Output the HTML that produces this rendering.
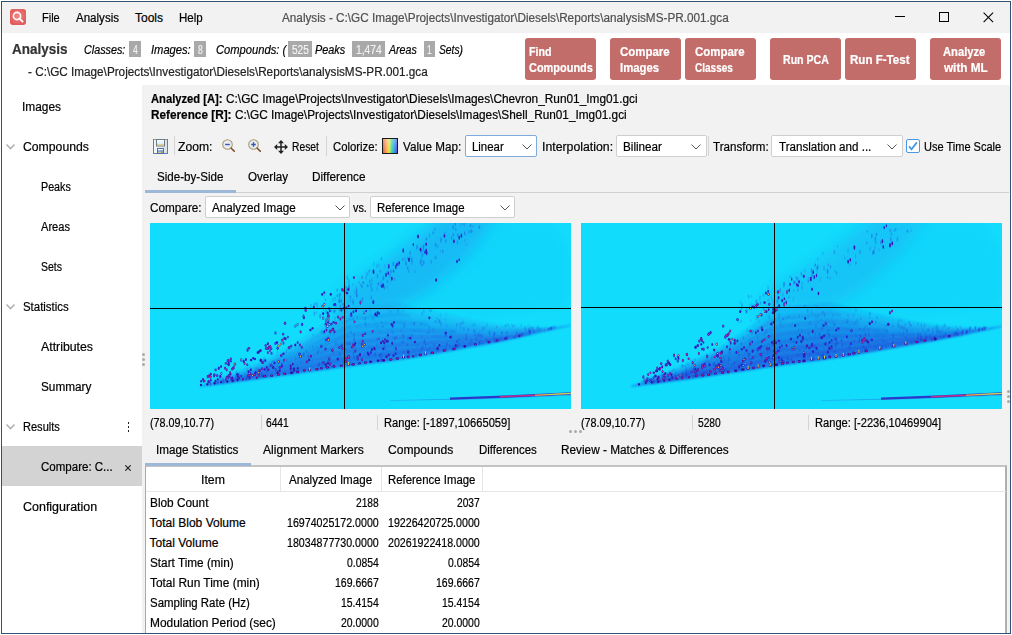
<!DOCTYPE html>
<html><head><meta charset="utf-8">
<style>
html,body{margin:0;padding:0;}
body{width:1012px;height:635px;position:relative;overflow:hidden;background:#fff;font-family:"Liberation Sans",sans-serif;color:#000;}
.a{position:absolute;box-sizing:border-box;}
.t{position:absolute;white-space:pre;transform-origin:0 0;font-family:"Liberation Sans",sans-serif;-webkit-text-stroke:0.2px currentColor;}
.btn{position:absolute;top:38px;width:71px;height:42px;background:#c36d6b;border-radius:3px;}
.badge{position:absolute;top:41px;height:16px;background:#a9a9a9;color:#f4f4f4;font-size:12px;line-height:15px;text-align:center;font-style:normal;}
.sep{position:absolute;width:1px;background:#d4d4d4;}
.dd{position:absolute;box-sizing:border-box;background:#fff;border:1px solid #cfcfcf;border-radius:2px;}
.chev{position:absolute;}
.img{position:absolute;top:223px;width:421px;height:186px;background:#12dcfc;overflow:hidden;}
.vl{position:absolute;top:0;width:1px;height:186px;background:#000;}
.hl{position:absolute;left:0;width:421px;height:1px;background:#000;}
</style></head><body>
<!-- frame -->
<div class="a" style="left:1px;top:1px;width:1010px;height:633px;border:1px solid #2f5275;"></div>
<!-- title bar -->
<div class="a" style="left:2px;top:2px;width:1008px;height:31px;background:#f2f2f2;"></div>
<svg class="a" style="left:10px;top:9px" width="16" height="16" viewBox="0 0 16 16">
  <defs><radialGradient id="ig" cx="0.5" cy="0.45" r="0.6"><stop offset="0" stop-color="#f08a8a"/><stop offset="1" stop-color="#e05656"/></radialGradient></defs>
  <rect x="0" y="0" width="16" height="16" rx="3" fill="url(#ig)"/>
  <circle cx="7" cy="7" r="3.6" fill="none" stroke="#fff" stroke-width="1.6"/>
  <line x1="9.6" y1="9.6" x2="12.6" y2="12.6" stroke="#fff" stroke-width="1.8" stroke-linecap="round"/>
</svg>
<div class="a" style="left:895px;top:16px;width:10px;height:1px;background:#000;"></div>
<div class="a" style="left:939px;top:12px;width:10px;height:10px;border:1px solid #000;"></div>
<svg class="a" style="left:983px;top:12px" width="11" height="11" viewBox="0 0 11 11"><path d="M0.6 0.6L10.1 10.1M10.1 0.6L0.6 10.1" stroke="#000" stroke-width="1.05"/></svg>

<!-- header buttons -->
<div class="btn" style="left:525px"></div>
<div class="btn" style="left:610px"></div>
<div class="btn" style="left:685px"></div>
<div class="btn" style="left:770px"></div>
<div class="btn" style="left:845px"></div>
<div class="btn" style="left:930px"></div>
<!-- badges -->
<div class="badge" style="left:129px;width:12px;"></div>
<div class="badge" style="left:194px;width:12px;"></div>
<div class="badge" style="left:288px;width:24px;"></div>
<div class="badge" style="left:352px;width:33px;"></div>
<div class="badge" style="left:424px;width:11px;"></div>

<!-- main panel -->
<div class="a" style="left:142px;top:85px;width:868px;height:548px;background:#f2f2f2;"></div>

<!-- sidebar -->
<div class="a" style="left:2px;top:446px;width:140px;height:40px;background:#d3d3d3;"></div>
<svg class="a" style="left:5px;top:143px" width="11" height="8" viewBox="0 0 11 8"><path d="M1.5 1.5L5.5 5.5L9.5 1.5" fill="none" stroke="#b2b2b2" stroke-width="1.6"/></svg>
<svg class="a" style="left:5px;top:303px" width="11" height="8" viewBox="0 0 11 8"><path d="M1.5 1.5L5.5 5.5L9.5 1.5" fill="none" stroke="#b2b2b2" stroke-width="1.6"/></svg>
<svg class="a" style="left:5px;top:423px" width="11" height="8" viewBox="0 0 11 8"><path d="M1.5 1.5L5.5 5.5L9.5 1.5" fill="none" stroke="#b2b2b2" stroke-width="1.6"/></svg>
<div class="a" style="left:127.5px;top:422px;width:1.6px;height:1.6px;background:#222;"></div>
<div class="a" style="left:127.5px;top:426px;width:1.6px;height:1.6px;background:#222;"></div>
<div class="a" style="left:127.5px;top:430px;width:1.6px;height:1.6px;background:#222;"></div>
<svg class="a" style="left:124.5px;top:464.5px" width="6" height="6" viewBox="0 0 6 6"><path d="M0.3 0.3L5.7 5.7M5.7 0.3L0.3 5.7" stroke="#222" stroke-width="1.2"/></svg>
<!-- sash dots -->
<div class="a" style="left:142px;top:353px;width:3px;height:3px;border-radius:50%;background:#aaa;"></div>
<div class="a" style="left:142px;top:358px;width:3px;height:3px;border-radius:50%;background:#aaa;"></div>
<div class="a" style="left:142px;top:363px;width:3px;height:3px;border-radius:50%;background:#aaa;"></div>

<!-- toolbar -->
<svg class="a" style="left:153px;top:139px" width="15" height="15" viewBox="0 0 15 15">
  <defs><linearGradient id="sv" x1="0" x2="0" y1="0" y2="1"><stop offset="0" stop-color="#ffffff"/><stop offset="1" stop-color="#cfe0f4"/></linearGradient>
  <linearGradient id="sb" x1="0" x2="1" y1="0" y2="0"><stop offset="0" stop-color="#f4f7fb"/><stop offset="1" stop-color="#d6e0ee"/></linearGradient></defs>
  <rect x="0.5" y="0.5" width="14" height="14" fill="url(#sb)" stroke="#5b7fb5"/>
  <line x1="1" y1="0.5" x2="14" y2="0.5" stroke="#8c9c98"/>
  <rect x="3.5" y="0.5" width="8" height="6.5" fill="url(#sv)" stroke="#6c7c84"/>
  <rect x="4" y="5.2" width="7" height="1.3" fill="#e8c878"/>
  <rect x="4.5" y="9.5" width="6" height="5" fill="#d0def2" stroke="#4f6fb0"/>
  <rect x="5" y="10" width="5" height="1.2" fill="#fff"/>
  <rect x="5" y="11.3" width="3.2" height="1.6" fill="#7ca0e0"/>
  <rect x="5" y="13" width="3.2" height="1" fill="#e0c070"/>
  <rect x="8.3" y="11" width="1.4" height="3" fill="#7a8a7a"/>
</svg>
<div class="sep" style="left:174px;top:136px;height:19px;"></div>
<svg class="a" style="left:221px;top:138px" width="15" height="15" viewBox="0 0 15 15">
  <circle cx="6.5" cy="6.5" r="4.8" fill="#e8ecf2" stroke="#ab9a70" stroke-width="1.1"/>
  <line x1="10.2" y1="10.2" x2="13.3" y2="13.3" stroke="#7a4a28" stroke-width="1.6" stroke-linecap="round"/>
  <line x1="4.2" y1="6.5" x2="8.8" y2="6.5" stroke="#3657b0" stroke-width="1.4"/>
</svg>
<svg class="a" style="left:247px;top:138px" width="15" height="15" viewBox="0 0 15 15">
  <circle cx="6.5" cy="6.5" r="4.8" fill="#e8ecf2" stroke="#ab9a70" stroke-width="1.1"/>
  <line x1="10.2" y1="10.2" x2="13.3" y2="13.3" stroke="#7a4a28" stroke-width="1.6" stroke-linecap="round"/>
  <line x1="4.2" y1="6.5" x2="8.8" y2="6.5" stroke="#3657b0" stroke-width="1.4"/>
  <line x1="6.5" y1="4.2" x2="6.5" y2="8.8" stroke="#3657b0" stroke-width="1.4"/>
</svg>
<svg class="a" style="left:274px;top:140px" width="14" height="14" viewBox="0 0 14 14">
  <path d="M7 0L10 3.2H4Z M7 14L10 10.8H4Z M0 7L3.2 4V10Z M14 7L10.8 4V10Z" fill="#222"/>
  <path d="M7 2V12M2 7H12" stroke="#222" stroke-width="1.5"/>
</svg>
<div class="sep" style="left:326px;top:136px;height:20px;"></div>
<svg class="a" style="left:382px;top:138px" width="16" height="16" viewBox="0 0 16 16">
  <defs><linearGradient id="cg" x1="0" x2="1" y1="0" y2="0">
    <stop offset="0" stop-color="#e84858"/><stop offset="0.25" stop-color="#f0a848"/><stop offset="0.45" stop-color="#e8e048"/>
    <stop offset="0.6" stop-color="#38e090"/><stop offset="0.8" stop-color="#3090f0"/><stop offset="1" stop-color="#5040d0"/></linearGradient>
    <linearGradient id="cv" x1="0" x2="0" y1="0" y2="1"><stop offset="0" stop-color="#fff" stop-opacity="0.35"/><stop offset="1" stop-color="#fff" stop-opacity="0"/></linearGradient></defs>
  <rect x="0.5" y="0.5" width="15" height="15" fill="url(#cg)" stroke="#1a1a1a"/>
  <rect x="1" y="1" width="14" height="14" fill="url(#cv)"/>
</svg>
<div class="dd" style="left:465px;top:135px;width:72px;height:22px;border-color:#7eaadc;"></div>
<svg class="a" style="left:522px;top:144px" width="10" height="6" viewBox="0 0 10 6"><path d="M0.5 0.5L5 5L9.5 0.5" fill="none" stroke="#555" stroke-width="1"/></svg>
<div class="dd" style="left:616px;top:135px;width:91px;height:22px;"></div>
<svg class="a" style="left:691px;top:144px" width="10" height="6" viewBox="0 0 10 6"><path d="M0.5 0.5L5 5L9.5 0.5" fill="none" stroke="#555" stroke-width="1"/></svg>
<div class="sep" style="left:708px;top:136px;height:20px;"></div>
<div class="dd" style="left:771px;top:135px;width:132px;height:22px;"></div>
<svg class="a" style="left:887px;top:144px" width="10" height="6" viewBox="0 0 10 6"><path d="M0.5 0.5L5 5L9.5 0.5" fill="none" stroke="#555" stroke-width="1"/></svg>
<div class="a" style="left:906px;top:139px;width:14px;height:14px;border:1px solid #4898e6;border-radius:2px;background:#fff;"></div>
<svg class="a" style="left:908px;top:141px" width="11" height="11" viewBox="0 0 11 11"><path d="M1 5.2L3.5 8.3L8.9 1.4" fill="none" stroke="#4898e6" stroke-width="1.8"/></svg>

<!-- tabs -->
<div class="a" style="left:145px;top:192px;width:864px;height:1px;background:#d0d0d0;"></div>
<div class="a" style="left:145px;top:190px;width:91px;height:3px;background:#9cb8d6;"></div>
<div class="dd" style="left:205px;top:196px;width:145px;height:22px;"></div>
<svg class="a" style="left:335px;top:205px" width="10" height="6" viewBox="0 0 10 6"><path d="M0.5 0.5L5 5L9.5 0.5" fill="none" stroke="#555" stroke-width="1"/></svg>
<div class="dd" style="left:370px;top:196px;width:145px;height:22px;"></div>
<svg class="a" style="left:500px;top:205px" width="10" height="6" viewBox="0 0 10 6"><path d="M0.5 0.5L5 5L9.5 0.5" fill="none" stroke="#555" stroke-width="1"/></svg>

<!-- images -->
<div class="img" style="left:150px;"><svg width="421" height="186" style="position:absolute;left:0;top:0"><defs><filter id="bl1" x="-30%" y="-30%" width="160%" height="160%"><feGaussianBlur stdDeviation="7"/></filter><filter id="bm1" x="-30%" y="-30%" width="160%" height="160%"><feGaussianBlur stdDeviation="1.0"/></filter><filter id="bs1" x="-50%" y="-50%" width="200%" height="200%"><feGaussianBlur stdDeviation="0.4"/></filter></defs><g filter="url(#bm1)" fill="#2048dc"><polygon points="50.0,163.8 58.0,162.8 66.0,161.7 74.0,160.6 82.0,159.6 90.0,158.5 98.0,157.4 106.0,156.4 114.0,155.3 122.0,154.2 130.0,153.1 138.0,152.0 146.0,150.9 154.0,149.7 162.0,148.6 170.0,147.5 178.0,146.4 186.0,145.3 194.0,144.1 202.0,143.1 210.0,142.0 218.0,141.0 226.0,139.9 234.0,138.9 242.0,137.9 250.0,136.8 258.0,135.8 266.0,134.4 274.0,132.9 282.0,131.5 290.0,130.0 298.0,128.5 306.0,127.1 314.0,125.6 322.0,124.1 330.0,122.7 338.0,121.2 346.0,119.7 354.0,118.1 362.0,116.2 370.0,114.3 378.0,112.5 386.0,110.6 394.0,108.8 402.0,106.9 410.0,105.0 418.0,103.2 421.0,102.5 421.0,102.0 418.0,102.7 410.0,104.4 402.0,106.2 394.0,107.8 386.0,109.3 378.0,110.9 370.0,112.5 362.0,114.0 354.0,115.6 346.0,116.9 338.0,118.0 330.0,119.1 322.0,120.2 314.0,121.3 306.0,122.4 298.0,123.4 290.0,124.5 282.0,125.6 274.0,126.6 266.0,127.7 258.0,128.7 250.0,129.3 242.0,130.3 234.0,131.3 226.0,132.3 218.0,133.3 210.0,134.4 202.0,135.4 194.0,136.5 186.0,138.1 178.0,139.8 170.0,141.5 162.0,143.2 154.0,144.9 146.0,146.6 138.0,148.1 130.0,149.6 122.0,151.1 114.0,152.5 106.0,153.9 98.0,155.3 90.0,156.6 82.0,157.9 74.0,159.3 66.0,160.6 58.0,162.0 50.0,163.3" fill-opacity="0.110"/><polygon points="50.0,163.8 58.0,162.8 66.0,161.7 74.0,160.6 82.0,159.6 90.0,158.5 98.0,157.4 106.0,156.4 114.0,155.3 122.0,154.2 130.0,153.1 138.0,152.0 146.0,150.9 154.0,149.7 162.0,148.6 170.0,147.5 178.0,146.4 186.0,145.3 194.0,144.1 202.0,143.1 210.0,142.0 218.0,141.0 226.0,139.9 234.0,138.9 242.0,137.9 250.0,136.8 258.0,135.8 266.0,134.4 274.0,132.9 282.0,131.5 290.0,130.0 298.0,128.5 306.0,127.1 314.0,125.6 322.0,124.1 330.0,122.7 338.0,121.2 346.0,119.7 354.0,118.1 362.0,116.2 370.0,114.3 378.0,112.5 386.0,110.6 394.0,108.8 402.0,106.9 410.0,105.0 418.0,103.2 421.0,102.5 421.0,102.0 418.0,102.6 410.0,104.3 402.0,106.0 394.0,107.3 386.0,108.6 378.0,109.8 370.0,111.1 362.0,112.4 354.0,113.6 346.0,114.6 338.0,115.4 330.0,116.1 322.0,116.8 314.0,117.5 306.0,118.2 298.0,118.8 290.0,119.5 282.0,120.2 274.0,120.8 266.0,121.5 258.0,122.1 250.0,122.3 242.0,123.3 234.0,124.3 226.0,125.2 218.0,126.2 210.0,127.2 202.0,128.1 194.0,129.3 186.0,131.5 178.0,133.8 170.0,136.0 162.0,138.3 154.0,140.5 146.0,142.8 138.0,144.8 130.0,146.6 122.0,148.4 114.0,150.1 106.0,151.9 98.0,153.6 90.0,155.2 82.0,156.8 74.0,158.5 66.0,160.1 58.0,161.7 50.0,163.3" fill-opacity="0.110"/><polygon points="50.0,163.8 58.0,162.8 66.0,161.7 74.0,160.6 82.0,159.6 90.0,158.5 98.0,157.4 106.0,156.4 114.0,155.3 122.0,154.2 130.0,153.1 138.0,152.0 146.0,150.9 154.0,149.7 162.0,148.6 170.0,147.5 178.0,146.4 186.0,145.3 194.0,144.1 202.0,143.1 210.0,142.0 218.0,141.0 226.0,139.9 234.0,138.9 242.0,137.9 250.0,136.8 258.0,135.8 266.0,134.4 274.0,132.9 282.0,131.5 290.0,130.0 298.0,128.5 306.0,127.1 314.0,125.6 322.0,124.1 330.0,122.7 338.0,121.2 346.0,119.7 354.0,118.1 362.0,116.2 370.0,114.3 378.0,112.5 386.0,110.6 394.0,108.8 402.0,106.9 410.0,105.0 418.0,103.2 421.0,102.5 421.0,102.0 418.0,102.6 410.0,104.2 402.0,105.7 394.0,106.8 386.0,107.8 378.0,108.7 370.0,109.7 362.0,110.7 354.0,111.6 346.0,112.3 338.0,112.7 330.0,113.0 322.0,113.4 314.0,113.7 306.0,114.0 298.0,114.2 290.0,114.5 282.0,114.8 274.0,115.0 266.0,115.3 258.0,115.5 250.0,115.3 242.0,116.2 234.0,117.2 226.0,118.1 218.0,119.1 210.0,120.0 202.0,120.9 194.0,122.1 186.0,124.9 178.0,127.7 170.0,130.6 162.0,133.4 154.0,136.2 146.0,139.0 138.0,141.5 130.0,143.6 122.0,145.7 114.0,147.8 106.0,149.9 98.0,151.9 90.0,153.8 82.0,155.7 74.0,157.6 66.0,159.5 58.0,161.4 50.0,163.3" fill-opacity="0.110"/><polygon points="50.0,163.8 58.0,162.8 66.0,161.7 74.0,160.6 82.0,159.6 90.0,158.5 98.0,157.4 106.0,156.4 114.0,155.3 122.0,154.2 130.0,153.1 138.0,152.0 146.0,150.9 154.0,149.7 162.0,148.6 170.0,147.5 178.0,146.4 186.0,145.3 194.0,144.1 202.0,143.1 210.0,142.0 218.0,141.0 226.0,139.9 234.0,138.9 242.0,137.9 250.0,136.8 258.0,135.8 266.0,134.4 274.0,132.9 282.0,131.5 290.0,130.0 298.0,128.5 306.0,127.1 314.0,125.6 322.0,124.1 330.0,122.7 338.0,121.2 346.0,119.7 354.0,118.1 362.0,116.2 370.0,114.3 378.0,112.5 386.0,110.6 394.0,108.8 402.0,106.9 410.0,105.0 418.0,103.2 421.0,102.5 421.0,102.0 418.0,102.6 410.0,104.0 402.0,105.5 394.0,106.4 386.0,107.0 378.0,107.7 370.0,108.3 362.0,109.0 354.0,109.7 346.0,110.0 338.0,110.0 330.0,110.0 322.0,110.0 314.0,109.9 306.0,109.8 298.0,109.6 290.0,109.5 282.0,109.4 274.0,109.2 266.0,109.1 258.0,108.9 250.0,108.3 242.0,109.2 234.0,110.1 226.0,111.0 218.0,111.9 210.0,112.8 202.0,113.7 194.0,114.9 186.0,118.3 178.0,121.7 170.0,125.1 162.0,128.5 154.0,131.8 146.0,135.2 138.0,138.1 130.0,140.6 122.0,143.1 114.0,145.5 106.0,147.9 98.0,150.2 90.0,152.4 82.0,154.6 74.0,156.8 66.0,159.0 58.0,161.1 50.0,163.3" fill-opacity="0.110"/><polygon points="50.0,163.8 58.0,162.8 66.0,161.7 74.0,160.6 82.0,159.6 90.0,158.5 98.0,157.4 106.0,156.4 114.0,155.3 122.0,154.2 130.0,153.1 138.0,152.0 146.0,150.9 154.0,149.7 162.0,148.6 170.0,147.5 178.0,146.4 186.0,145.3 194.0,144.1 202.0,143.1 210.0,142.0 218.0,141.0 226.0,139.9 234.0,138.9 242.0,137.9 250.0,136.8 258.0,135.8 266.0,134.4 274.0,132.9 282.0,131.5 290.0,130.0 298.0,128.5 306.0,127.1 314.0,125.6 322.0,124.1 330.0,122.7 338.0,121.2 346.0,119.7 354.0,118.1 362.0,116.2 370.0,114.3 378.0,112.5 386.0,110.6 394.0,108.8 402.0,106.9 410.0,105.0 418.0,103.2 421.0,102.5 421.0,102.0 418.0,102.5 410.0,103.9 402.0,105.3 394.0,105.9 386.0,106.2 378.0,106.6 370.0,107.0 362.0,107.3 354.0,107.7 346.0,107.7 338.0,107.3 330.0,107.0 322.0,106.6 314.0,106.1 306.0,105.6 298.0,105.0 290.0,104.5 282.0,104.0 274.0,103.4 266.0,102.9 258.0,102.3 250.0,101.3 242.0,102.2 234.0,103.0 226.0,103.9 218.0,104.8 210.0,105.6 202.0,106.5 194.0,107.7 186.0,111.7 178.0,115.6 170.0,119.6 162.0,123.5 154.0,127.5 146.0,131.4 138.0,134.8 130.0,137.6 122.0,140.4 114.0,143.1 106.0,145.9 98.0,148.5 90.0,151.0 82.0,153.5 74.0,155.9 66.0,158.4 58.0,160.9 50.0,163.3" fill-opacity="0.110"/><polygon points="50.0,163.8 58.0,162.8 66.0,161.7 74.0,160.6 82.0,159.6 90.0,158.5 98.0,157.4 106.0,156.4 114.0,155.3 122.0,154.2 130.0,153.1 138.0,152.0 146.0,150.9 154.0,149.7 162.0,148.6 170.0,147.5 178.0,146.4 186.0,145.3 194.0,144.1 202.0,143.1 210.0,142.0 218.0,141.0 226.0,139.9 234.0,138.9 242.0,137.9 250.0,136.8 258.0,135.8 266.0,134.4 274.0,132.9 282.0,131.5 290.0,130.0 298.0,128.5 306.0,127.1 314.0,125.6 322.0,124.1 330.0,122.7 338.0,121.2 346.0,119.7 354.0,118.1 362.0,116.2 370.0,114.3 378.0,112.5 386.0,110.6 394.0,108.8 402.0,106.9 410.0,105.0 418.0,103.2 421.0,102.5 421.0,102.0 418.0,102.5 410.0,103.8 402.0,105.0 394.0,105.4 386.0,105.5 378.0,105.5 370.0,105.6 362.0,105.7 354.0,105.7 346.0,105.4 338.0,104.7 330.0,103.9 322.0,103.2 314.0,102.3 306.0,101.4 298.0,100.4 290.0,99.5 282.0,98.6 274.0,97.6 266.0,96.7 258.0,95.7 250.0,94.3 242.0,95.1 234.0,96.0 226.0,96.8 218.0,97.6 210.0,98.4 202.0,99.3 194.0,100.6 186.0,105.1 178.0,109.6 170.0,114.1 162.0,118.6 154.0,123.1 146.0,127.7 138.0,131.5 130.0,134.6 122.0,137.7 114.0,140.8 106.0,143.9 98.0,146.9 90.0,149.6 82.0,152.3 74.0,155.1 66.0,157.8 58.0,160.6 50.0,163.3" fill-opacity="0.110"/><polygon points="50.0,163.8 58.0,162.8 66.0,161.7 74.0,160.6 82.0,159.6 90.0,158.5 98.0,157.4 106.0,156.4 114.0,155.3 122.0,154.2 130.0,153.1 138.0,152.0 146.0,150.9 154.0,149.7 162.0,148.6 170.0,147.5 178.0,146.4 186.0,145.3 194.0,144.1 202.0,143.1 210.0,142.0 218.0,141.0 226.0,139.9 234.0,138.9 242.0,137.9 250.0,136.8 258.0,135.8 266.0,134.4 274.0,132.9 282.0,131.5 290.0,130.0 298.0,128.5 306.0,127.1 314.0,125.6 322.0,124.1 330.0,122.7 338.0,121.2 346.0,119.7 354.0,118.1 362.0,116.2 370.0,114.3 378.0,112.5 386.0,110.6 394.0,108.8 402.0,106.9 410.0,105.0 418.0,103.2 421.0,102.5 421.0,102.0 418.0,102.4 410.0,103.6 402.0,104.8 394.0,104.9 386.0,104.7 378.0,104.4 370.0,104.2 362.0,104.0 354.0,103.7 346.0,103.1 338.0,102.0 330.0,100.9 322.0,99.8 314.0,98.5 306.0,97.2 298.0,95.8 290.0,94.5 282.0,93.2 274.0,91.8 266.0,90.5 258.0,89.1 250.0,87.3 242.0,88.1 234.0,88.9 226.0,89.7 218.0,90.5 210.0,91.3 202.0,92.1 194.0,93.4 186.0,98.5 178.0,103.5 170.0,108.6 162.0,113.7 154.0,118.8 146.0,123.9 138.0,128.1 130.0,131.6 122.0,135.1 114.0,138.5 106.0,141.9 98.0,145.2 90.0,148.2 82.0,151.2 74.0,154.3 66.0,157.3 58.0,160.3 50.0,163.3" fill-opacity="0.110"/><polygon points="50.0,163.8 58.0,162.8 66.0,161.7 74.0,160.6 82.0,159.6 90.0,158.5 98.0,157.4 106.0,156.4 114.0,155.3 122.0,154.2 130.0,153.1 138.0,152.0 146.0,150.9 154.0,149.7 162.0,148.6 170.0,147.5 178.0,146.4 186.0,145.3 194.0,144.1 202.0,143.1 210.0,142.0 218.0,141.0 226.0,139.9 234.0,138.9 242.0,137.9 250.0,136.8 258.0,135.8 266.0,134.4 274.0,132.9 282.0,131.5 290.0,130.0 298.0,128.5 306.0,127.1 314.0,125.6 322.0,124.1 330.0,122.7 338.0,121.2 346.0,119.7 354.0,118.1 362.0,116.2 370.0,114.3 378.0,112.5 386.0,110.6 394.0,108.8 402.0,106.9 410.0,105.0 418.0,103.2 421.0,102.5 421.0,102.0 418.0,102.4 410.0,103.5 402.0,104.6 394.0,104.5 386.0,103.9 378.0,103.4 370.0,102.8 362.0,102.3 354.0,101.8 346.0,100.8 338.0,99.3 330.0,97.8 322.0,96.4 314.0,94.7 306.0,93.0 298.0,91.2 290.0,89.5 282.0,87.8 274.0,86.0 266.0,84.3 258.0,82.5 250.0,80.3 242.0,81.1 234.0,81.8 226.0,82.6 218.0,83.3 210.0,84.1 202.0,84.8 194.0,86.2 186.0,91.9 178.0,97.5 170.0,103.2 162.0,108.8 154.0,114.4 146.0,120.1 138.0,124.8 130.0,128.6 122.0,132.4 114.0,136.1 106.0,139.9 98.0,143.5 90.0,146.8 82.0,150.1 74.0,153.4 66.0,156.7 58.0,160.0 50.0,163.3" fill-opacity="0.110"/></g><g filter="url(#bl1)"><polygon points="175.0,90.0 195.0,66.0 240.0,34.0 282.0,2.0 290.0,-10.0 350.0,-10.0 320.0,30.0 280.0,66.0 240.0,90.0" fill="#2058e0" fill-opacity="0.26"/><polygon points="250.0,80.0 310.0,30.0 350.0,-5.0 400.0,-5.0 421.0,30.0 421.0,80.0 330.0,95.0" fill="#18a8f2" fill-opacity="0.12"/></g><g filter="url(#bm1)" fill="none" stroke="#2a28c8"><polyline points="70.0,159.9 80.0,158.2 90.0,156.5 100.0,154.8 110.0,153.0 120.0,151.2 130.0,149.4 140.0,147.6 150.0,145.5 160.0,143.3 170.0,141.2 180.0,139.0 190.0,136.8 200.0,135.1 210.0,133.9 220.0,132.6 230.0,131.4 240.0,130.1 250.0,128.8 260.0,128.1 270.0,126.8 280.0,125.5 290.0,124.2 300.0,122.9 310.0,121.6 320.0,120.3 330.0,118.9 340.0,117.6 350.0,116.2 360.0,114.3 370.0,112.4 380.0,110.4" stroke-width="1.5" stroke-opacity="0.36"/><polyline points="82.0,156.7 92.0,154.6 102.0,152.5 112.0,150.3 122.0,148.0 132.0,145.7 142.0,143.5 152.0,140.5 162.0,137.6 172.0,134.7 182.0,131.8 192.0,128.9 202.0,127.2 212.0,126.0 222.0,124.8 232.0,123.6 242.0,122.3 252.0,121.3 262.0,121.0 272.0,120.2 282.0,119.4 292.0,118.7 302.0,117.9 312.0,117.1 322.0,116.4 332.0,115.5 342.0,114.7 352.0,113.7" stroke-width="1.5" stroke-opacity="0.32"/><polyline points="94.0,152.5 104.0,150.0 114.0,147.3 124.0,144.6 134.0,141.9 144.0,139.0 154.0,135.3 164.0,131.7 174.0,128.0 184.0,124.3 194.0,120.7 204.0,119.3 214.0,118.1 224.0,116.9 234.0,115.8 244.0,114.6 254.0,114.0 264.0,114.1 274.0,113.9 284.0,113.6 294.0,113.4 304.0,113.2 314.0,112.9 324.0,112.7 334.0,112.3" stroke-width="1.5" stroke-opacity="0.28"/><polyline points="106.0,147.3 116.0,144.2 126.0,141.1 136.0,137.9 146.0,134.2 156.0,129.8 166.0,125.4 176.0,121.0 186.0,116.5 196.0,112.5 206.0,111.3 216.0,110.2 226.0,109.1 236.0,108.0 246.0,106.9 256.0,106.9 266.0,107.4 276.0,107.7 286.0,108.0 296.0,108.3 306.0,108.6" stroke-width="1.5" stroke-opacity="0.24"/><polyline points="118.0,140.9 128.0,137.3 138.0,133.7 148.0,129.1 158.0,124.0 168.0,118.8 178.0,113.6 188.0,108.5 198.0,104.5 208.0,103.4 218.0,102.4 228.0,101.3 238.0,100.3 248.0,99.2 258.0,100.1 268.0,101.0 278.0,101.8" stroke-width="1.5" stroke-opacity="0.20"/><polyline points="130.0,133.4 140.0,129.3 150.0,123.8 160.0,117.8 170.0,111.9 180.0,106.0 190.0,100.1 200.0,96.6 210.0,95.6 220.0,94.6 230.0,93.5 240.0,92.5 250.0,91.5 260.0,93.4" stroke-width="1.5" stroke-opacity="0.16"/></g><g filter="url(#bs1)" fill="#2828d0"><ellipse cx="60.1" cy="159.6" rx="0.7" ry="2.1" fill-opacity="0.18"/><ellipse cx="253.2" cy="113.0" rx="0.8" ry="2.2" fill-opacity="0.32"/><ellipse cx="179.2" cy="109.2" rx="1.0" ry="1.7" fill-opacity="0.10"/><ellipse cx="231.6" cy="99.8" rx="0.8" ry="1.4" fill-opacity="0.21"/><ellipse cx="172.0" cy="108.2" rx="0.7" ry="1.9" fill-opacity="0.13"/><ellipse cx="399.8" cy="105.8" rx="1.0" ry="1.7" fill-opacity="0.22"/><ellipse cx="131.8" cy="142.8" rx="1.0" ry="2.4" fill-opacity="0.32"/><ellipse cx="270.9" cy="126.5" rx="0.8" ry="2.0" fill-opacity="0.19"/><ellipse cx="400.5" cy="105.7" rx="0.7" ry="1.4" fill-opacity="0.16"/><ellipse cx="82.0" cy="157.0" rx="0.7" ry="2.3" fill-opacity="0.26"/><ellipse cx="275.6" cy="121.7" rx="0.7" ry="1.9" fill-opacity="0.29"/><ellipse cx="89.4" cy="151.3" rx="0.7" ry="2.0" fill-opacity="0.16"/><ellipse cx="110.9" cy="153.3" rx="0.9" ry="1.8" fill-opacity="0.14"/><ellipse cx="372.4" cy="110.8" rx="0.7" ry="1.2" fill-opacity="0.19"/><ellipse cx="253.1" cy="88.3" rx="0.7" ry="1.8" fill-opacity="0.08"/><ellipse cx="297.0" cy="121.1" rx="0.8" ry="1.5" fill-opacity="0.32"/><ellipse cx="398.2" cy="106.1" rx="0.8" ry="1.3" fill-opacity="0.32"/><ellipse cx="373.0" cy="111.7" rx="0.9" ry="1.6" fill-opacity="0.24"/><ellipse cx="257.4" cy="121.7" rx="0.9" ry="1.6" fill-opacity="0.23"/><ellipse cx="183.1" cy="130.0" rx="0.7" ry="1.6" fill-opacity="0.13"/><ellipse cx="274.3" cy="118.9" rx="0.8" ry="2.3" fill-opacity="0.14"/><ellipse cx="242.6" cy="109.5" rx="0.9" ry="2.1" fill-opacity="0.17"/><ellipse cx="379.2" cy="106.2" rx="0.6" ry="1.9" fill-opacity="0.19"/><ellipse cx="382.7" cy="105.4" rx="0.9" ry="2.0" fill-opacity="0.22"/><ellipse cx="214.2" cy="120.2" rx="0.8" ry="1.2" fill-opacity="0.22"/><ellipse cx="205.9" cy="125.0" rx="0.8" ry="2.0" fill-opacity="0.20"/><ellipse cx="258.2" cy="128.2" rx="1.0" ry="2.0" fill-opacity="0.30"/><ellipse cx="314.7" cy="123.8" rx="0.7" ry="1.7" fill-opacity="0.24"/><ellipse cx="197.2" cy="120.6" rx="0.9" ry="2.1" fill-opacity="0.26"/><ellipse cx="200.2" cy="96.6" rx="0.9" ry="2.4" fill-opacity="0.08"/><ellipse cx="259.3" cy="130.3" rx="0.9" ry="2.3" fill-opacity="0.30"/><ellipse cx="171.3" cy="109.5" rx="0.8" ry="2.0" fill-opacity="0.10"/><ellipse cx="97.0" cy="146.0" rx="0.9" ry="1.7" fill-opacity="0.09"/><ellipse cx="162.7" cy="112.5" rx="0.7" ry="2.1" fill-opacity="0.12"/><ellipse cx="385.6" cy="107.9" rx="1.0" ry="1.8" fill-opacity="0.11"/><ellipse cx="196.1" cy="126.3" rx="0.7" ry="1.3" fill-opacity="0.24"/><ellipse cx="310.6" cy="104.8" rx="0.7" ry="1.4" fill-opacity="0.17"/><ellipse cx="308.4" cy="121.9" rx="1.0" ry="2.4" fill-opacity="0.20"/><ellipse cx="110.3" cy="147.1" rx="0.7" ry="2.3" fill-opacity="0.23"/><ellipse cx="203.0" cy="95.8" rx="0.9" ry="2.1" fill-opacity="0.09"/><ellipse cx="189.5" cy="132.2" rx="0.9" ry="1.5" fill-opacity="0.14"/><ellipse cx="214.3" cy="130.3" rx="0.9" ry="1.6" fill-opacity="0.14"/><ellipse cx="290.5" cy="92.5" rx="0.9" ry="1.9" fill-opacity="0.08"/><ellipse cx="128.9" cy="138.9" rx="1.0" ry="1.8" fill-opacity="0.29"/><ellipse cx="97.3" cy="154.0" rx="0.7" ry="2.0" fill-opacity="0.21"/><ellipse cx="286.0" cy="128.7" rx="0.9" ry="2.1" fill-opacity="0.17"/><ellipse cx="116.7" cy="148.3" rx="0.8" ry="1.8" fill-opacity="0.34"/><ellipse cx="107.1" cy="146.5" rx="0.8" ry="1.9" fill-opacity="0.15"/><ellipse cx="322.2" cy="102.3" rx="0.6" ry="1.6" fill-opacity="0.08"/><ellipse cx="264.3" cy="100.6" rx="0.8" ry="2.4" fill-opacity="0.23"/><ellipse cx="288.5" cy="127.3" rx="0.7" ry="2.2" fill-opacity="0.25"/><ellipse cx="138.7" cy="150.4" rx="0.9" ry="1.5" fill-opacity="0.15"/><ellipse cx="232.6" cy="103.5" rx="0.8" ry="1.2" fill-opacity="0.26"/><ellipse cx="194.8" cy="115.1" rx="0.7" ry="1.6" fill-opacity="0.12"/><ellipse cx="329.3" cy="119.8" rx="0.8" ry="2.1" fill-opacity="0.38"/><ellipse cx="67.6" cy="157.1" rx="0.7" ry="1.2" fill-opacity="0.19"/><ellipse cx="200.7" cy="124.2" rx="0.7" ry="1.4" fill-opacity="0.13"/><ellipse cx="231.2" cy="137.5" rx="1.0" ry="2.0" fill-opacity="0.38"/><ellipse cx="310.5" cy="101.1" rx="0.9" ry="2.1" fill-opacity="0.20"/><ellipse cx="215.1" cy="95.8" rx="0.9" ry="2.0" fill-opacity="0.24"/><ellipse cx="337.6" cy="117.7" rx="1.0" ry="1.5" fill-opacity="0.16"/><ellipse cx="296.4" cy="91.1" rx="0.9" ry="1.4" fill-opacity="0.11"/><ellipse cx="183.8" cy="110.4" rx="0.6" ry="2.1" fill-opacity="0.12"/><ellipse cx="70.0" cy="154.6" rx="0.9" ry="2.1" fill-opacity="0.20"/><ellipse cx="240.4" cy="88.7" rx="0.8" ry="1.8" fill-opacity="0.19"/><ellipse cx="329.8" cy="108.4" rx="0.7" ry="1.8" fill-opacity="0.12"/><ellipse cx="201.1" cy="109.3" rx="0.9" ry="1.8" fill-opacity="0.18"/><ellipse cx="356.7" cy="109.8" rx="0.8" ry="1.4" fill-opacity="0.27"/><ellipse cx="357.5" cy="101.3" rx="0.9" ry="1.3" fill-opacity="0.12"/><ellipse cx="136.7" cy="137.1" rx="0.7" ry="1.9" fill-opacity="0.29"/><ellipse cx="307.2" cy="118.2" rx="0.9" ry="1.7" fill-opacity="0.29"/><ellipse cx="136.1" cy="128.7" rx="0.8" ry="1.3" fill-opacity="0.11"/><ellipse cx="206.4" cy="134.9" rx="0.8" ry="1.5" fill-opacity="0.25"/><ellipse cx="325.3" cy="112.1" rx="0.7" ry="2.0" fill-opacity="0.23"/><ellipse cx="274.5" cy="117.9" rx="0.8" ry="2.2" fill-opacity="0.19"/><ellipse cx="202.6" cy="85.4" rx="0.9" ry="1.4" fill-opacity="0.18"/><ellipse cx="227.5" cy="104.3" rx="0.8" ry="1.6" fill-opacity="0.14"/><ellipse cx="237.9" cy="85.9" rx="0.7" ry="1.4" fill-opacity="0.19"/><ellipse cx="221.7" cy="124.8" rx="0.8" ry="1.7" fill-opacity="0.12"/><ellipse cx="252.0" cy="119.3" rx="0.9" ry="1.5" fill-opacity="0.13"/><ellipse cx="281.3" cy="87.2" rx="0.9" ry="2.0" fill-opacity="0.18"/><ellipse cx="86.1" cy="149.0" rx="1.0" ry="1.5" fill-opacity="0.09"/><ellipse cx="355.6" cy="102.8" rx="0.8" ry="1.6" fill-opacity="0.21"/><ellipse cx="352.6" cy="116.4" rx="0.7" ry="2.1" fill-opacity="0.20"/><ellipse cx="389.4" cy="106.7" rx="0.9" ry="1.4" fill-opacity="0.11"/><ellipse cx="207.2" cy="94.1" rx="0.9" ry="1.3" fill-opacity="0.22"/><ellipse cx="379.6" cy="110.2" rx="0.9" ry="2.4" fill-opacity="0.18"/><ellipse cx="307.1" cy="118.3" rx="0.6" ry="1.4" fill-opacity="0.27"/><ellipse cx="123.9" cy="138.4" rx="0.7" ry="1.3" fill-opacity="0.21"/><ellipse cx="284.4" cy="121.7" rx="1.0" ry="2.0" fill-opacity="0.18"/><ellipse cx="204.2" cy="112.2" rx="0.7" ry="2.4" fill-opacity="0.21"/><ellipse cx="185.0" cy="95.9" rx="0.7" ry="2.1" fill-opacity="0.17"/><ellipse cx="203.5" cy="130.6" rx="0.9" ry="2.1" fill-opacity="0.25"/><ellipse cx="334.1" cy="105.1" rx="0.9" ry="1.5" fill-opacity="0.10"/><ellipse cx="313.6" cy="100.0" rx="0.9" ry="1.6" fill-opacity="0.09"/><ellipse cx="133.1" cy="139.5" rx="0.6" ry="2.3" fill-opacity="0.13"/><ellipse cx="316.4" cy="111.9" rx="0.7" ry="1.3" fill-opacity="0.24"/><ellipse cx="87.9" cy="151.4" rx="0.8" ry="1.7" fill-opacity="0.28"/><ellipse cx="285.5" cy="98.4" rx="1.0" ry="1.6" fill-opacity="0.21"/><ellipse cx="245.0" cy="115.5" rx="0.9" ry="1.9" fill-opacity="0.27"/><ellipse cx="306.5" cy="123.9" rx="1.0" ry="1.8" fill-opacity="0.20"/><ellipse cx="261.9" cy="112.6" rx="0.7" ry="1.6" fill-opacity="0.23"/><ellipse cx="344.1" cy="110.5" rx="0.9" ry="1.6" fill-opacity="0.27"/><ellipse cx="404.9" cy="104.0" rx="0.8" ry="2.0" fill-opacity="0.22"/><ellipse cx="395.4" cy="103.7" rx="0.6" ry="1.4" fill-opacity="0.08"/><ellipse cx="225.8" cy="89.8" rx="0.6" ry="1.8" fill-opacity="0.12"/><ellipse cx="398.8" cy="105.7" rx="0.9" ry="2.2" fill-opacity="0.16"/><ellipse cx="272.1" cy="91.0" rx="0.8" ry="1.9" fill-opacity="0.20"/><ellipse cx="169.1" cy="141.2" rx="1.0" ry="2.1" fill-opacity="0.29"/><ellipse cx="179.3" cy="136.3" rx="0.8" ry="1.6" fill-opacity="0.19"/><ellipse cx="375.7" cy="107.1" rx="1.0" ry="2.1" fill-opacity="0.15"/><ellipse cx="72.6" cy="156.3" rx="0.8" ry="1.8" fill-opacity="0.29"/><ellipse cx="99.4" cy="142.7" rx="0.8" ry="1.6" fill-opacity="0.12"/><ellipse cx="402.7" cy="104.5" rx="0.6" ry="2.0" fill-opacity="0.11"/><ellipse cx="106.0" cy="145.9" rx="0.8" ry="2.2" fill-opacity="0.10"/><ellipse cx="401.2" cy="105.4" rx="1.0" ry="1.8" fill-opacity="0.36"/><ellipse cx="266.0" cy="132.0" rx="0.8" ry="2.4" fill-opacity="0.28"/><ellipse cx="114.4" cy="135.9" rx="0.9" ry="2.2" fill-opacity="0.20"/><ellipse cx="306.9" cy="101.7" rx="0.8" ry="1.8" fill-opacity="0.24"/><ellipse cx="142.0" cy="123.2" rx="0.8" ry="1.3" fill-opacity="0.17"/><ellipse cx="219.1" cy="123.5" rx="0.7" ry="1.2" fill-opacity="0.17"/><ellipse cx="223.2" cy="95.4" rx="0.9" ry="2.4" fill-opacity="0.17"/><ellipse cx="89.1" cy="152.5" rx="0.7" ry="1.3" fill-opacity="0.30"/><ellipse cx="152.9" cy="132.5" rx="0.7" ry="1.3" fill-opacity="0.17"/><ellipse cx="127.1" cy="143.7" rx="0.9" ry="1.3" fill-opacity="0.17"/><ellipse cx="247.8" cy="87.6" rx="0.8" ry="2.3" fill-opacity="0.21"/><ellipse cx="232.1" cy="134.6" rx="0.8" ry="2.3" fill-opacity="0.22"/><ellipse cx="220.7" cy="91.7" rx="1.0" ry="1.5" fill-opacity="0.08"/><ellipse cx="212.4" cy="112.3" rx="0.9" ry="1.9" fill-opacity="0.19"/><ellipse cx="371.4" cy="112.3" rx="0.8" ry="1.4" fill-opacity="0.22"/><ellipse cx="403.1" cy="104.5" rx="0.6" ry="2.0" fill-opacity="0.15"/><ellipse cx="330.6" cy="118.8" rx="0.8" ry="2.1" fill-opacity="0.13"/><ellipse cx="272.5" cy="124.3" rx="0.9" ry="1.9" fill-opacity="0.25"/><ellipse cx="228.7" cy="115.7" rx="1.0" ry="1.4" fill-opacity="0.28"/><ellipse cx="168.3" cy="142.6" rx="0.8" ry="2.0" fill-opacity="0.13"/><ellipse cx="117.7" cy="145.5" rx="0.7" ry="2.1" fill-opacity="0.11"/><ellipse cx="273.8" cy="88.4" rx="0.9" ry="2.2" fill-opacity="0.15"/><ellipse cx="126.5" cy="132.2" rx="0.9" ry="1.2" fill-opacity="0.08"/><ellipse cx="207.7" cy="140.7" rx="0.7" ry="1.5" fill-opacity="0.13"/><ellipse cx="175.7" cy="104.5" rx="0.7" ry="2.3" fill-opacity="0.18"/><ellipse cx="272.1" cy="125.1" rx="0.7" ry="1.8" fill-opacity="0.11"/><ellipse cx="333.1" cy="119.8" rx="0.7" ry="2.0" fill-opacity="0.13"/><ellipse cx="321.0" cy="117.4" rx="0.6" ry="1.3" fill-opacity="0.28"/><ellipse cx="379.2" cy="108.7" rx="0.8" ry="1.3" fill-opacity="0.30"/><ellipse cx="194.5" cy="139.1" rx="0.6" ry="2.1" fill-opacity="0.15"/><ellipse cx="258.0" cy="115.9" rx="1.0" ry="2.3" fill-opacity="0.19"/><ellipse cx="287.1" cy="95.3" rx="0.9" ry="1.5" fill-opacity="0.11"/><ellipse cx="323.5" cy="102.2" rx="0.6" ry="2.0" fill-opacity="0.17"/><ellipse cx="250.6" cy="107.9" rx="0.8" ry="1.3" fill-opacity="0.14"/><ellipse cx="92.7" cy="156.6" rx="0.8" ry="1.6" fill-opacity="0.18"/><ellipse cx="389.0" cy="105.9" rx="0.7" ry="2.0" fill-opacity="0.14"/><ellipse cx="362.9" cy="103.1" rx="0.9" ry="1.5" fill-opacity="0.20"/><ellipse cx="278.5" cy="109.5" rx="1.0" ry="2.3" fill-opacity="0.19"/><ellipse cx="278.3" cy="126.7" rx="0.6" ry="1.6" fill-opacity="0.25"/><ellipse cx="200.5" cy="138.6" rx="0.7" ry="1.8" fill-opacity="0.17"/><ellipse cx="173.5" cy="110.8" rx="0.7" ry="1.3" fill-opacity="0.12"/><ellipse cx="365.9" cy="113.8" rx="1.0" ry="2.1" fill-opacity="0.27"/><ellipse cx="234.9" cy="117.9" rx="0.6" ry="2.2" fill-opacity="0.33"/><ellipse cx="188.4" cy="136.2" rx="1.0" ry="1.2" fill-opacity="0.36"/><ellipse cx="107.4" cy="149.9" rx="0.8" ry="2.1" fill-opacity="0.13"/><ellipse cx="350.9" cy="115.9" rx="1.0" ry="2.0" fill-opacity="0.12"/><ellipse cx="143.8" cy="147.6" rx="0.6" ry="1.3" fill-opacity="0.27"/><ellipse cx="73.4" cy="158.6" rx="0.9" ry="2.1" fill-opacity="0.33"/><ellipse cx="209.0" cy="121.7" rx="0.6" ry="2.4" fill-opacity="0.13"/><ellipse cx="364.0" cy="114.2" rx="0.8" ry="1.2" fill-opacity="0.37"/><ellipse cx="313.9" cy="106.0" rx="1.0" ry="1.9" fill-opacity="0.10"/><ellipse cx="66.7" cy="159.5" rx="1.0" ry="1.9" fill-opacity="0.24"/><ellipse cx="316.4" cy="115.3" rx="0.8" ry="2.3" fill-opacity="0.32"/><ellipse cx="356.7" cy="114.5" rx="0.9" ry="2.3" fill-opacity="0.28"/><ellipse cx="71.2" cy="159.1" rx="0.7" ry="1.9" fill-opacity="0.14"/><ellipse cx="181.3" cy="144.4" rx="0.9" ry="1.4" fill-opacity="0.24"/><ellipse cx="332.8" cy="105.5" rx="0.8" ry="2.3" fill-opacity="0.18"/><ellipse cx="186.0" cy="120.3" rx="0.8" ry="2.2" fill-opacity="0.27"/><ellipse cx="77.1" cy="154.1" rx="0.8" ry="1.8" fill-opacity="0.16"/><ellipse cx="204.2" cy="115.9" rx="0.7" ry="2.2" fill-opacity="0.12"/><ellipse cx="344.7" cy="110.5" rx="1.0" ry="2.3" fill-opacity="0.13"/><ellipse cx="86.6" cy="148.8" rx="0.6" ry="1.2" fill-opacity="0.13"/><ellipse cx="312.3" cy="100.0" rx="0.9" ry="1.5" fill-opacity="0.11"/><ellipse cx="203.8" cy="134.3" rx="0.7" ry="1.4" fill-opacity="0.26"/><ellipse cx="394.5" cy="106.8" rx="0.7" ry="2.3" fill-opacity="0.12"/><ellipse cx="96.2" cy="156.1" rx="0.9" ry="2.2" fill-opacity="0.37"/><ellipse cx="83.7" cy="157.8" rx="0.7" ry="2.3" fill-opacity="0.31"/><ellipse cx="378.6" cy="102.4" rx="1.0" ry="1.9" fill-opacity="0.09"/><ellipse cx="289.7" cy="98.2" rx="0.7" ry="2.3" fill-opacity="0.21"/><ellipse cx="189.9" cy="130.1" rx="0.8" ry="1.7" fill-opacity="0.24"/><ellipse cx="291.1" cy="100.2" rx="0.7" ry="1.7" fill-opacity="0.14"/><ellipse cx="237.9" cy="109.8" rx="0.7" ry="1.4" fill-opacity="0.10"/><ellipse cx="128.3" cy="150.2" rx="0.8" ry="1.4" fill-opacity="0.25"/><ellipse cx="225.1" cy="131.2" rx="0.8" ry="2.2" fill-opacity="0.28"/><ellipse cx="128.5" cy="136.7" rx="1.0" ry="1.7" fill-opacity="0.13"/><ellipse cx="156.4" cy="128.6" rx="0.8" ry="1.4" fill-opacity="0.20"/><ellipse cx="162.7" cy="123.2" rx="0.7" ry="1.8" fill-opacity="0.10"/><ellipse cx="295.5" cy="111.5" rx="0.9" ry="2.1" fill-opacity="0.26"/><ellipse cx="226.9" cy="116.3" rx="0.8" ry="1.4" fill-opacity="0.10"/><ellipse cx="271.3" cy="100.7" rx="0.6" ry="1.5" fill-opacity="0.18"/><ellipse cx="371.4" cy="102.4" rx="0.7" ry="1.8" fill-opacity="0.17"/><ellipse cx="279.5" cy="104.4" rx="0.7" ry="2.3" fill-opacity="0.18"/><ellipse cx="151.3" cy="138.5" rx="0.9" ry="2.2" fill-opacity="0.13"/><ellipse cx="236.1" cy="126.7" rx="0.7" ry="1.6" fill-opacity="0.25"/><ellipse cx="254.3" cy="129.3" rx="0.8" ry="1.4" fill-opacity="0.27"/><ellipse cx="401.5" cy="104.6" rx="0.6" ry="1.7" fill-opacity="0.28"/><ellipse cx="99.0" cy="155.4" rx="0.9" ry="2.2" fill-opacity="0.24"/><ellipse cx="98.2" cy="152.4" rx="0.9" ry="1.6" fill-opacity="0.26"/><ellipse cx="361.5" cy="101.7" rx="0.6" ry="1.4" fill-opacity="0.10"/><ellipse cx="320.3" cy="121.4" rx="0.9" ry="1.8" fill-opacity="0.20"/><ellipse cx="379.0" cy="107.1" rx="0.7" ry="2.3" fill-opacity="0.27"/><ellipse cx="380.8" cy="104.6" rx="1.0" ry="2.2" fill-opacity="0.08"/><ellipse cx="215.5" cy="101.0" rx="0.8" ry="2.1" fill-opacity="0.26"/><ellipse cx="296.7" cy="102.7" rx="0.6" ry="1.6" fill-opacity="0.16"/><ellipse cx="369.6" cy="112.0" rx="0.9" ry="2.0" fill-opacity="0.37"/><ellipse cx="145.9" cy="135.7" rx="0.8" ry="1.4" fill-opacity="0.17"/><ellipse cx="230.8" cy="135.9" rx="0.8" ry="1.8" fill-opacity="0.24"/><ellipse cx="388.2" cy="104.2" rx="0.8" ry="2.2" fill-opacity="0.13"/><ellipse cx="337.3" cy="101.9" rx="0.8" ry="2.4" fill-opacity="0.11"/><ellipse cx="168.9" cy="126.9" rx="0.6" ry="1.4" fill-opacity="0.18"/><ellipse cx="391.4" cy="105.5" rx="1.0" ry="1.3" fill-opacity="0.19"/><ellipse cx="119.9" cy="143.2" rx="1.0" ry="1.8" fill-opacity="0.28"/><ellipse cx="301.4" cy="112.8" rx="0.6" ry="2.3" fill-opacity="0.12"/><ellipse cx="282.8" cy="107.1" rx="1.0" ry="2.1" fill-opacity="0.10"/><ellipse cx="65.8" cy="159.8" rx="0.7" ry="1.5" fill-opacity="0.20"/><ellipse cx="137.4" cy="126.6" rx="0.7" ry="1.4" fill-opacity="0.08"/><ellipse cx="146.3" cy="148.0" rx="0.7" ry="1.6" fill-opacity="0.34"/><ellipse cx="345.4" cy="117.6" rx="0.8" ry="2.3" fill-opacity="0.28"/><ellipse cx="302.1" cy="126.2" rx="1.0" ry="1.8" fill-opacity="0.30"/><ellipse cx="322.5" cy="120.1" rx="0.9" ry="1.3" fill-opacity="0.12"/><ellipse cx="171.6" cy="109.1" rx="0.7" ry="2.0" fill-opacity="0.08"/><ellipse cx="177.7" cy="144.8" rx="0.7" ry="1.9" fill-opacity="0.27"/><ellipse cx="357.1" cy="114.5" rx="0.6" ry="1.7" fill-opacity="0.26"/><ellipse cx="318.2" cy="106.8" rx="0.8" ry="1.2" fill-opacity="0.28"/><ellipse cx="339.6" cy="110.0" rx="0.9" ry="2.4" fill-opacity="0.25"/><ellipse cx="115.3" cy="152.5" rx="0.7" ry="1.5" fill-opacity="0.36"/><ellipse cx="366.8" cy="110.0" rx="0.9" ry="1.7" fill-opacity="0.28"/><ellipse cx="279.2" cy="87.5" rx="0.8" ry="1.4" fill-opacity="0.14"/><ellipse cx="86.6" cy="152.3" rx="0.9" ry="1.9" fill-opacity="0.19"/><ellipse cx="352.0" cy="110.1" rx="0.8" ry="2.0" fill-opacity="0.31"/><ellipse cx="139.3" cy="124.3" rx="0.6" ry="1.5" fill-opacity="0.09"/><ellipse cx="158.6" cy="133.4" rx="0.8" ry="1.9" fill-opacity="0.21"/><ellipse cx="234.5" cy="123.9" rx="0.7" ry="2.4" fill-opacity="0.22"/><ellipse cx="300.0" cy="122.7" rx="0.7" ry="1.2" fill-opacity="0.11"/><ellipse cx="131.7" cy="140.9" rx="0.8" ry="1.7" fill-opacity="0.26"/><ellipse cx="346.5" cy="116.9" rx="1.0" ry="1.3" fill-opacity="0.38"/><ellipse cx="271.6" cy="114.3" rx="0.7" ry="2.1" fill-opacity="0.12"/><ellipse cx="267.4" cy="122.3" rx="0.9" ry="2.2" fill-opacity="0.13"/><ellipse cx="97.4" cy="155.8" rx="1.0" ry="1.3" fill-opacity="0.25"/><ellipse cx="69.0" cy="156.4" rx="0.9" ry="1.5" fill-opacity="0.24"/><ellipse cx="154.1" cy="132.5" rx="1.0" ry="1.5" fill-opacity="0.11"/><ellipse cx="200.8" cy="141.3" rx="0.6" ry="1.4" fill-opacity="0.26"/><ellipse cx="113.2" cy="137.6" rx="0.9" ry="2.2" fill-opacity="0.16"/><ellipse cx="65.1" cy="160.3" rx="0.6" ry="2.3" fill-opacity="0.29"/><ellipse cx="358.2" cy="102.3" rx="0.7" ry="1.3" fill-opacity="0.19"/><ellipse cx="211.6" cy="136.3" rx="0.9" ry="2.3" fill-opacity="0.27"/><ellipse cx="380.5" cy="109.0" rx="0.9" ry="2.2" fill-opacity="0.34"/><ellipse cx="330.8" cy="113.4" rx="1.0" ry="1.9" fill-opacity="0.13"/><ellipse cx="380.1" cy="108.1" rx="0.9" ry="1.4" fill-opacity="0.33"/><ellipse cx="313.0" cy="98.7" rx="0.7" ry="2.4" fill-opacity="0.08"/><ellipse cx="335.5" cy="103.9" rx="0.8" ry="1.3" fill-opacity="0.10"/><ellipse cx="167.6" cy="128.9" rx="0.7" ry="1.5" fill-opacity="0.31"/><ellipse cx="122.8" cy="139.1" rx="1.0" ry="2.3" fill-opacity="0.15"/><ellipse cx="336.2" cy="117.1" rx="0.9" ry="1.4" fill-opacity="0.31"/><ellipse cx="323.9" cy="108.1" rx="0.9" ry="2.1" fill-opacity="0.12"/><ellipse cx="111.8" cy="151.5" rx="0.8" ry="1.7" fill-opacity="0.31"/><ellipse cx="112.1" cy="151.2" rx="0.6" ry="2.3" fill-opacity="0.26"/><ellipse cx="346.6" cy="103.9" rx="0.7" ry="1.4" fill-opacity="0.18"/><ellipse cx="343.7" cy="114.1" rx="0.7" ry="2.4" fill-opacity="0.29"/><ellipse cx="156.8" cy="139.4" rx="0.9" ry="1.8" fill-opacity="0.24"/><ellipse cx="296.1" cy="126.4" rx="0.7" ry="1.7" fill-opacity="0.36"/><ellipse cx="199.9" cy="120.6" rx="1.0" ry="1.8" fill-opacity="0.29"/><ellipse cx="127.6" cy="129.0" rx="0.7" ry="1.5" fill-opacity="0.17"/><ellipse cx="171.7" cy="140.8" rx="0.7" ry="2.1" fill-opacity="0.16"/><ellipse cx="100.8" cy="146.6" rx="1.0" ry="2.3" fill-opacity="0.18"/><ellipse cx="260.9" cy="115.7" rx="0.7" ry="2.2" fill-opacity="0.31"/><ellipse cx="364.3" cy="102.4" rx="0.7" ry="1.2" fill-opacity="0.17"/><ellipse cx="136.4" cy="128.1" rx="0.6" ry="2.2" fill-opacity="0.18"/><ellipse cx="73.5" cy="157.9" rx="0.7" ry="2.1" fill-opacity="0.12"/><ellipse cx="401.5" cy="105.5" rx="0.7" ry="1.4" fill-opacity="0.15"/><ellipse cx="157.7" cy="133.7" rx="0.8" ry="1.6" fill-opacity="0.22"/><ellipse cx="288.8" cy="98.0" rx="0.8" ry="2.0" fill-opacity="0.21"/><ellipse cx="325.1" cy="101.5" rx="0.7" ry="1.3" fill-opacity="0.18"/><ellipse cx="387.3" cy="105.6" rx="1.0" ry="2.3" fill-opacity="0.12"/><ellipse cx="158.4" cy="130.8" rx="0.7" ry="1.3" fill-opacity="0.16"/><ellipse cx="226.9" cy="121.5" rx="0.7" ry="1.6" fill-opacity="0.15"/><ellipse cx="178.3" cy="136.6" rx="0.9" ry="2.0" fill-opacity="0.19"/><ellipse cx="403.9" cy="104.5" rx="0.6" ry="1.2" fill-opacity="0.23"/><ellipse cx="375.1" cy="104.9" rx="0.8" ry="1.5" fill-opacity="0.20"/><ellipse cx="60.4" cy="160.9" rx="0.8" ry="2.4" fill-opacity="0.39"/><ellipse cx="220.0" cy="86.6" rx="0.7" ry="2.3" fill-opacity="0.19"/><ellipse cx="140.8" cy="148.0" rx="0.9" ry="1.3" fill-opacity="0.21"/><ellipse cx="128.5" cy="139.5" rx="0.9" ry="1.6" fill-opacity="0.16"/><ellipse cx="309.2" cy="116.9" rx="0.9" ry="1.3" fill-opacity="0.23"/><ellipse cx="127.8" cy="148.3" rx="0.6" ry="1.8" fill-opacity="0.21"/><ellipse cx="344.4" cy="118.2" rx="0.9" ry="1.5" fill-opacity="0.19"/><ellipse cx="192.4" cy="104.4" rx="0.6" ry="1.2" fill-opacity="0.10"/><ellipse cx="383.8" cy="108.8" rx="1.0" ry="1.7" fill-opacity="0.34"/><ellipse cx="204.0" cy="117.0" rx="0.7" ry="2.0" fill-opacity="0.25"/><ellipse cx="371.5" cy="111.0" rx="0.6" ry="2.2" fill-opacity="0.26"/><ellipse cx="229.9" cy="132.3" rx="1.0" ry="1.9" fill-opacity="0.38"/><ellipse cx="231.6" cy="131.4" rx="0.6" ry="1.4" fill-opacity="0.29"/><ellipse cx="328.5" cy="112.1" rx="0.8" ry="2.2" fill-opacity="0.23"/><ellipse cx="290.7" cy="101.9" rx="0.6" ry="1.6" fill-opacity="0.17"/><ellipse cx="253.5" cy="119.0" rx="0.8" ry="2.2" fill-opacity="0.18"/><ellipse cx="140.9" cy="125.4" rx="0.9" ry="1.4" fill-opacity="0.20"/><ellipse cx="85.9" cy="153.5" rx="0.8" ry="2.3" fill-opacity="0.30"/><ellipse cx="193.2" cy="139.0" rx="0.9" ry="2.1" fill-opacity="0.22"/><ellipse cx="116.5" cy="153.0" rx="1.0" ry="1.4" fill-opacity="0.22"/><ellipse cx="153.7" cy="131.0" rx="0.8" ry="1.9" fill-opacity="0.28"/><ellipse cx="295.7" cy="97.1" rx="0.8" ry="1.3" fill-opacity="0.07"/><ellipse cx="307.3" cy="122.7" rx="0.8" ry="1.6" fill-opacity="0.35"/><ellipse cx="149.1" cy="122.2" rx="1.0" ry="1.3" fill-opacity="0.14"/><ellipse cx="381.6" cy="105.6" rx="0.7" ry="2.0" fill-opacity="0.10"/><ellipse cx="324.8" cy="108.3" rx="0.9" ry="1.9" fill-opacity="0.16"/><ellipse cx="254.3" cy="102.6" rx="0.8" ry="2.4" fill-opacity="0.26"/><ellipse cx="100.4" cy="154.2" rx="0.9" ry="1.2" fill-opacity="0.14"/><ellipse cx="326.2" cy="115.9" rx="0.7" ry="1.5" fill-opacity="0.33"/><ellipse cx="81.8" cy="157.9" rx="0.6" ry="2.2" fill-opacity="0.17"/><ellipse cx="195.2" cy="89.4" rx="0.7" ry="1.8" fill-opacity="0.17"/><ellipse cx="68.0" cy="159.6" rx="1.0" ry="2.2" fill-opacity="0.36"/><ellipse cx="349.6" cy="117.1" rx="0.7" ry="2.2" fill-opacity="0.18"/><ellipse cx="180.7" cy="137.9" rx="0.8" ry="1.7" fill-opacity="0.12"/><ellipse cx="196.6" cy="98.4" rx="0.9" ry="1.4" fill-opacity="0.13"/><ellipse cx="246.6" cy="114.6" rx="0.7" ry="1.4" fill-opacity="0.25"/><ellipse cx="213.2" cy="59.6" rx="1.0" ry="1.7" fill-opacity="0.33"/><ellipse cx="291.0" cy="17.0" rx="0.9" ry="2.5" fill-opacity="0.32"/><ellipse cx="166.8" cy="81.2" rx="0.7" ry="2.5" fill-opacity="0.32"/><ellipse cx="248.1" cy="40.6" rx="0.6" ry="2.3" fill-opacity="0.35"/><ellipse cx="315.1" cy="11.2" rx="0.6" ry="2.0" fill-opacity="0.21"/><ellipse cx="231.1" cy="59.6" rx="0.9" ry="2.5" fill-opacity="0.14"/><ellipse cx="264.8" cy="48.3" rx="0.6" ry="2.1" fill-opacity="0.17"/><ellipse cx="292.7" cy="28.3" rx="0.7" ry="1.9" fill-opacity="0.28"/><ellipse cx="227.5" cy="53.0" rx="0.7" ry="2.3" fill-opacity="0.31"/><ellipse cx="199.0" cy="64.5" rx="0.9" ry="2.1" fill-opacity="0.29"/><ellipse cx="160.9" cy="82.8" rx="0.7" ry="2.1" fill-opacity="0.27"/><ellipse cx="200.6" cy="77.3" rx="1.0" ry="1.5" fill-opacity="0.12"/><ellipse cx="173.8" cy="81.8" rx="1.0" ry="2.4" fill-opacity="0.25"/><ellipse cx="243.5" cy="48.3" rx="0.9" ry="2.0" fill-opacity="0.23"/><ellipse cx="196.9" cy="65.6" rx="1.0" ry="2.2" fill-opacity="0.30"/><ellipse cx="303.2" cy="4.3" rx="1.0" ry="2.1" fill-opacity="0.27"/><ellipse cx="244.6" cy="56.1" rx="1.0" ry="1.8" fill-opacity="0.22"/><ellipse cx="314.4" cy="1.8" rx="0.7" ry="2.1" fill-opacity="0.16"/><ellipse cx="303.4" cy="17.8" rx="0.9" ry="1.4" fill-opacity="0.15"/><ellipse cx="217.6" cy="62.7" rx="0.8" ry="1.6" fill-opacity="0.34"/><ellipse cx="208.9" cy="59.3" rx="0.6" ry="1.9" fill-opacity="0.20"/><ellipse cx="179.0" cy="90.7" rx="0.6" ry="1.8" fill-opacity="0.26"/><ellipse cx="184.0" cy="88.6" rx="1.0" ry="2.1" fill-opacity="0.23"/><ellipse cx="206.2" cy="65.1" rx="0.7" ry="2.5" fill-opacity="0.15"/><ellipse cx="240.0" cy="52.4" rx="0.6" ry="2.4" fill-opacity="0.27"/><ellipse cx="173.7" cy="72.1" rx="0.9" ry="2.1" fill-opacity="0.15"/><ellipse cx="181.6" cy="87.4" rx="0.9" ry="1.8" fill-opacity="0.15"/><ellipse cx="174.1" cy="69.4" rx="0.6" ry="1.7" fill-opacity="0.31"/><ellipse cx="294.7" cy="10.7" rx="0.6" ry="1.9" fill-opacity="0.27"/><ellipse cx="216.9" cy="51.2" rx="0.7" ry="2.3" fill-opacity="0.29"/><ellipse cx="182.9" cy="76.4" rx="0.7" ry="2.4" fill-opacity="0.14"/><ellipse cx="166.3" cy="89.5" rx="0.7" ry="1.8" fill-opacity="0.19"/><ellipse cx="243.4" cy="40.7" rx="0.8" ry="2.5" fill-opacity="0.33"/><ellipse cx="189.2" cy="78.4" rx="0.8" ry="1.6" fill-opacity="0.29"/><ellipse cx="179.1" cy="96.8" rx="0.9" ry="1.8" fill-opacity="0.33"/><ellipse cx="219.0" cy="50.9" rx="0.6" ry="1.6" fill-opacity="0.13"/><ellipse cx="212.7" cy="75.6" rx="0.7" ry="1.6" fill-opacity="0.19"/><ellipse cx="186.0" cy="82.9" rx="0.8" ry="1.7" fill-opacity="0.21"/><ellipse cx="231.5" cy="35.8" rx="0.7" ry="1.9" fill-opacity="0.31"/><ellipse cx="283.2" cy="9.8" rx="1.0" ry="1.7" fill-opacity="0.26"/><ellipse cx="211.0" cy="62.3" rx="1.0" ry="1.8" fill-opacity="0.19"/><ellipse cx="227.2" cy="66.0" rx="0.9" ry="2.2" fill-opacity="0.10"/><ellipse cx="301.6" cy="15.0" rx="0.7" ry="1.6" fill-opacity="0.33"/><ellipse cx="237.7" cy="63.9" rx="0.6" ry="1.6" fill-opacity="0.20"/><ellipse cx="170.2" cy="93.3" rx="1.0" ry="2.2" fill-opacity="0.30"/><ellipse cx="206.8" cy="72.6" rx="1.0" ry="2.1" fill-opacity="0.30"/><ellipse cx="198.8" cy="66.6" rx="0.9" ry="1.4" fill-opacity="0.23"/><ellipse cx="258.8" cy="48.1" rx="0.7" ry="2.0" fill-opacity="0.21"/><ellipse cx="285.7" cy="34.5" rx="0.9" ry="2.1" fill-opacity="0.29"/><ellipse cx="256.0" cy="40.6" rx="0.8" ry="2.3" fill-opacity="0.32"/><ellipse cx="204.9" cy="69.4" rx="0.7" ry="1.5" fill-opacity="0.15"/><ellipse cx="290.6" cy="28.4" rx="0.8" ry="1.7" fill-opacity="0.12"/><ellipse cx="260.3" cy="33.4" rx="0.8" ry="2.4" fill-opacity="0.14"/><ellipse cx="164.6" cy="81.1" rx="1.0" ry="1.6" fill-opacity="0.31"/><ellipse cx="273.4" cy="26.5" rx="0.7" ry="2.4" fill-opacity="0.27"/><ellipse cx="202.7" cy="61.7" rx="0.8" ry="1.6" fill-opacity="0.15"/><ellipse cx="221.7" cy="66.3" rx="0.8" ry="2.5" fill-opacity="0.23"/><ellipse cx="237.5" cy="58.4" rx="0.8" ry="1.8" fill-opacity="0.24"/><ellipse cx="228.9" cy="42.5" rx="0.7" ry="2.2" fill-opacity="0.11"/><ellipse cx="305.7" cy="6.5" rx="0.8" ry="1.6" fill-opacity="0.25"/><ellipse cx="206.6" cy="70.1" rx="0.7" ry="2.2" fill-opacity="0.29"/><ellipse cx="203.2" cy="79.8" rx="0.9" ry="2.1" fill-opacity="0.29"/><ellipse cx="270.4" cy="39.5" rx="0.8" ry="2.5" fill-opacity="0.32"/><ellipse cx="212.0" cy="63.6" rx="0.7" ry="1.8" fill-opacity="0.33"/><ellipse cx="260.2" cy="29.8" rx="0.7" ry="1.6" fill-opacity="0.16"/><ellipse cx="271.4" cy="33.0" rx="0.9" ry="1.9" fill-opacity="0.12"/><ellipse cx="314.8" cy="17.5" rx="0.8" ry="1.9" fill-opacity="0.11"/><ellipse cx="272.6" cy="32.1" rx="0.9" ry="2.0" fill-opacity="0.15"/><ellipse cx="215.7" cy="54.8" rx="1.0" ry="1.7" fill-opacity="0.14"/><ellipse cx="320.6" cy="2.7" rx="0.9" ry="1.6" fill-opacity="0.26"/><ellipse cx="175.5" cy="77.0" rx="0.8" ry="1.7" fill-opacity="0.26"/><ellipse cx="287.7" cy="23.5" rx="0.9" ry="2.2" fill-opacity="0.17"/><ellipse cx="310.8" cy="1.2" rx="0.6" ry="2.1" fill-opacity="0.20"/><ellipse cx="279.4" cy="12.4" rx="0.7" ry="2.1" fill-opacity="0.18"/><ellipse cx="185.3" cy="75.4" rx="0.7" ry="2.0" fill-opacity="0.13"/><ellipse cx="198.9" cy="58.2" rx="0.7" ry="2.2" fill-opacity="0.27"/><ellipse cx="233.4" cy="55.2" rx="0.9" ry="2.5" fill-opacity="0.33"/><ellipse cx="313.5" cy="0.1" rx="1.0" ry="2.3" fill-opacity="0.17"/><ellipse cx="220.8" cy="62.8" rx="1.0" ry="2.1" fill-opacity="0.13"/><ellipse cx="307.9" cy="12.2" rx="0.8" ry="1.9" fill-opacity="0.31"/><ellipse cx="192.4" cy="67.0" rx="0.8" ry="1.7" fill-opacity="0.12"/><ellipse cx="272.9" cy="32.4" rx="0.6" ry="2.1" fill-opacity="0.11"/><ellipse cx="319.0" cy="9.0" rx="0.8" ry="2.0" fill-opacity="0.24"/><ellipse cx="190.0" cy="71.1" rx="1.0" ry="1.4" fill-opacity="0.26"/><ellipse cx="176.6" cy="94.9" rx="1.0" ry="1.6" fill-opacity="0.29"/><ellipse cx="260.2" cy="29.8" rx="0.8" ry="2.2" fill-opacity="0.13"/><ellipse cx="191.1" cy="78.1" rx="1.0" ry="2.4" fill-opacity="0.29"/><ellipse cx="248.7" cy="42.0" rx="0.8" ry="1.8" fill-opacity="0.28"/><ellipse cx="253.0" cy="36.3" rx="0.7" ry="1.5" fill-opacity="0.33"/><ellipse cx="219.5" cy="58.6" rx="0.6" ry="2.1" fill-opacity="0.22"/><ellipse cx="272.4" cy="42.0" rx="0.7" ry="1.8" fill-opacity="0.31"/><ellipse cx="243.6" cy="47.8" rx="0.7" ry="1.5" fill-opacity="0.32"/><ellipse cx="195.9" cy="68.4" rx="0.8" ry="1.9" fill-opacity="0.31"/><ellipse cx="221.1" cy="61.3" rx="1.0" ry="1.7" fill-opacity="0.13"/><ellipse cx="305.2" cy="0.7" rx="0.8" ry="2.2" fill-opacity="0.30"/><ellipse cx="311.3" cy="12.2" rx="1.0" ry="2.5" fill-opacity="0.30"/><ellipse cx="307.4" cy="19.6" rx="0.8" ry="2.1" fill-opacity="0.27"/><ellipse cx="173.4" cy="84.9" rx="0.7" ry="2.5" fill-opacity="0.27"/><ellipse cx="227.1" cy="42.8" rx="0.7" ry="2.6" fill-opacity="0.21"/><ellipse cx="194.5" cy="86.7" rx="0.8" ry="2.4" fill-opacity="0.27"/><ellipse cx="185.0" cy="87.9" rx="1.0" ry="1.5" fill-opacity="0.26"/><ellipse cx="176.2" cy="90.2" rx="0.6" ry="1.7" fill-opacity="0.24"/><ellipse cx="189.2" cy="77.0" rx="0.9" ry="2.4" fill-opacity="0.17"/><ellipse cx="195.3" cy="63.9" rx="0.8" ry="1.5" fill-opacity="0.23"/><ellipse cx="276.4" cy="16.1" rx="1.0" ry="1.7" fill-opacity="0.28"/><ellipse cx="178.1" cy="91.5" rx="0.7" ry="2.4" fill-opacity="0.34"/><ellipse cx="189.2" cy="86.9" rx="0.9" ry="1.7" fill-opacity="0.19"/><ellipse cx="189.8" cy="73.1" rx="0.9" ry="2.1" fill-opacity="0.24"/><ellipse cx="296.1" cy="17.7" rx="0.9" ry="1.8" fill-opacity="0.21"/><ellipse cx="261.6" cy="36.5" rx="0.8" ry="2.6" fill-opacity="0.30"/><ellipse cx="273.8" cy="39.1" rx="0.7" ry="2.4" fill-opacity="0.18"/><ellipse cx="255.2" cy="36.2" rx="0.9" ry="2.3" fill-opacity="0.10"/><ellipse cx="295.5" cy="18.8" rx="0.8" ry="2.1" fill-opacity="0.11"/><ellipse cx="230.4" cy="48.3" rx="0.8" ry="1.5" fill-opacity="0.25"/><ellipse cx="262.0" cy="39.8" rx="0.6" ry="2.1" fill-opacity="0.35"/><ellipse cx="190.5" cy="83.7" rx="0.8" ry="2.2" fill-opacity="0.28"/><ellipse cx="275.5" cy="22.0" rx="0.8" ry="2.2" fill-opacity="0.11"/><ellipse cx="323.2" cy="3.3" rx="0.9" ry="1.6" fill-opacity="0.15"/><ellipse cx="273.5" cy="39.9" rx="1.0" ry="2.1" fill-opacity="0.15"/><ellipse cx="240.5" cy="59.5" rx="0.6" ry="1.7" fill-opacity="0.14"/><ellipse cx="241.0" cy="48.5" rx="0.9" ry="2.0" fill-opacity="0.29"/><ellipse cx="176.0" cy="87.4" rx="0.7" ry="2.5" fill-opacity="0.27"/><ellipse cx="281.2" cy="38.7" rx="0.9" ry="2.0" fill-opacity="0.20"/><ellipse cx="303.2" cy="11.7" rx="1.0" ry="2.0" fill-opacity="0.25"/><ellipse cx="314.5" cy="9.9" rx="0.6" ry="1.8" fill-opacity="0.31"/><ellipse cx="197.3" cy="54.8" rx="0.7" ry="2.3" fill-opacity="0.28"/><ellipse cx="273.4" cy="23.6" rx="0.9" ry="2.0" fill-opacity="0.34"/><ellipse cx="321.4" cy="8.2" rx="1.0" ry="2.0" fill-opacity="0.34"/><ellipse cx="234.5" cy="64.3" rx="0.8" ry="2.2" fill-opacity="0.31"/><ellipse cx="200.4" cy="73.9" rx="0.8" ry="1.6" fill-opacity="0.27"/><ellipse cx="187.5" cy="72.5" rx="0.9" ry="1.6" fill-opacity="0.33"/><ellipse cx="167.9" cy="84.8" rx="0.7" ry="2.2" fill-opacity="0.17"/><ellipse cx="164.4" cy="90.7" rx="0.8" ry="2.4" fill-opacity="0.26"/><ellipse cx="284.8" cy="6.1" rx="1.0" ry="1.9" fill-opacity="0.20"/><ellipse cx="219.3" cy="48.1" rx="1.0" ry="1.6" fill-opacity="0.27"/><ellipse cx="257.8" cy="35.3" rx="0.8" ry="1.6" fill-opacity="0.24"/><ellipse cx="267.0" cy="24.2" rx="0.8" ry="2.6" fill-opacity="0.32"/><ellipse cx="221.3" cy="74.5" rx="0.6" ry="2.5" fill-opacity="0.32"/><ellipse cx="285.6" cy="22.0" rx="0.9" ry="2.3" fill-opacity="0.28"/><ellipse cx="329.3" cy="4.1" rx="0.9" ry="1.9" fill-opacity="0.32"/><ellipse cx="271.5" cy="28.3" rx="0.8" ry="2.6" fill-opacity="0.28"/><ellipse cx="316.9" cy="21.8" rx="0.7" ry="1.4" fill-opacity="0.15"/><ellipse cx="193.2" cy="81.4" rx="1.0" ry="1.7" fill-opacity="0.33"/><ellipse cx="203.1" cy="77.5" rx="0.9" ry="2.1" fill-opacity="0.15"/><ellipse cx="206.5" cy="67.4" rx="0.9" ry="1.8" fill-opacity="0.25"/><ellipse cx="212.2" cy="77.4" rx="0.9" ry="2.3" fill-opacity="0.24"/><ellipse cx="257.7" cy="45.1" rx="0.8" ry="1.9" fill-opacity="0.30"/><ellipse cx="228.5" cy="61.1" rx="0.9" ry="1.8" fill-opacity="0.35"/><ellipse cx="212.1" cy="54.4" rx="1.0" ry="1.4" fill-opacity="0.31"/><ellipse cx="223.7" cy="41.3" rx="0.8" ry="2.5" fill-opacity="0.15"/><ellipse cx="238.4" cy="44.2" rx="0.7" ry="2.2" fill-opacity="0.11"/><ellipse cx="189.5" cy="78.5" rx="0.7" ry="2.1" fill-opacity="0.17"/><ellipse cx="187.1" cy="67.0" rx="0.8" ry="1.6" fill-opacity="0.30"/><ellipse cx="221.7" cy="57.3" rx="0.9" ry="2.1" fill-opacity="0.19"/><ellipse cx="271.4" cy="37.4" rx="0.8" ry="2.4" fill-opacity="0.23"/><ellipse cx="235.1" cy="42.8" rx="0.7" ry="2.3" fill-opacity="0.14"/><ellipse cx="199.0" cy="62.8" rx="0.9" ry="2.3" fill-opacity="0.21"/></g><g filter="url(#bs1)"><polygon points="240,177.2 320,175.2 421,169.8 421,172.6 320,176.6 240,177.8" fill="#2a48d8" fill-opacity="0.35"/><polyline points="300,175.6 360,173.4 421,170.4" fill="none" stroke="#3020c0" stroke-width="2.4" stroke-opacity="0.85"/><polyline points="350,173.8 400,171.6 421,170.4" fill="none" stroke="#d03080" stroke-width="1.4" stroke-opacity="0.9"/><polyline points="385,172.2 421,170.4" fill="none" stroke="#d8c840" stroke-width="1.1"/><polyline points="400,171.4 421,170.4" fill="none" stroke="#80f080" stroke-width="0.5"/></g><g filter="url(#bs1)"><ellipse cx="51.0" cy="162.0" rx="1.0" ry="1.3" fill="#3010a8"/><ellipse cx="57.3" cy="161.3" rx="1.0" ry="1.3" fill="#3010a8"/><ellipse cx="64.5" cy="160.2" rx="1.0" ry="1.3" fill="#3010a8"/><ellipse cx="71.0" cy="159.0" rx="1.0" ry="1.3" fill="#3010a8"/><ellipse cx="77.3" cy="158.6" rx="1.0" ry="1.3" fill="#3010a8"/><ellipse cx="82.6" cy="157.8" rx="1.0" ry="1.3" fill="#3010a8"/><ellipse cx="87.5" cy="156.9" rx="1.0" ry="1.3" fill="#3010a8"/><ellipse cx="93.0" cy="156.2" rx="1.0" ry="1.3" fill="#3010a8"/><ellipse cx="93.0" cy="156.2" rx="0.5" ry="0.7" fill="#c82070"/><ellipse cx="99.7" cy="154.9" rx="1.0" ry="1.3" fill="#3010a8"/><ellipse cx="99.7" cy="154.9" rx="0.5" ry="0.7" fill="#c82070"/><ellipse cx="106.9" cy="154.7" rx="1.0" ry="1.3" fill="#3010a8"/><ellipse cx="106.9" cy="154.7" rx="0.5" ry="0.7" fill="#c82070"/><ellipse cx="114.4" cy="153.2" rx="1.8" ry="1.3" fill="#3010a8"/><ellipse cx="114.4" cy="153.2" rx="0.9" ry="0.7" fill="#c82070"/><ellipse cx="121.6" cy="152.7" rx="1.6" ry="1.3" fill="#3010a8"/><ellipse cx="121.6" cy="152.7" rx="0.8" ry="0.7" fill="#c82070"/><ellipse cx="128.5" cy="151.5" rx="1.6" ry="1.3" fill="#3010a8"/><ellipse cx="128.5" cy="151.5" rx="0.8" ry="0.7" fill="#c82070"/><ellipse cx="134.8" cy="150.8" rx="1.7" ry="1.3" fill="#3010a8"/><ellipse cx="134.8" cy="150.8" rx="0.8" ry="0.7" fill="#c82070"/><ellipse cx="141.7" cy="149.7" rx="1.8" ry="1.3" fill="#3010a8"/><ellipse cx="147.7" cy="148.9" rx="1.6" ry="1.3" fill="#3010a8"/><ellipse cx="147.7" cy="148.9" rx="0.8" ry="0.7" fill="#c82070"/><ellipse cx="154.4" cy="147.4" rx="1.3" ry="1.3" fill="#3010a8"/><ellipse cx="154.4" cy="147.4" rx="0.7" ry="0.7" fill="#c82070"/><ellipse cx="159.7" cy="147.1" rx="1.5" ry="1.3" fill="#3010a8"/><ellipse cx="159.7" cy="147.1" rx="0.7" ry="0.7" fill="#c82070"/><rect x="159.2" y="144.6" width="1" height="3" fill="#d0d040"/><ellipse cx="166.9" cy="146.2" rx="1.7" ry="1.3" fill="#3010a8"/><ellipse cx="166.9" cy="146.2" rx="0.9" ry="0.7" fill="#c82070"/><ellipse cx="171.4" cy="145.2" rx="1.5" ry="1.3" fill="#3010a8"/><ellipse cx="171.4" cy="145.2" rx="0.8" ry="0.7" fill="#c82070"/><ellipse cx="177.3" cy="144.3" rx="1.8" ry="1.3" fill="#3010a8"/><ellipse cx="177.3" cy="144.3" rx="0.9" ry="0.7" fill="#c82070"/><ellipse cx="183.9" cy="143.4" rx="1.5" ry="1.3" fill="#3010a8"/><ellipse cx="183.9" cy="143.4" rx="0.8" ry="0.7" fill="#c82070"/><ellipse cx="191.3" cy="142.7" rx="1.6" ry="1.3" fill="#3010a8"/><ellipse cx="191.3" cy="142.7" rx="0.8" ry="0.7" fill="#c82070"/><ellipse cx="198.6" cy="141.6" rx="1.2" ry="1.3" fill="#3010a8"/><ellipse cx="198.6" cy="141.6" rx="0.6" ry="0.7" fill="#c82070"/><rect x="198.1" y="139.1" width="1" height="3" fill="#d0d040"/><ellipse cx="203.1" cy="141.4" rx="1.7" ry="1.3" fill="#3010a8"/><ellipse cx="203.1" cy="141.4" rx="0.8" ry="0.7" fill="#c82070"/><ellipse cx="209.6" cy="140.3" rx="1.2" ry="1.3" fill="#3010a8"/><ellipse cx="209.6" cy="140.3" rx="0.6" ry="0.7" fill="#c82070"/><ellipse cx="215.6" cy="139.5" rx="1.6" ry="1.3" fill="#3010a8"/><ellipse cx="215.6" cy="139.5" rx="0.8" ry="0.7" fill="#c82070"/><ellipse cx="220.6" cy="138.7" rx="1.5" ry="1.3" fill="#3010a8"/><ellipse cx="228.1" cy="137.7" rx="1.4" ry="1.3" fill="#3010a8"/><ellipse cx="233.6" cy="137.4" rx="1.6" ry="1.3" fill="#3010a8"/><ellipse cx="240.8" cy="136.5" rx="1.7" ry="1.3" fill="#3010a8"/><ellipse cx="240.8" cy="136.5" rx="0.9" ry="0.7" fill="#c82070"/><ellipse cx="247.4" cy="135.6" rx="1.7" ry="1.3" fill="#3010a8"/><ellipse cx="247.4" cy="135.6" rx="0.9" ry="0.7" fill="#c82070"/><ellipse cx="253.5" cy="134.2" rx="1.4" ry="1.3" fill="#3010a8"/><ellipse cx="253.5" cy="134.2" rx="0.7" ry="0.7" fill="#c82070"/><rect x="253.0" y="131.7" width="1" height="3" fill="#d0d040"/><ellipse cx="258.1" cy="133.9" rx="1.5" ry="1.3" fill="#3010a8"/><ellipse cx="258.1" cy="133.9" rx="0.7" ry="0.7" fill="#c82070"/><ellipse cx="263.2" cy="133.3" rx="1.2" ry="1.3" fill="#3010a8"/><ellipse cx="263.2" cy="133.3" rx="0.6" ry="0.7" fill="#c82070"/><ellipse cx="270.3" cy="131.9" rx="1.8" ry="1.3" fill="#3010a8"/><ellipse cx="270.3" cy="131.9" rx="0.9" ry="0.7" fill="#c82070"/><ellipse cx="275.5" cy="130.9" rx="1.2" ry="1.3" fill="#3010a8"/><ellipse cx="275.5" cy="130.9" rx="0.6" ry="0.7" fill="#c82070"/><rect x="275.0" y="128.4" width="1" height="3" fill="#d0d040"/><ellipse cx="282.3" cy="129.8" rx="1.9" ry="1.3" fill="#3010a8"/><ellipse cx="282.3" cy="129.8" rx="0.9" ry="0.7" fill="#c82070"/><ellipse cx="294.2" cy="127.5" rx="1.6" ry="1.3" fill="#3010a8"/><ellipse cx="294.2" cy="127.5" rx="0.8" ry="0.7" fill="#c82070"/><ellipse cx="304.1" cy="125.9" rx="1.7" ry="1.3" fill="#3010a8"/><ellipse cx="304.1" cy="125.9" rx="0.8" ry="0.7" fill="#c82070"/><ellipse cx="314.8" cy="123.3" rx="1.4" ry="1.3" fill="#3010a8"/><ellipse cx="325.4" cy="121.3" rx="1.4" ry="1.3" fill="#3010a8"/><ellipse cx="325.4" cy="121.3" rx="0.7" ry="0.7" fill="#c82070"/><ellipse cx="339.0" cy="119.1" rx="1.5" ry="1.3" fill="#3010a8"/><ellipse cx="339.0" cy="119.1" rx="0.7" ry="0.7" fill="#c82070"/><ellipse cx="347.3" cy="117.5" rx="1.4" ry="1.3" fill="#3010a8"/><ellipse cx="347.3" cy="117.5" rx="0.7" ry="0.7" fill="#c82070"/><ellipse cx="355.5" cy="115.6" rx="1.3" ry="1.3" fill="#3010a8"/><ellipse cx="355.5" cy="115.6" rx="0.6" ry="0.7" fill="#c82070"/><ellipse cx="369.1" cy="113.0" rx="1.4" ry="1.3" fill="#3010a8"/><ellipse cx="369.1" cy="113.0" rx="0.7" ry="0.7" fill="#c82070"/><ellipse cx="173.4" cy="139.4" rx="1.2" ry="1.7" fill="#3320b8"/><ellipse cx="173.4" cy="139.4" rx="0.6" ry="0.8" fill="#d83080"/><ellipse cx="134.1" cy="137.1" rx="0.9" ry="1.6" fill="#3320b8"/><ellipse cx="134.1" cy="137.1" rx="0.5" ry="0.8" fill="#d83080"/><ellipse cx="258.0" cy="129.1" rx="1.0" ry="1.6" fill="#3320b8"/><ellipse cx="83.8" cy="144.3" rx="1.1" ry="1.7" fill="#3320b8"/><ellipse cx="83.8" cy="144.3" rx="0.6" ry="0.9" fill="#e8d040"/><ellipse cx="276.2" cy="27.6" rx="0.8" ry="2.2" fill="#3320b8"/><ellipse cx="123.2" cy="144.5" rx="1.2" ry="1.7" fill="#3320b8"/><ellipse cx="212.1" cy="136.8" rx="0.9" ry="1.5" fill="#3a18c0"/><ellipse cx="212.1" cy="136.8" rx="0.5" ry="0.8" fill="#d83080"/><ellipse cx="201.2" cy="90.7" rx="1.0" ry="1.5" fill="#2a28d0"/><ellipse cx="203.4" cy="88.9" rx="0.9" ry="1.3" fill="#2a28d0"/><ellipse cx="233.3" cy="125.9" rx="1.2" ry="1.4" fill="#2a28d0"/><ellipse cx="175.7" cy="141.8" rx="1.1" ry="1.3" fill="#3320b8"/><ellipse cx="175.7" cy="141.8" rx="0.6" ry="0.7" fill="#d83080"/><ellipse cx="177.9" cy="140.0" rx="1.0" ry="1.2" fill="#3320b8"/><ellipse cx="177.9" cy="140.0" rx="0.5" ry="0.6" fill="#d83080"/><ellipse cx="263.3" cy="21.6" rx="0.7" ry="1.7" fill="#2a28d0"/><ellipse cx="190.4" cy="96.1" rx="1.0" ry="1.5" fill="#3a18c0"/><ellipse cx="190.4" cy="96.1" rx="0.5" ry="0.7" fill="#d83080"/><ellipse cx="192.6" cy="94.3" rx="0.9" ry="1.3" fill="#3a18c0"/><ellipse cx="192.6" cy="94.3" rx="0.5" ry="0.7" fill="#d83080"/><ellipse cx="160.4" cy="107.0" rx="1.2" ry="1.3" fill="#3a18c0"/><ellipse cx="162.6" cy="105.2" rx="1.1" ry="1.2" fill="#3a18c0"/><ellipse cx="231.7" cy="63.3" rx="0.9" ry="1.8" fill="#2a28d0"/><ellipse cx="236.5" cy="133.8" rx="1.2" ry="1.5" fill="#3320b8"/><ellipse cx="238.7" cy="132.0" rx="1.1" ry="1.3" fill="#3320b8"/><ellipse cx="305.6" cy="122.5" rx="1.0" ry="1.5" fill="#3320b8"/><ellipse cx="155.7" cy="87.3" rx="1.2" ry="1.7" fill="#3320b8"/><ellipse cx="155.7" cy="87.3" rx="0.6" ry="0.9" fill="#d83080"/><ellipse cx="287.5" cy="125.5" rx="1.1" ry="1.7" fill="#3a18c0"/><ellipse cx="153.9" cy="94.7" rx="1.1" ry="1.5" fill="#3320b8"/><ellipse cx="57.7" cy="153.8" rx="1.0" ry="1.7" fill="#2a28d0"/><ellipse cx="57.7" cy="153.8" rx="0.5" ry="0.9" fill="#d83080"/><ellipse cx="59.9" cy="152.0" rx="0.9" ry="1.6" fill="#2a28d0"/><ellipse cx="59.9" cy="152.0" rx="0.5" ry="0.8" fill="#d83080"/><ellipse cx="128.5" cy="122.9" rx="0.9" ry="1.7" fill="#3320b8"/><ellipse cx="128.5" cy="122.9" rx="0.5" ry="0.9" fill="#e8d040"/><ellipse cx="130.7" cy="121.1" rx="0.8" ry="1.5" fill="#3320b8"/><ellipse cx="130.7" cy="121.1" rx="0.5" ry="0.8" fill="#e8d040"/><ellipse cx="144.1" cy="147.5" rx="0.9" ry="1.5" fill="#3320b8"/><ellipse cx="89.0" cy="154.9" rx="1.0" ry="1.5" fill="#2a28d0"/><ellipse cx="91.2" cy="153.1" rx="0.9" ry="1.4" fill="#2a28d0"/><ellipse cx="196.4" cy="84.8" rx="1.1" ry="1.4" fill="#3320b8"/><ellipse cx="198.6" cy="83.0" rx="1.0" ry="1.2" fill="#3320b8"/><ellipse cx="175.9" cy="101.2" rx="1.2" ry="1.4" fill="#3a18c0"/><ellipse cx="175.9" cy="101.2" rx="0.6" ry="0.7" fill="#d83080"/><ellipse cx="178.1" cy="99.4" rx="1.1" ry="1.2" fill="#3a18c0"/><ellipse cx="238.0" cy="112.3" rx="0.9" ry="1.4" fill="#2a28d0"/><ellipse cx="58.6" cy="158.4" rx="1.2" ry="1.6" fill="#2a28d0"/><ellipse cx="58.6" cy="158.4" rx="0.6" ry="0.8" fill="#d83080"/><ellipse cx="133.5" cy="120.1" rx="0.9" ry="1.6" fill="#3a18c0"/><ellipse cx="133.5" cy="120.1" rx="0.5" ry="0.8" fill="#d83080"/><ellipse cx="198.4" cy="66.4" rx="1.1" ry="1.5" fill="#3320b8"/><ellipse cx="113.1" cy="139.4" rx="1.1" ry="1.7" fill="#2a28d0"/><ellipse cx="113.1" cy="139.4" rx="0.6" ry="0.9" fill="#d83080"/><ellipse cx="115.3" cy="137.6" rx="1.0" ry="1.6" fill="#2a28d0"/><ellipse cx="175.5" cy="126.1" rx="1.1" ry="1.5" fill="#3a18c0"/><ellipse cx="175.5" cy="126.1" rx="0.6" ry="0.7" fill="#d83080"/><ellipse cx="98.2" cy="152.6" rx="1.1" ry="1.5" fill="#3a18c0"/><ellipse cx="98.2" cy="152.6" rx="0.6" ry="0.7" fill="#d83080"/><ellipse cx="100.4" cy="150.8" rx="1.0" ry="1.3" fill="#3a18c0"/><ellipse cx="100.4" cy="150.8" rx="0.5" ry="0.7" fill="#d83080"/><ellipse cx="112.0" cy="139.3" rx="1.0" ry="1.5" fill="#3a18c0"/><ellipse cx="112.0" cy="139.3" rx="0.5" ry="0.8" fill="#d83080"/><ellipse cx="78.7" cy="140.0" rx="1.0" ry="1.4" fill="#2a28d0"/><ellipse cx="80.9" cy="138.2" rx="0.9" ry="1.3" fill="#2a28d0"/><ellipse cx="203.0" cy="122.0" rx="1.0" ry="1.7" fill="#3a18c0"/><ellipse cx="203.0" cy="122.0" rx="0.5" ry="0.9" fill="#d83080"/><ellipse cx="205.2" cy="120.2" rx="0.9" ry="1.5" fill="#3a18c0"/><ellipse cx="151.8" cy="124.4" rx="1.0" ry="1.4" fill="#3a18c0"/><ellipse cx="151.8" cy="124.4" rx="0.5" ry="0.7" fill="#d83080"/><ellipse cx="234.3" cy="119.9" rx="1.2" ry="1.3" fill="#3320b8"/><ellipse cx="236.5" cy="118.1" rx="1.1" ry="1.2" fill="#3320b8"/><ellipse cx="205.3" cy="128.0" rx="1.0" ry="1.6" fill="#3320b8"/><ellipse cx="205.3" cy="128.0" rx="0.5" ry="0.8" fill="#d83080"/><ellipse cx="100.2" cy="151.2" rx="1.1" ry="1.4" fill="#3320b8"/><ellipse cx="100.2" cy="151.2" rx="0.5" ry="0.7" fill="#d83080"/><ellipse cx="78.8" cy="141.8" rx="1.0" ry="1.7" fill="#2a28d0"/><ellipse cx="78.8" cy="141.8" rx="0.5" ry="0.9" fill="#d83080"/><ellipse cx="173.1" cy="90.6" rx="1.0" ry="1.6" fill="#3320b8"/><ellipse cx="135.0" cy="100.3" rx="1.2" ry="1.7" fill="#2a28d0"/><ellipse cx="135.0" cy="100.3" rx="0.6" ry="0.9" fill="#d83080"/><ellipse cx="149.5" cy="131.0" rx="1.3" ry="1.6" fill="#2a28d0"/><ellipse cx="149.5" cy="131.0" rx="0.6" ry="0.8" fill="#d83080"/><ellipse cx="58.6" cy="159.0" rx="1.0" ry="1.5" fill="#2a28d0"/><ellipse cx="60.8" cy="157.2" rx="0.9" ry="1.4" fill="#2a28d0"/><ellipse cx="150.5" cy="133.5" rx="1.3" ry="1.8" fill="#3a18c0"/><ellipse cx="150.5" cy="133.5" rx="0.6" ry="0.9" fill="#e8d040"/><ellipse cx="196.1" cy="138.5" rx="1.3" ry="1.4" fill="#3320b8"/><ellipse cx="196.1" cy="138.5" rx="0.6" ry="0.7" fill="#d83080"/><ellipse cx="75.1" cy="145.1" rx="1.1" ry="1.7" fill="#2a28d0"/><ellipse cx="75.1" cy="145.1" rx="0.6" ry="0.9" fill="#d83080"/><ellipse cx="70.3" cy="153.4" rx="1.1" ry="1.7" fill="#3a18c0"/><ellipse cx="174.3" cy="108.7" rx="0.9" ry="1.7" fill="#3a18c0"/><ellipse cx="176.5" cy="106.9" rx="0.8" ry="1.5" fill="#3a18c0"/><ellipse cx="128.6" cy="138.6" rx="1.0" ry="1.7" fill="#3a18c0"/><ellipse cx="128.6" cy="138.6" rx="0.5" ry="0.9" fill="#e8d040"/><ellipse cx="121.5" cy="130.4" rx="1.0" ry="1.3" fill="#3a18c0"/><ellipse cx="121.5" cy="130.4" rx="0.5" ry="0.7" fill="#d83080"/><ellipse cx="286.1" cy="57.0" rx="1.1" ry="1.7" fill="#3320b8"/><ellipse cx="121.2" cy="125.8" rx="1.2" ry="1.4" fill="#2a28d0"/><ellipse cx="121.2" cy="125.8" rx="0.6" ry="0.7" fill="#d83080"/><ellipse cx="211.7" cy="121.1" rx="1.1" ry="1.7" fill="#3320b8"/><ellipse cx="211.7" cy="121.1" rx="0.6" ry="0.8" fill="#d83080"/><ellipse cx="54.2" cy="158.0" rx="1.3" ry="1.5" fill="#3320b8"/><ellipse cx="54.2" cy="158.0" rx="0.6" ry="0.7" fill="#d83080"/><ellipse cx="253.2" cy="27.6" rx="0.8" ry="2.3" fill="#2a28d0"/><ellipse cx="191.4" cy="87.0" rx="1.0" ry="1.6" fill="#3a18c0"/><ellipse cx="191.4" cy="87.0" rx="0.5" ry="0.8" fill="#d83080"/><ellipse cx="193.6" cy="85.2" rx="0.9" ry="1.4" fill="#3a18c0"/><ellipse cx="78.3" cy="141.2" rx="1.1" ry="1.4" fill="#3320b8"/><ellipse cx="108.7" cy="149.6" rx="1.2" ry="1.7" fill="#2a28d0"/><ellipse cx="108.7" cy="149.6" rx="0.6" ry="0.9" fill="#e8d040"/><ellipse cx="140.8" cy="145.6" rx="1.0" ry="1.8" fill="#3a18c0"/><ellipse cx="101.1" cy="137.1" rx="1.2" ry="1.4" fill="#3a18c0"/><ellipse cx="103.3" cy="135.3" rx="1.1" ry="1.3" fill="#3a18c0"/><ellipse cx="67.2" cy="152.6" rx="1.2" ry="1.6" fill="#2a28d0"/><ellipse cx="67.2" cy="152.6" rx="0.6" ry="0.8" fill="#d83080"/><ellipse cx="87.5" cy="151.3" rx="1.2" ry="1.6" fill="#2a28d0"/><ellipse cx="247.0" cy="41.6" rx="0.9" ry="1.8" fill="#2a28d0"/><ellipse cx="249.2" cy="39.8" rx="0.9" ry="1.6" fill="#2a28d0"/><ellipse cx="175.8" cy="141.8" rx="1.2" ry="1.6" fill="#3320b8"/><ellipse cx="178.0" cy="140.0" rx="1.1" ry="1.5" fill="#3320b8"/><ellipse cx="242.6" cy="102.9" rx="1.0" ry="1.6" fill="#2a28d0"/><ellipse cx="295.8" cy="110.0" rx="1.1" ry="1.5" fill="#3a18c0"/><ellipse cx="213.9" cy="89.8" rx="0.9" ry="1.4" fill="#2a28d0"/><ellipse cx="213.9" cy="89.8" rx="0.5" ry="0.7" fill="#e8d040"/><ellipse cx="216.1" cy="88.0" rx="0.8" ry="1.2" fill="#2a28d0"/><ellipse cx="184.1" cy="81.8" rx="1.1" ry="1.4" fill="#2a28d0"/><ellipse cx="184.1" cy="81.8" rx="0.6" ry="0.7" fill="#d83080"/><ellipse cx="65.6" cy="146.9" rx="1.1" ry="1.4" fill="#3a18c0"/><ellipse cx="65.6" cy="146.9" rx="0.6" ry="0.7" fill="#d83080"/><ellipse cx="260.2" cy="115.1" rx="1.3" ry="1.3" fill="#2a28d0"/><ellipse cx="233.0" cy="62.6" rx="1.0" ry="2.3" fill="#2a28d0"/><ellipse cx="237.4" cy="118.3" rx="1.2" ry="1.8" fill="#3a18c0"/><ellipse cx="192.4" cy="125.6" rx="1.0" ry="1.3" fill="#3320b8"/><ellipse cx="192.4" cy="125.6" rx="0.5" ry="0.7" fill="#d83080"/><ellipse cx="51.2" cy="158.3" rx="1.0" ry="1.3" fill="#2a28d0"/><ellipse cx="204.5" cy="98.8" rx="1.0" ry="1.4" fill="#2a28d0"/><ellipse cx="204.5" cy="98.8" rx="0.5" ry="0.7" fill="#d83080"/><ellipse cx="99.4" cy="150.2" rx="1.0" ry="1.4" fill="#2a28d0"/><ellipse cx="99.4" cy="150.2" rx="0.5" ry="0.7" fill="#e8d040"/><ellipse cx="125.5" cy="120.4" rx="1.1" ry="1.7" fill="#2a28d0"/><ellipse cx="125.5" cy="120.4" rx="0.5" ry="0.8" fill="#d83080"/><ellipse cx="98.6" cy="148.6" rx="1.1" ry="1.3" fill="#3a18c0"/><ellipse cx="100.8" cy="146.8" rx="1.0" ry="1.2" fill="#3a18c0"/><ellipse cx="131.2" cy="132.6" rx="1.3" ry="1.4" fill="#3a18c0"/><ellipse cx="131.2" cy="132.6" rx="0.6" ry="0.7" fill="#d83080"/><ellipse cx="133.4" cy="130.8" rx="1.2" ry="1.3" fill="#3a18c0"/><ellipse cx="181.4" cy="101.1" rx="1.2" ry="1.3" fill="#3a18c0"/><ellipse cx="181.4" cy="101.1" rx="0.6" ry="0.7" fill="#d83080"/><ellipse cx="183.6" cy="99.3" rx="1.1" ry="1.2" fill="#3a18c0"/><ellipse cx="184.6" cy="108.8" rx="0.9" ry="1.4" fill="#3a18c0"/><ellipse cx="232.8" cy="118.2" rx="1.0" ry="1.3" fill="#3320b8"/><ellipse cx="235.0" cy="116.4" rx="0.9" ry="1.2" fill="#3320b8"/><ellipse cx="183.0" cy="106.3" rx="1.2" ry="1.7" fill="#3320b8"/><ellipse cx="192.3" cy="66.7" rx="1.1" ry="1.8" fill="#3320b8"/><ellipse cx="192.3" cy="66.7" rx="0.6" ry="0.9" fill="#d83080"/><ellipse cx="150.6" cy="108.8" rx="1.0" ry="1.6" fill="#3320b8"/><ellipse cx="150.6" cy="108.8" rx="0.5" ry="0.8" fill="#d83080"/><ellipse cx="206.0" cy="87.8" rx="1.1" ry="1.5" fill="#3a18c0"/><ellipse cx="178.8" cy="93.0" rx="1.3" ry="1.5" fill="#3320b8"/><ellipse cx="178.8" cy="93.0" rx="0.6" ry="0.7" fill="#e8d040"/><ellipse cx="127.0" cy="119.5" rx="1.1" ry="1.6" fill="#3a18c0"/><ellipse cx="309.2" cy="14.7" rx="0.8" ry="2.0" fill="#3320b8"/><ellipse cx="311.4" cy="12.9" rx="0.7" ry="1.8" fill="#3320b8"/><ellipse cx="185.1" cy="81.4" rx="1.1" ry="1.4" fill="#2a28d0"/><ellipse cx="175.9" cy="98.0" rx="1.0" ry="1.7" fill="#2a28d0"/><ellipse cx="175.9" cy="98.0" rx="0.5" ry="0.8" fill="#e8d040"/><ellipse cx="178.1" cy="96.2" rx="0.9" ry="1.5" fill="#2a28d0"/><ellipse cx="178.1" cy="96.2" rx="0.5" ry="0.8" fill="#e8d040"/><ellipse cx="64.4" cy="151.8" rx="1.2" ry="1.5" fill="#3a18c0"/><ellipse cx="64.4" cy="151.8" rx="0.6" ry="0.7" fill="#e8d040"/><ellipse cx="307.0" cy="38.5" rx="0.9" ry="1.7" fill="#2a28d0"/><ellipse cx="309.2" cy="36.7" rx="0.8" ry="1.5" fill="#2a28d0"/><ellipse cx="156.9" cy="138.8" rx="1.2" ry="1.3" fill="#3a18c0"/><ellipse cx="156.9" cy="138.8" rx="0.6" ry="0.7" fill="#d83080"/><ellipse cx="159.1" cy="137.0" rx="1.1" ry="1.2" fill="#3a18c0"/><ellipse cx="196.3" cy="135.4" rx="1.0" ry="1.4" fill="#3320b8"/><ellipse cx="196.3" cy="135.4" rx="0.5" ry="0.7" fill="#d83080"/><ellipse cx="198.5" cy="133.6" rx="0.9" ry="1.2" fill="#3320b8"/><ellipse cx="198.5" cy="133.6" rx="0.5" ry="0.6" fill="#d83080"/><ellipse cx="276.2" cy="21.1" rx="0.9" ry="1.7" fill="#3a18c0"/><ellipse cx="60.5" cy="153.9" rx="1.2" ry="1.7" fill="#2a28d0"/><ellipse cx="60.5" cy="153.9" rx="0.6" ry="0.9" fill="#d83080"/><ellipse cx="179.2" cy="85.6" rx="1.0" ry="1.3" fill="#3320b8"/><ellipse cx="179.2" cy="85.6" rx="0.5" ry="0.7" fill="#e8d040"/><ellipse cx="83.1" cy="145.2" rx="1.2" ry="1.5" fill="#2a28d0"/><ellipse cx="83.1" cy="145.2" rx="0.6" ry="0.8" fill="#d83080"/><ellipse cx="203.9" cy="54.4" rx="1.0" ry="1.5" fill="#3a18c0"/><ellipse cx="203.9" cy="54.4" rx="0.5" ry="0.7" fill="#d83080"/><ellipse cx="118.4" cy="146.8" rx="1.1" ry="1.4" fill="#3a18c0"/><ellipse cx="225.4" cy="91.4" rx="1.1" ry="1.8" fill="#3a18c0"/><ellipse cx="227.6" cy="89.6" rx="1.0" ry="1.6" fill="#3a18c0"/><ellipse cx="259.0" cy="36.8" rx="0.9" ry="2.2" fill="#3320b8"/><ellipse cx="245.9" cy="125.6" rx="1.0" ry="1.6" fill="#2a28d0"/><ellipse cx="245.9" cy="125.6" rx="0.5" ry="0.8" fill="#d83080"/><ellipse cx="93.7" cy="138.2" rx="1.1" ry="1.8" fill="#2a28d0"/><ellipse cx="95.9" cy="136.4" rx="1.0" ry="1.6" fill="#2a28d0"/><ellipse cx="182.4" cy="127.2" rx="1.2" ry="1.7" fill="#3320b8"/><ellipse cx="182.4" cy="127.2" rx="0.6" ry="0.8" fill="#d83080"/><ellipse cx="173.2" cy="95.1" rx="1.1" ry="1.7" fill="#3a18c0"/><ellipse cx="173.2" cy="95.1" rx="0.6" ry="0.8" fill="#e8d040"/><ellipse cx="210.4" cy="79.6" rx="0.9" ry="2.2" fill="#2a28d0"/><ellipse cx="210.4" cy="79.6" rx="0.5" ry="1.1" fill="#d83080"/><ellipse cx="98.9" cy="125.2" rx="1.3" ry="1.3" fill="#3320b8"/><ellipse cx="98.9" cy="125.2" rx="0.6" ry="0.7" fill="#d83080"/><ellipse cx="221.9" cy="126.7" rx="1.0" ry="1.6" fill="#3320b8"/><ellipse cx="224.1" cy="124.9" rx="0.9" ry="1.5" fill="#3320b8"/><ellipse cx="117.8" cy="129.6" rx="0.9" ry="1.7" fill="#2a28d0"/><ellipse cx="117.8" cy="129.6" rx="0.5" ry="0.9" fill="#d83080"/><ellipse cx="120.0" cy="127.8" rx="0.8" ry="1.5" fill="#2a28d0"/><ellipse cx="120.0" cy="127.8" rx="0.5" ry="0.8" fill="#d83080"/><ellipse cx="223.6" cy="49.5" rx="0.7" ry="1.6" fill="#3320b8"/><ellipse cx="58.7" cy="152.9" rx="1.1" ry="1.5" fill="#3a18c0"/><ellipse cx="58.7" cy="152.9" rx="0.5" ry="0.7" fill="#d83080"/><ellipse cx="60.9" cy="151.1" rx="1.0" ry="1.3" fill="#3a18c0"/><ellipse cx="60.9" cy="151.1" rx="0.5" ry="0.7" fill="#d83080"/><ellipse cx="198.7" cy="133.6" rx="1.2" ry="1.4" fill="#3a18c0"/><ellipse cx="198.7" cy="133.6" rx="0.6" ry="0.7" fill="#e8d040"/><ellipse cx="91.2" cy="136.9" rx="1.1" ry="1.6" fill="#3320b8"/><ellipse cx="91.2" cy="136.9" rx="0.5" ry="0.8" fill="#e8d040"/><ellipse cx="97.2" cy="141.7" rx="1.0" ry="1.3" fill="#3320b8"/><ellipse cx="97.2" cy="141.7" rx="0.5" ry="0.7" fill="#d83080"/><ellipse cx="172.3" cy="83.2" rx="0.9" ry="1.4" fill="#2a28d0"/><ellipse cx="172.3" cy="83.2" rx="0.5" ry="0.7" fill="#e8d040"/><ellipse cx="174.5" cy="81.4" rx="0.8" ry="1.3" fill="#2a28d0"/><ellipse cx="174.5" cy="81.4" rx="0.5" ry="0.6" fill="#e8d040"/><ellipse cx="76.0" cy="156.6" rx="0.9" ry="1.3" fill="#3a18c0"/><ellipse cx="76.0" cy="156.6" rx="0.5" ry="0.7" fill="#d83080"/><ellipse cx="78.2" cy="154.8" rx="0.8" ry="1.2" fill="#3a18c0"/><ellipse cx="218.6" cy="131.3" rx="1.0" ry="1.7" fill="#2a28d0"/><ellipse cx="220.8" cy="129.5" rx="0.9" ry="1.6" fill="#2a28d0"/><ellipse cx="155.4" cy="85.1" rx="1.2" ry="1.4" fill="#2a28d0"/><ellipse cx="155.4" cy="85.1" rx="0.6" ry="0.7" fill="#d83080"/><ellipse cx="245.8" cy="43.9" rx="0.7" ry="2.1" fill="#3a18c0"/><ellipse cx="104.9" cy="136.0" rx="1.2" ry="1.3" fill="#2a28d0"/><ellipse cx="64.1" cy="152.8" rx="1.1" ry="1.8" fill="#2a28d0"/><ellipse cx="140.6" cy="142.8" rx="1.0" ry="1.4" fill="#3a18c0"/><ellipse cx="142.8" cy="141.0" rx="0.9" ry="1.2" fill="#3a18c0"/><ellipse cx="242.2" cy="120.3" rx="0.9" ry="1.8" fill="#2a28d0"/><ellipse cx="270.5" cy="26.5" rx="0.9" ry="2.0" fill="#3a18c0"/><ellipse cx="160.9" cy="133.2" rx="1.0" ry="1.6" fill="#3a18c0"/><ellipse cx="160.9" cy="133.2" rx="0.5" ry="0.8" fill="#d83080"/><ellipse cx="127.6" cy="125.3" rx="1.1" ry="1.6" fill="#3a18c0"/><ellipse cx="127.6" cy="125.3" rx="0.6" ry="0.8" fill="#d83080"/><ellipse cx="114.6" cy="146.3" rx="1.1" ry="1.6" fill="#2a28d0"/><ellipse cx="116.8" cy="144.5" rx="1.0" ry="1.4" fill="#2a28d0"/><ellipse cx="212.9" cy="112.5" rx="1.1" ry="1.4" fill="#3a18c0"/><ellipse cx="212.9" cy="112.5" rx="0.6" ry="0.7" fill="#d83080"/><ellipse cx="215.1" cy="110.7" rx="1.0" ry="1.2" fill="#3a18c0"/><ellipse cx="215.1" cy="110.7" rx="0.5" ry="0.6" fill="#d83080"/><ellipse cx="177.7" cy="89.8" rx="0.9" ry="1.5" fill="#2a28d0"/><ellipse cx="179.9" cy="88.0" rx="0.9" ry="1.3" fill="#2a28d0"/><ellipse cx="201.3" cy="92.3" rx="1.0" ry="1.6" fill="#3a18c0"/><ellipse cx="201.3" cy="92.3" rx="0.5" ry="0.8" fill="#d83080"/><ellipse cx="118.1" cy="125.4" rx="1.2" ry="1.7" fill="#3320b8"/><ellipse cx="118.1" cy="125.4" rx="0.6" ry="0.9" fill="#d83080"/><ellipse cx="120.3" cy="123.6" rx="1.1" ry="1.5" fill="#3320b8"/><ellipse cx="120.3" cy="123.6" rx="0.5" ry="0.8" fill="#d83080"/><ellipse cx="198.6" cy="134.8" rx="1.3" ry="1.3" fill="#3a18c0"/><ellipse cx="198.6" cy="134.8" rx="0.6" ry="0.7" fill="#d83080"/><ellipse cx="84.9" cy="141.1" rx="1.3" ry="1.6" fill="#3320b8"/><ellipse cx="84.9" cy="141.1" rx="0.6" ry="0.8" fill="#e8d040"/><ellipse cx="179.3" cy="135.9" rx="1.1" ry="1.7" fill="#3320b8"/><ellipse cx="179.3" cy="135.9" rx="0.5" ry="0.8" fill="#d83080"/><ellipse cx="188.2" cy="93.9" rx="1.1" ry="1.5" fill="#3a18c0"/><ellipse cx="188.2" cy="93.9" rx="0.6" ry="0.8" fill="#d83080"/><ellipse cx="212.4" cy="123.4" rx="1.1" ry="1.7" fill="#3320b8"/><ellipse cx="212.4" cy="123.4" rx="0.6" ry="0.8" fill="#e8d040"/><ellipse cx="214.6" cy="121.6" rx="1.0" ry="1.5" fill="#3320b8"/><ellipse cx="214.6" cy="121.6" rx="0.5" ry="0.8" fill="#e8d040"/><ellipse cx="223.3" cy="79.1" rx="1.0" ry="2.2" fill="#2a28d0"/><ellipse cx="180.8" cy="71.3" rx="1.1" ry="1.5" fill="#3320b8"/><ellipse cx="145.3" cy="122.0" rx="1.1" ry="1.6" fill="#3a18c0"/><ellipse cx="125.6" cy="146.4" rx="0.9" ry="1.3" fill="#3320b8"/><ellipse cx="125.6" cy="146.4" rx="0.5" ry="0.7" fill="#d83080"/><ellipse cx="177.4" cy="103.2" rx="1.1" ry="1.8" fill="#3320b8"/><ellipse cx="177.4" cy="103.2" rx="0.6" ry="0.9" fill="#e8d040"/><ellipse cx="179.6" cy="101.4" rx="1.0" ry="1.6" fill="#3320b8"/><ellipse cx="179.6" cy="101.4" rx="0.5" ry="0.8" fill="#e8d040"/><ellipse cx="275.2" cy="29.3" rx="0.9" ry="1.8" fill="#2a28d0"/><ellipse cx="65.5" cy="158.1" rx="1.0" ry="1.4" fill="#3a18c0"/><ellipse cx="67.7" cy="156.3" rx="0.9" ry="1.2" fill="#3a18c0"/><ellipse cx="217.6" cy="130.0" rx="1.0" ry="1.4" fill="#2a28d0"/><ellipse cx="238.8" cy="43.4" rx="0.8" ry="2.3" fill="#2a28d0"/><ellipse cx="241.8" cy="55.7" rx="0.9" ry="2.1" fill="#3320b8"/><ellipse cx="147.6" cy="119.5" rx="0.9" ry="1.6" fill="#3a18c0"/><ellipse cx="147.6" cy="119.5" rx="0.5" ry="0.8" fill="#d83080"/><ellipse cx="139.0" cy="124.8" rx="1.3" ry="1.7" fill="#2a28d0"/><ellipse cx="139.0" cy="124.8" rx="0.6" ry="0.9" fill="#d83080"/><ellipse cx="141.2" cy="123.0" rx="1.1" ry="1.6" fill="#2a28d0"/><ellipse cx="141.2" cy="123.0" rx="0.6" ry="0.8" fill="#d83080"/><ellipse cx="268.0" cy="13.5" rx="1.0" ry="2.0" fill="#3320b8"/><ellipse cx="193.6" cy="67.4" rx="0.9" ry="1.4" fill="#2a28d0"/><ellipse cx="193.6" cy="67.4" rx="0.5" ry="0.7" fill="#d83080"/><ellipse cx="105.5" cy="149.9" rx="1.1" ry="1.8" fill="#3a18c0"/><ellipse cx="227.0" cy="92.3" rx="0.9" ry="1.5" fill="#2a28d0"/><ellipse cx="229.2" cy="90.5" rx="0.8" ry="1.4" fill="#2a28d0"/><ellipse cx="116.0" cy="125.6" rx="1.2" ry="1.4" fill="#2a28d0"/><ellipse cx="116.0" cy="125.6" rx="0.6" ry="0.7" fill="#d83080"/><ellipse cx="289.4" cy="122.3" rx="0.9" ry="1.3" fill="#3320b8"/><ellipse cx="180.1" cy="141.1" rx="1.2" ry="1.6" fill="#3a18c0"/><ellipse cx="180.1" cy="141.1" rx="0.6" ry="0.8" fill="#d83080"/><ellipse cx="81.6" cy="155.3" rx="1.2" ry="1.3" fill="#2a28d0"/><ellipse cx="133.2" cy="111.2" rx="1.1" ry="1.4" fill="#2a28d0"/><ellipse cx="133.2" cy="111.2" rx="0.6" ry="0.7" fill="#d83080"/><ellipse cx="202.3" cy="123.9" rx="1.2" ry="1.5" fill="#3320b8"/><ellipse cx="202.3" cy="123.9" rx="0.6" ry="0.8" fill="#d83080"/><ellipse cx="204.5" cy="122.1" rx="1.1" ry="1.4" fill="#3320b8"/><ellipse cx="176.0" cy="117.0" rx="1.2" ry="1.4" fill="#2a28d0"/><ellipse cx="176.0" cy="117.0" rx="0.6" ry="0.7" fill="#d83080"/><ellipse cx="178.2" cy="115.2" rx="1.1" ry="1.3" fill="#2a28d0"/><ellipse cx="178.2" cy="115.2" rx="0.6" ry="0.6" fill="#d83080"/><ellipse cx="150.0" cy="121.9" rx="1.0" ry="1.4" fill="#3320b8"/><ellipse cx="150.0" cy="121.9" rx="0.5" ry="0.7" fill="#d83080"/><ellipse cx="102.5" cy="152.4" rx="1.1" ry="1.3" fill="#2a28d0"/><ellipse cx="102.5" cy="152.4" rx="0.5" ry="0.7" fill="#e8d040"/><ellipse cx="68.8" cy="145.3" rx="1.1" ry="1.8" fill="#2a28d0"/><ellipse cx="71.0" cy="143.5" rx="1.0" ry="1.6" fill="#2a28d0"/><ellipse cx="118.8" cy="124.2" rx="1.0" ry="1.6" fill="#3a18c0"/><ellipse cx="118.8" cy="124.2" rx="0.5" ry="0.8" fill="#d83080"/><ellipse cx="124.6" cy="140.1" rx="1.2" ry="1.4" fill="#2a28d0"/><ellipse cx="94.6" cy="140.5" rx="0.9" ry="1.4" fill="#3320b8"/><ellipse cx="94.6" cy="140.5" rx="0.5" ry="0.7" fill="#d83080"/><ellipse cx="300.6" cy="114.2" rx="1.3" ry="1.4" fill="#3a18c0"/><ellipse cx="71.3" cy="150.6" rx="1.0" ry="1.4" fill="#3a18c0"/><ellipse cx="71.3" cy="150.6" rx="0.5" ry="0.7" fill="#e8d040"/><ellipse cx="79.5" cy="152.8" rx="1.1" ry="1.7" fill="#3a18c0"/><ellipse cx="79.5" cy="152.8" rx="0.6" ry="0.8" fill="#d83080"/><ellipse cx="207.8" cy="133.2" rx="1.0" ry="1.5" fill="#2a28d0"/><ellipse cx="207.8" cy="133.2" rx="0.5" ry="0.8" fill="#d83080"/><ellipse cx="210.0" cy="131.4" rx="0.9" ry="1.4" fill="#2a28d0"/><ellipse cx="78.5" cy="152.7" rx="0.9" ry="1.3" fill="#2a28d0"/><ellipse cx="78.5" cy="152.7" rx="0.5" ry="0.7" fill="#d83080"/><ellipse cx="80.7" cy="150.9" rx="0.8" ry="1.2" fill="#2a28d0"/><ellipse cx="80.7" cy="150.9" rx="0.5" ry="0.6" fill="#d83080"/><ellipse cx="294.4" cy="13.0" rx="0.9" ry="1.8" fill="#3a18c0"/><ellipse cx="135.7" cy="115.8" rx="1.0" ry="1.5" fill="#2a28d0"/><ellipse cx="137.9" cy="114.0" rx="0.9" ry="1.3" fill="#2a28d0"/><ellipse cx="88.0" cy="153.7" rx="1.1" ry="1.4" fill="#3320b8"/><ellipse cx="76.7" cy="146.8" rx="1.0" ry="1.5" fill="#2a28d0"/><ellipse cx="76.7" cy="146.8" rx="0.5" ry="0.8" fill="#d83080"/><ellipse cx="264.9" cy="119.1" rx="1.1" ry="1.4" fill="#3320b8"/><ellipse cx="185.9" cy="100.2" rx="1.2" ry="1.4" fill="#3a18c0"/><ellipse cx="185.9" cy="100.2" rx="0.6" ry="0.7" fill="#d83080"/><ellipse cx="152.1" cy="101.4" rx="1.1" ry="1.6" fill="#2a28d0"/><ellipse cx="276.7" cy="29.9" rx="0.8" ry="2.4" fill="#2a28d0"/><ellipse cx="75.8" cy="140.4" rx="1.1" ry="1.4" fill="#2a28d0"/><ellipse cx="75.8" cy="140.4" rx="0.6" ry="0.7" fill="#d83080"/><ellipse cx="109.1" cy="147.3" rx="1.0" ry="1.4" fill="#3a18c0"/><ellipse cx="109.1" cy="147.3" rx="0.5" ry="0.7" fill="#e8d040"/><ellipse cx="109.9" cy="147.6" rx="1.0" ry="1.6" fill="#3a18c0"/><ellipse cx="109.9" cy="147.6" rx="0.5" ry="0.8" fill="#d83080"/><ellipse cx="112.1" cy="145.8" rx="0.9" ry="1.5" fill="#3a18c0"/><ellipse cx="112.1" cy="145.8" rx="0.5" ry="0.7" fill="#d83080"/><ellipse cx="223.4" cy="48.5" rx="0.9" ry="2.3" fill="#2a28d0"/><ellipse cx="109.0" cy="152.2" rx="1.0" ry="1.6" fill="#3320b8"/><ellipse cx="109.0" cy="152.2" rx="0.5" ry="0.8" fill="#d83080"/><ellipse cx="241.7" cy="101.3" rx="1.1" ry="1.5" fill="#3320b8"/><ellipse cx="243.9" cy="99.5" rx="1.0" ry="1.4" fill="#3320b8"/><ellipse cx="207.8" cy="136.0" rx="1.1" ry="1.6" fill="#3320b8"/><ellipse cx="207.8" cy="136.0" rx="0.6" ry="0.8" fill="#d83080"/><ellipse cx="187.7" cy="135.9" rx="1.1" ry="1.5" fill="#3320b8"/><ellipse cx="180.3" cy="108.5" rx="1.3" ry="1.7" fill="#3320b8"/><ellipse cx="180.3" cy="108.5" rx="0.6" ry="0.8" fill="#d83080"/><ellipse cx="182.5" cy="106.7" rx="1.2" ry="1.5" fill="#3320b8"/><ellipse cx="182.5" cy="106.7" rx="0.6" ry="0.8" fill="#d83080"/><ellipse cx="115.7" cy="122.5" rx="1.1" ry="1.8" fill="#3320b8"/><ellipse cx="115.7" cy="122.5" rx="0.6" ry="0.9" fill="#d83080"/><ellipse cx="117.9" cy="120.7" rx="1.0" ry="1.6" fill="#3320b8"/><ellipse cx="81.3" cy="155.4" rx="1.2" ry="1.5" fill="#2a28d0"/><ellipse cx="81.3" cy="155.4" rx="0.6" ry="0.7" fill="#d83080"/><ellipse cx="53.0" cy="156.4" rx="0.9" ry="1.4" fill="#3a18c0"/><ellipse cx="172.1" cy="71.4" rx="1.0" ry="1.4" fill="#3a18c0"/><ellipse cx="174.3" cy="69.6" rx="0.9" ry="1.2" fill="#3a18c0"/><ellipse cx="212.8" cy="118.2" rx="1.0" ry="1.4" fill="#2a28d0"/><ellipse cx="212.8" cy="118.2" rx="0.5" ry="0.7" fill="#d83080"/><ellipse cx="224.7" cy="126.1" rx="1.0" ry="1.4" fill="#3a18c0"/><ellipse cx="130.0" cy="144.5" rx="1.2" ry="1.4" fill="#3a18c0"/><ellipse cx="130.0" cy="144.5" rx="0.6" ry="0.7" fill="#d83080"/><ellipse cx="197.0" cy="70.1" rx="1.3" ry="1.4" fill="#2a28d0"/><ellipse cx="279.4" cy="94.9" rx="1.0" ry="1.4" fill="#3a18c0"/><ellipse cx="110.8" cy="137.2" rx="1.3" ry="1.8" fill="#3a18c0"/><ellipse cx="222.7" cy="108.3" rx="0.9" ry="1.4" fill="#2a28d0"/><ellipse cx="222.7" cy="108.3" rx="0.5" ry="0.7" fill="#d83080"/><ellipse cx="80.1" cy="149.7" rx="1.0" ry="1.6" fill="#3320b8"/><ellipse cx="80.1" cy="149.7" rx="0.5" ry="0.8" fill="#d83080"/><ellipse cx="243.5" cy="132.6" rx="1.0" ry="1.4" fill="#3a18c0"/><ellipse cx="245.7" cy="130.8" rx="0.9" ry="1.3" fill="#3a18c0"/><ellipse cx="127.5" cy="149.5" rx="1.2" ry="1.6" fill="#3a18c0"/><ellipse cx="129.7" cy="147.7" rx="1.1" ry="1.4" fill="#3a18c0"/><ellipse cx="78.7" cy="137.5" rx="1.1" ry="1.7" fill="#2a28d0"/><ellipse cx="78.7" cy="137.5" rx="0.5" ry="0.9" fill="#d83080"/><ellipse cx="80.9" cy="135.7" rx="1.0" ry="1.5" fill="#2a28d0"/><ellipse cx="80.9" cy="135.7" rx="0.5" ry="0.8" fill="#d83080"/><ellipse cx="121.3" cy="142.2" rx="1.2" ry="1.7" fill="#2a28d0"/><ellipse cx="121.3" cy="142.2" rx="0.6" ry="0.8" fill="#d83080"/><ellipse cx="145.4" cy="103.0" rx="1.0" ry="1.6" fill="#3320b8"/><ellipse cx="145.4" cy="103.0" rx="0.5" ry="0.8" fill="#e8d040"/><ellipse cx="147.6" cy="101.2" rx="0.9" ry="1.5" fill="#3320b8"/><ellipse cx="147.6" cy="101.2" rx="0.5" ry="0.7" fill="#e8d040"/><ellipse cx="178.5" cy="116.8" rx="1.2" ry="1.8" fill="#3a18c0"/><ellipse cx="178.5" cy="116.8" rx="0.6" ry="0.9" fill="#e8d040"/><ellipse cx="163.8" cy="84.4" rx="1.0" ry="1.8" fill="#3320b8"/><ellipse cx="171.3" cy="123.4" rx="1.1" ry="1.6" fill="#3320b8"/><ellipse cx="171.3" cy="123.4" rx="0.5" ry="0.8" fill="#d83080"/><ellipse cx="210.1" cy="131.8" rx="1.0" ry="1.6" fill="#3a18c0"/><ellipse cx="236.0" cy="51.9" rx="0.9" ry="2.1" fill="#2a28d0"/><ellipse cx="238.2" cy="50.1" rx="0.8" ry="1.9" fill="#2a28d0"/><ellipse cx="144.0" cy="145.8" rx="1.3" ry="1.6" fill="#3320b8"/><ellipse cx="107.7" cy="129.8" rx="1.1" ry="1.3" fill="#3a18c0"/><ellipse cx="109.9" cy="128.0" rx="1.0" ry="1.2" fill="#3a18c0"/><ellipse cx="108.4" cy="129.2" rx="1.3" ry="1.6" fill="#3320b8"/><ellipse cx="110.6" cy="127.4" rx="1.1" ry="1.5" fill="#3320b8"/><ellipse cx="178.0" cy="92.7" rx="0.9" ry="1.7" fill="#3320b8"/><ellipse cx="178.0" cy="92.7" rx="0.5" ry="0.8" fill="#d83080"/><ellipse cx="104.8" cy="151.7" rx="1.0" ry="1.4" fill="#3a18c0"/><ellipse cx="104.8" cy="151.7" rx="0.5" ry="0.7" fill="#d83080"/><ellipse cx="77.1" cy="154.2" rx="1.2" ry="1.4" fill="#3320b8"/><ellipse cx="77.1" cy="154.2" rx="0.6" ry="0.7" fill="#d83080"/><ellipse cx="79.3" cy="152.4" rx="1.1" ry="1.3" fill="#3320b8"/><ellipse cx="79.3" cy="152.4" rx="0.5" ry="0.6" fill="#d83080"/><ellipse cx="231.0" cy="119.9" rx="1.1" ry="1.3" fill="#3a18c0"/><ellipse cx="132.3" cy="117.1" rx="1.2" ry="1.7" fill="#3320b8"/><ellipse cx="132.3" cy="117.1" rx="0.6" ry="0.8" fill="#d83080"/><ellipse cx="134.5" cy="115.3" rx="1.1" ry="1.5" fill="#3320b8"/><ellipse cx="132.0" cy="142.9" rx="1.1" ry="1.7" fill="#2a28d0"/><ellipse cx="303.9" cy="18.3" rx="0.9" ry="2.0" fill="#3a18c0"/><ellipse cx="82.3" cy="155.0" rx="1.0" ry="1.4" fill="#3a18c0"/><ellipse cx="77.6" cy="137.7" rx="1.0" ry="1.5" fill="#3a18c0"/><ellipse cx="77.6" cy="137.7" rx="0.5" ry="0.8" fill="#d83080"/><ellipse cx="97.5" cy="127.3" rx="1.0" ry="1.8" fill="#3320b8"/><ellipse cx="97.5" cy="127.3" rx="0.5" ry="0.9" fill="#d83080"/><ellipse cx="125.5" cy="109.9" rx="1.0" ry="1.7" fill="#2a28d0"/><ellipse cx="125.5" cy="109.9" rx="0.5" ry="0.9" fill="#d83080"/><ellipse cx="153.5" cy="93.2" rx="0.9" ry="1.7" fill="#3a18c0"/><ellipse cx="153.5" cy="93.2" rx="0.5" ry="0.9" fill="#d83080"/><ellipse cx="147.7" cy="145.2" rx="0.9" ry="1.5" fill="#3320b8"/><ellipse cx="82.2" cy="146.0" rx="1.1" ry="1.6" fill="#3320b8"/><ellipse cx="82.2" cy="146.0" rx="0.5" ry="0.8" fill="#d83080"/><ellipse cx="189.4" cy="124.6" rx="1.1" ry="1.5" fill="#3a18c0"/><ellipse cx="189.4" cy="124.6" rx="0.6" ry="0.8" fill="#d83080"/><ellipse cx="191.6" cy="122.8" rx="1.0" ry="1.4" fill="#3a18c0"/><ellipse cx="191.6" cy="122.8" rx="0.5" ry="0.7" fill="#d83080"/></g></svg><div class="vl" style="left:194px"></div><div class="hl" style="top:85px"></div></div>
<div class="img" style="left:581px;"><svg width="421" height="186" style="position:absolute;left:0;top:0"><defs><filter id="bl2" x="-30%" y="-30%" width="160%" height="160%"><feGaussianBlur stdDeviation="7"/></filter><filter id="bm2" x="-30%" y="-30%" width="160%" height="160%"><feGaussianBlur stdDeviation="1.0"/></filter><filter id="bs2" x="-50%" y="-50%" width="200%" height="200%"><feGaussianBlur stdDeviation="0.4"/></filter></defs><g filter="url(#bm2)" fill="#2048dc"><polygon points="50.0,163.5 58.0,162.7 66.0,161.6 74.0,160.6 82.0,159.5 90.0,158.5 98.0,157.4 106.0,156.4 114.0,155.3 122.0,154.2 130.0,153.0 138.0,151.8 146.0,150.6 154.0,149.4 162.0,148.2 170.0,147.0 178.0,145.8 186.0,144.6 194.0,143.4 202.0,142.3 210.0,141.2 218.0,140.1 226.0,139.1 234.0,138.0 242.0,136.9 250.0,135.8 258.0,134.8 266.0,133.4 274.0,132.0 282.0,130.6 290.0,129.2 298.0,127.7 306.0,126.3 314.0,124.9 322.0,123.5 330.0,122.1 338.0,120.6 346.0,119.2 354.0,117.7 362.0,116.1 370.0,114.5 378.0,112.9 386.0,111.2 394.0,109.4 402.0,107.7 410.0,105.9 418.0,104.2 421.0,103.5 421.0,103.0 418.0,103.6 410.0,105.3 402.0,106.9 394.0,108.5 386.0,109.9 378.0,111.3 370.0,112.6 362.0,113.9 354.0,115.2 346.0,116.4 338.0,117.5 330.0,118.5 322.0,119.6 314.0,120.6 306.0,121.6 298.0,122.6 290.0,123.7 282.0,124.7 274.0,125.7 266.0,126.7 258.0,127.7 250.0,128.3 242.0,129.4 234.0,130.4 226.0,131.5 218.0,132.5 210.0,133.5 202.0,134.6 194.0,135.6 186.0,137.3 178.0,139.1 170.0,140.9 162.0,142.7 154.0,144.5 146.0,146.3 138.0,148.0 130.0,149.5 122.0,151.0 114.0,152.5 106.0,153.9 98.0,155.2 90.0,156.6 82.0,157.9 74.0,159.2 66.0,160.6 58.0,161.9 50.0,163.0" fill-opacity="0.138"/><polygon points="50.0,163.5 58.0,162.7 66.0,161.6 74.0,160.6 82.0,159.5 90.0,158.5 98.0,157.4 106.0,156.4 114.0,155.3 122.0,154.2 130.0,153.0 138.0,151.8 146.0,150.6 154.0,149.4 162.0,148.2 170.0,147.0 178.0,145.8 186.0,144.6 194.0,143.4 202.0,142.3 210.0,141.2 218.0,140.1 226.0,139.1 234.0,138.0 242.0,136.9 250.0,135.8 258.0,134.8 266.0,133.4 274.0,132.0 282.0,130.6 290.0,129.2 298.0,127.7 306.0,126.3 314.0,124.9 322.0,123.5 330.0,122.1 338.0,120.6 346.0,119.2 354.0,117.7 362.0,116.1 370.0,114.5 378.0,112.9 386.0,111.2 394.0,109.4 402.0,107.7 410.0,105.9 418.0,104.2 421.0,103.5 421.0,103.0 418.0,103.6 410.0,105.2 402.0,106.7 394.0,108.0 386.0,109.1 378.0,110.2 370.0,111.2 362.0,112.2 354.0,113.2 346.0,114.1 338.0,114.8 330.0,115.5 322.0,116.2 314.0,116.8 306.0,117.4 298.0,118.0 290.0,118.7 282.0,119.3 274.0,119.9 266.0,120.5 258.0,121.1 250.0,121.3 242.0,122.3 234.0,123.4 226.0,124.4 218.0,125.4 210.0,126.4 202.0,127.4 194.0,128.4 186.0,130.6 178.0,133.0 170.0,135.3 162.0,137.7 154.0,140.1 146.0,142.5 138.0,144.6 130.0,146.5 122.0,148.4 114.0,150.1 106.0,151.9 98.0,153.6 90.0,155.2 82.0,156.8 74.0,158.4 66.0,160.0 58.0,161.6 50.0,163.0" fill-opacity="0.138"/><polygon points="50.0,163.5 58.0,162.7 66.0,161.6 74.0,160.6 82.0,159.5 90.0,158.5 98.0,157.4 106.0,156.4 114.0,155.3 122.0,154.2 130.0,153.0 138.0,151.8 146.0,150.6 154.0,149.4 162.0,148.2 170.0,147.0 178.0,145.8 186.0,144.6 194.0,143.4 202.0,142.3 210.0,141.2 218.0,140.1 226.0,139.1 234.0,138.0 242.0,136.9 250.0,135.8 258.0,134.8 266.0,133.4 274.0,132.0 282.0,130.6 290.0,129.2 298.0,127.7 306.0,126.3 314.0,124.9 322.0,123.5 330.0,122.1 338.0,120.6 346.0,119.2 354.0,117.7 362.0,116.1 370.0,114.5 378.0,112.9 386.0,111.2 394.0,109.4 402.0,107.7 410.0,105.9 418.0,104.2 421.0,103.5 421.0,103.0 418.0,103.6 410.0,105.0 402.0,106.5 394.0,107.5 386.0,108.4 378.0,109.2 370.0,109.9 362.0,110.6 354.0,111.3 346.0,111.8 338.0,112.1 330.0,112.4 322.0,112.8 314.0,113.0 306.0,113.2 298.0,113.4 290.0,113.7 282.0,113.9 274.0,114.1 266.0,114.3 258.0,114.5 250.0,114.3 242.0,115.3 234.0,116.3 226.0,117.3 218.0,118.2 210.0,119.2 202.0,120.2 194.0,121.1 186.0,123.8 178.0,126.8 170.0,129.8 162.0,132.8 154.0,135.7 146.0,138.7 138.0,141.3 130.0,143.5 122.0,145.7 114.0,147.8 106.0,149.9 98.0,151.9 90.0,153.8 82.0,155.7 74.0,157.6 66.0,159.5 58.0,161.4 50.0,163.0" fill-opacity="0.138"/><polygon points="50.0,163.5 58.0,162.7 66.0,161.6 74.0,160.6 82.0,159.5 90.0,158.5 98.0,157.4 106.0,156.4 114.0,155.3 122.0,154.2 130.0,153.0 138.0,151.8 146.0,150.6 154.0,149.4 162.0,148.2 170.0,147.0 178.0,145.8 186.0,144.6 194.0,143.4 202.0,142.3 210.0,141.2 218.0,140.1 226.0,139.1 234.0,138.0 242.0,136.9 250.0,135.8 258.0,134.8 266.0,133.4 274.0,132.0 282.0,130.6 290.0,129.2 298.0,127.7 306.0,126.3 314.0,124.9 322.0,123.5 330.0,122.1 338.0,120.6 346.0,119.2 354.0,117.7 362.0,116.1 370.0,114.5 378.0,112.9 386.0,111.2 394.0,109.4 402.0,107.7 410.0,105.9 418.0,104.2 421.0,103.5 421.0,103.0 418.0,103.5 410.0,104.9 402.0,106.3 394.0,107.0 386.0,107.6 378.0,108.1 370.0,108.5 362.0,108.9 354.0,109.3 346.0,109.5 338.0,109.4 330.0,109.4 322.0,109.3 314.0,109.2 306.0,109.0 298.0,108.8 290.0,108.7 282.0,108.5 274.0,108.3 266.0,108.1 258.0,107.9 250.0,107.3 242.0,108.3 234.0,109.2 226.0,110.1 218.0,111.1 210.0,112.0 202.0,112.9 194.0,113.9 186.0,117.1 178.0,120.7 170.0,124.2 162.0,127.8 154.0,131.3 146.0,134.9 138.0,138.0 130.0,140.5 122.0,143.0 114.0,145.5 106.0,147.9 98.0,150.2 90.0,152.4 82.0,154.5 74.0,156.7 66.0,158.9 58.0,161.1 50.0,163.0" fill-opacity="0.138"/><polygon points="50.0,163.5 58.0,162.7 66.0,161.6 74.0,160.6 82.0,159.5 90.0,158.5 98.0,157.4 106.0,156.4 114.0,155.3 122.0,154.2 130.0,153.0 138.0,151.8 146.0,150.6 154.0,149.4 162.0,148.2 170.0,147.0 178.0,145.8 186.0,144.6 194.0,143.4 202.0,142.3 210.0,141.2 218.0,140.1 226.0,139.1 234.0,138.0 242.0,136.9 250.0,135.8 258.0,134.8 266.0,133.4 274.0,132.0 282.0,130.6 290.0,129.2 298.0,127.7 306.0,126.3 314.0,124.9 322.0,123.5 330.0,122.1 338.0,120.6 346.0,119.2 354.0,117.7 362.0,116.1 370.0,114.5 378.0,112.9 386.0,111.2 394.0,109.4 402.0,107.7 410.0,105.9 418.0,104.2 421.0,103.5 421.0,103.0 418.0,103.5 410.0,104.8 402.0,106.0 394.0,106.6 386.0,106.8 378.0,107.0 370.0,107.1 362.0,107.2 354.0,107.3 346.0,107.2 338.0,106.8 330.0,106.3 322.0,105.9 314.0,105.4 306.0,104.8 298.0,104.2 290.0,103.7 282.0,103.1 274.0,102.5 266.0,101.9 258.0,101.3 250.0,100.3 242.0,101.2 234.0,102.1 226.0,103.0 218.0,103.9 210.0,104.8 202.0,105.7 194.0,106.6 186.0,110.4 178.0,114.5 170.0,118.7 162.0,122.8 154.0,127.0 146.0,131.1 138.0,134.6 130.0,137.5 122.0,140.4 114.0,143.1 106.0,145.9 98.0,148.5 90.0,151.0 82.0,153.4 74.0,155.9 66.0,158.3 58.0,160.8 50.0,163.0" fill-opacity="0.138"/><polygon points="50.0,163.5 58.0,162.7 66.0,161.6 74.0,160.6 82.0,159.5 90.0,158.5 98.0,157.4 106.0,156.4 114.0,155.3 122.0,154.2 130.0,153.0 138.0,151.8 146.0,150.6 154.0,149.4 162.0,148.2 170.0,147.0 178.0,145.8 186.0,144.6 194.0,143.4 202.0,142.3 210.0,141.2 218.0,140.1 226.0,139.1 234.0,138.0 242.0,136.9 250.0,135.8 258.0,134.8 266.0,133.4 274.0,132.0 282.0,130.6 290.0,129.2 298.0,127.7 306.0,126.3 314.0,124.9 322.0,123.5 330.0,122.1 338.0,120.6 346.0,119.2 354.0,117.7 362.0,116.1 370.0,114.5 378.0,112.9 386.0,111.2 394.0,109.4 402.0,107.7 410.0,105.9 418.0,104.2 421.0,103.5 421.0,103.0 418.0,103.4 410.0,104.6 402.0,105.8 394.0,106.1 386.0,106.0 378.0,106.0 370.0,105.8 362.0,105.5 354.0,105.3 346.0,104.9 338.0,104.1 330.0,103.3 322.0,102.5 314.0,101.6 306.0,100.6 298.0,99.6 290.0,98.7 282.0,97.7 274.0,96.7 266.0,95.7 258.0,94.7 250.0,93.3 242.0,94.2 234.0,95.1 226.0,95.9 218.0,96.8 210.0,97.7 202.0,98.5 194.0,99.4 186.0,103.6 178.0,108.4 170.0,113.1 162.0,117.8 154.0,122.6 146.0,127.3 138.0,131.3 130.0,134.5 122.0,137.7 114.0,140.8 106.0,143.9 98.0,146.8 90.0,149.6 82.0,152.3 74.0,155.0 66.0,157.8 58.0,160.5 50.0,163.0" fill-opacity="0.138"/><polygon points="50.0,163.5 58.0,162.7 66.0,161.6 74.0,160.6 82.0,159.5 90.0,158.5 98.0,157.4 106.0,156.4 114.0,155.3 122.0,154.2 130.0,153.0 138.0,151.8 146.0,150.6 154.0,149.4 162.0,148.2 170.0,147.0 178.0,145.8 186.0,144.6 194.0,143.4 202.0,142.3 210.0,141.2 218.0,140.1 226.0,139.1 234.0,138.0 242.0,136.9 250.0,135.8 258.0,134.8 266.0,133.4 274.0,132.0 282.0,130.6 290.0,129.2 298.0,127.7 306.0,126.3 314.0,124.9 322.0,123.5 330.0,122.1 338.0,120.6 346.0,119.2 354.0,117.7 362.0,116.1 370.0,114.5 378.0,112.9 386.0,111.2 394.0,109.4 402.0,107.7 410.0,105.9 418.0,104.2 421.0,103.5 421.0,103.0 418.0,103.4 410.0,104.5 402.0,105.6 394.0,105.6 386.0,105.3 378.0,104.9 370.0,104.4 362.0,103.9 354.0,103.4 346.0,102.6 338.0,101.4 330.0,100.3 322.0,99.1 314.0,97.8 306.0,96.4 298.0,95.0 290.0,93.7 282.0,92.3 274.0,90.9 266.0,89.5 258.0,88.1 250.0,86.3 242.0,87.2 234.0,88.0 226.0,88.8 218.0,89.7 210.0,90.5 202.0,91.3 194.0,92.1 186.0,96.9 178.0,102.2 170.0,107.6 162.0,112.9 154.0,118.2 146.0,123.5 138.0,128.0 130.0,131.5 122.0,135.0 114.0,138.5 106.0,141.9 98.0,145.2 90.0,148.2 82.0,151.2 74.0,154.2 66.0,157.2 58.0,160.2 50.0,163.0" fill-opacity="0.138"/><polygon points="50.0,163.5 58.0,162.7 66.0,161.6 74.0,160.6 82.0,159.5 90.0,158.5 98.0,157.4 106.0,156.4 114.0,155.3 122.0,154.2 130.0,153.0 138.0,151.8 146.0,150.6 154.0,149.4 162.0,148.2 170.0,147.0 178.0,145.8 186.0,144.6 194.0,143.4 202.0,142.3 210.0,141.2 218.0,140.1 226.0,139.1 234.0,138.0 242.0,136.9 250.0,135.8 258.0,134.8 266.0,133.4 274.0,132.0 282.0,130.6 290.0,129.2 298.0,127.7 306.0,126.3 314.0,124.9 322.0,123.5 330.0,122.1 338.0,120.6 346.0,119.2 354.0,117.7 362.0,116.1 370.0,114.5 378.0,112.9 386.0,111.2 394.0,109.4 402.0,107.7 410.0,105.9 418.0,104.2 421.0,103.5 421.0,103.0 418.0,103.4 410.0,104.4 402.0,105.4 394.0,105.1 386.0,104.5 378.0,103.8 370.0,103.0 362.0,102.2 354.0,101.4 346.0,100.2 338.0,98.7 330.0,97.2 322.0,95.7 314.0,94.0 306.0,92.2 298.0,90.4 290.0,88.7 282.0,86.9 274.0,85.1 266.0,83.3 258.0,81.5 250.0,79.3 242.0,80.1 234.0,80.9 226.0,81.7 218.0,82.5 210.0,83.3 202.0,84.1 194.0,84.9 186.0,90.2 178.0,96.1 170.0,102.0 162.0,107.9 154.0,113.8 146.0,119.7 138.0,124.6 130.0,128.5 122.0,132.4 114.0,136.1 106.0,139.9 98.0,143.5 90.0,146.8 82.0,150.1 74.0,153.4 66.0,156.7 58.0,160.0 50.0,163.0" fill-opacity="0.138"/></g><g filter="url(#bl2)"><polygon points="173.0,90.0 193.0,66.0 240.0,34.0 282.0,2.0 290.0,-10.0 350.0,-10.0 320.0,30.0 280.0,66.0 240.0,90.0" fill="#2058e0" fill-opacity="0.18"/><polygon points="250.0,80.0 310.0,30.0 350.0,-5.0 400.0,-5.0 421.0,30.0 421.0,80.0 330.0,95.0" fill="#18a8f2" fill-opacity="0.12"/></g><g filter="url(#bm2)" fill="none" stroke="#2a28c8"><polyline points="70.0,159.9 80.0,158.2 90.0,156.5 100.0,154.8 110.0,153.0 120.0,151.2 130.0,149.3 140.0,147.3 150.0,145.1 160.0,142.8 170.0,140.5 180.0,138.2 190.0,136.0 200.0,134.4 210.0,133.1 220.0,131.8 230.0,130.5 240.0,129.2 250.0,127.9 260.0,127.1 270.0,125.8 280.0,124.6 290.0,123.3 300.0,122.1 310.0,120.8 320.0,119.6 330.0,118.3 340.0,117.0 350.0,115.7 360.0,114.1 370.0,112.5 380.0,110.9" stroke-width="1.5" stroke-opacity="0.45"/><polyline points="82.0,156.6 92.0,154.6 102.0,152.5 112.0,150.3 122.0,148.0 132.0,145.6 142.0,143.2 152.0,140.1 162.0,137.1 172.0,134.0 182.0,130.9 192.0,127.8 202.0,126.4 212.0,125.2 222.0,123.9 232.0,122.7 242.0,121.4 252.0,120.4 262.0,120.0 272.0,119.3 282.0,118.6 292.0,117.9 302.0,117.1 312.0,116.4 322.0,115.7 332.0,114.9 342.0,114.1 352.0,113.2" stroke-width="1.5" stroke-opacity="0.40"/><polyline points="94.0,152.5 104.0,150.0 114.0,147.3 124.0,144.6 134.0,141.8 144.0,138.7 154.0,134.9 164.0,131.0 174.0,127.1 184.0,123.3 194.0,119.7 204.0,118.5 214.0,117.3 224.0,116.1 234.0,114.9 244.0,113.7 254.0,113.0 264.0,113.1 274.0,113.0 284.0,112.8 294.0,112.6 304.0,112.4 314.0,112.2 324.0,112.0 334.0,111.7" stroke-width="1.5" stroke-opacity="0.35"/><polyline points="106.0,147.3 116.0,144.2 126.0,141.0 136.0,137.7 146.0,133.9 156.0,129.2 166.0,124.6 176.0,120.0 186.0,115.3 196.0,111.7 206.0,110.6 216.0,109.4 226.0,108.3 236.0,107.1 246.0,105.9 256.0,106.0 266.0,106.5 276.0,106.8 286.0,107.2 296.0,107.5 306.0,107.9" stroke-width="1.5" stroke-opacity="0.30"/><polyline points="118.0,140.9 128.0,137.2 138.0,133.5 148.0,128.8 158.0,123.3 168.0,117.9 178.0,112.5 188.0,107.0 198.0,103.8 208.0,102.7 218.0,101.6 228.0,100.5 238.0,99.3 248.0,98.2 258.0,99.1 268.0,100.0 278.0,100.9" stroke-width="1.5" stroke-opacity="0.25"/><polyline points="130.0,133.3 140.0,129.1 150.0,123.3 160.0,117.1 170.0,110.9 180.0,104.7 190.0,98.5 200.0,95.9 210.0,94.8 220.0,93.7 230.0,92.7 240.0,91.6 250.0,90.5 260.0,92.4" stroke-width="1.5" stroke-opacity="0.20"/></g><g filter="url(#bs2)" fill="#2828d0"><ellipse cx="274.5" cy="89.7" rx="0.7" ry="1.2" fill-opacity="0.09"/><ellipse cx="72.1" cy="157.5" rx="0.6" ry="1.3" fill-opacity="0.18"/><ellipse cx="198.2" cy="93.4" rx="0.6" ry="2.0" fill-opacity="0.22"/><ellipse cx="313.1" cy="121.6" rx="0.7" ry="1.6" fill-opacity="0.12"/><ellipse cx="394.3" cy="105.4" rx="0.9" ry="2.0" fill-opacity="0.26"/><ellipse cx="194.2" cy="141.4" rx="0.7" ry="1.7" fill-opacity="0.34"/><ellipse cx="61.0" cy="158.4" rx="0.7" ry="1.2" fill-opacity="0.17"/><ellipse cx="361.0" cy="108.3" rx="0.9" ry="1.7" fill-opacity="0.18"/><ellipse cx="68.5" cy="155.6" rx="0.8" ry="1.4" fill-opacity="0.10"/><ellipse cx="245.6" cy="102.6" rx="1.0" ry="1.7" fill-opacity="0.19"/><ellipse cx="300.9" cy="125.2" rx="1.0" ry="1.7" fill-opacity="0.39"/><ellipse cx="361.9" cy="104.3" rx="0.7" ry="1.7" fill-opacity="0.16"/><ellipse cx="168.4" cy="131.2" rx="0.7" ry="1.9" fill-opacity="0.27"/><ellipse cx="294.7" cy="99.2" rx="0.9" ry="1.6" fill-opacity="0.19"/><ellipse cx="326.1" cy="120.7" rx="0.9" ry="1.8" fill-opacity="0.16"/><ellipse cx="160.4" cy="120.7" rx="0.9" ry="1.8" fill-opacity="0.25"/><ellipse cx="267.0" cy="131.6" rx="0.9" ry="1.8" fill-opacity="0.34"/><ellipse cx="274.8" cy="99.8" rx="0.6" ry="2.0" fill-opacity="0.12"/><ellipse cx="112.3" cy="142.1" rx="0.9" ry="2.3" fill-opacity="0.15"/><ellipse cx="388.6" cy="106.2" rx="0.9" ry="2.2" fill-opacity="0.26"/><ellipse cx="81.9" cy="153.7" rx="0.8" ry="2.0" fill-opacity="0.17"/><ellipse cx="391.4" cy="108.1" rx="0.9" ry="1.4" fill-opacity="0.14"/><ellipse cx="92.8" cy="146.4" rx="0.6" ry="1.5" fill-opacity="0.19"/><ellipse cx="166.4" cy="107.6" rx="0.9" ry="1.7" fill-opacity="0.17"/><ellipse cx="347.1" cy="107.3" rx="1.0" ry="1.6" fill-opacity="0.20"/><ellipse cx="142.0" cy="149.6" rx="0.9" ry="1.6" fill-opacity="0.12"/><ellipse cx="253.1" cy="100.8" rx="0.6" ry="1.6" fill-opacity="0.26"/><ellipse cx="261.6" cy="131.8" rx="0.9" ry="1.5" fill-opacity="0.23"/><ellipse cx="397.3" cy="104.5" rx="0.6" ry="1.3" fill-opacity="0.16"/><ellipse cx="200.9" cy="135.7" rx="0.7" ry="2.3" fill-opacity="0.17"/><ellipse cx="274.9" cy="112.9" rx="0.7" ry="1.7" fill-opacity="0.24"/><ellipse cx="94.7" cy="150.2" rx="0.6" ry="1.2" fill-opacity="0.12"/><ellipse cx="178.5" cy="131.3" rx="0.8" ry="1.4" fill-opacity="0.30"/><ellipse cx="241.8" cy="89.0" rx="0.8" ry="1.5" fill-opacity="0.23"/><ellipse cx="261.1" cy="122.2" rx="0.8" ry="1.8" fill-opacity="0.29"/><ellipse cx="111.7" cy="138.6" rx="0.8" ry="1.8" fill-opacity="0.08"/><ellipse cx="130.6" cy="135.0" rx="0.8" ry="1.9" fill-opacity="0.19"/><ellipse cx="190.7" cy="142.3" rx="0.6" ry="2.2" fill-opacity="0.28"/><ellipse cx="351.9" cy="106.2" rx="0.9" ry="1.6" fill-opacity="0.22"/><ellipse cx="244.3" cy="112.1" rx="0.8" ry="2.0" fill-opacity="0.29"/><ellipse cx="375.4" cy="103.5" rx="0.6" ry="1.9" fill-opacity="0.12"/><ellipse cx="132.9" cy="140.7" rx="0.6" ry="1.3" fill-opacity="0.25"/><ellipse cx="344.4" cy="109.9" rx="0.9" ry="2.3" fill-opacity="0.13"/><ellipse cx="148.1" cy="136.9" rx="0.7" ry="2.1" fill-opacity="0.21"/><ellipse cx="153.9" cy="116.2" rx="0.7" ry="1.9" fill-opacity="0.18"/><ellipse cx="354.1" cy="115.5" rx="0.7" ry="2.4" fill-opacity="0.26"/><ellipse cx="166.7" cy="130.9" rx="0.8" ry="1.9" fill-opacity="0.15"/><ellipse cx="231.8" cy="136.1" rx="0.9" ry="2.1" fill-opacity="0.16"/><ellipse cx="135.8" cy="132.8" rx="0.9" ry="1.4" fill-opacity="0.20"/><ellipse cx="196.4" cy="141.1" rx="0.9" ry="1.4" fill-opacity="0.24"/><ellipse cx="127.3" cy="138.4" rx="0.8" ry="2.3" fill-opacity="0.09"/><ellipse cx="217.7" cy="107.0" rx="0.6" ry="2.0" fill-opacity="0.09"/><ellipse cx="263.7" cy="131.2" rx="0.6" ry="2.0" fill-opacity="0.37"/><ellipse cx="272.0" cy="129.0" rx="0.9" ry="1.3" fill-opacity="0.35"/><ellipse cx="156.7" cy="128.7" rx="0.6" ry="1.4" fill-opacity="0.20"/><ellipse cx="252.7" cy="113.5" rx="0.7" ry="1.6" fill-opacity="0.18"/><ellipse cx="208.0" cy="136.7" rx="1.0" ry="1.5" fill-opacity="0.14"/><ellipse cx="122.6" cy="149.4" rx="0.7" ry="1.7" fill-opacity="0.33"/><ellipse cx="160.7" cy="140.8" rx="0.9" ry="2.2" fill-opacity="0.23"/><ellipse cx="325.9" cy="117.4" rx="0.9" ry="2.0" fill-opacity="0.12"/><ellipse cx="278.2" cy="117.7" rx="0.9" ry="2.3" fill-opacity="0.25"/><ellipse cx="206.8" cy="94.1" rx="0.7" ry="1.3" fill-opacity="0.17"/><ellipse cx="376.7" cy="107.0" rx="0.9" ry="2.0" fill-opacity="0.24"/><ellipse cx="363.5" cy="102.0" rx="0.8" ry="2.2" fill-opacity="0.15"/><ellipse cx="195.3" cy="131.6" rx="0.7" ry="1.5" fill-opacity="0.15"/><ellipse cx="326.2" cy="107.4" rx="0.9" ry="1.4" fill-opacity="0.21"/><ellipse cx="106.5" cy="151.6" rx="0.7" ry="2.2" fill-opacity="0.34"/><ellipse cx="142.8" cy="148.4" rx="0.8" ry="2.3" fill-opacity="0.18"/><ellipse cx="347.5" cy="107.0" rx="0.6" ry="2.3" fill-opacity="0.09"/><ellipse cx="104.8" cy="152.1" rx="0.7" ry="1.8" fill-opacity="0.25"/><ellipse cx="223.7" cy="83.3" rx="1.0" ry="1.6" fill-opacity="0.18"/><ellipse cx="339.6" cy="112.0" rx="1.0" ry="2.2" fill-opacity="0.21"/><ellipse cx="283.7" cy="124.9" rx="0.7" ry="1.8" fill-opacity="0.28"/><ellipse cx="65.6" cy="156.2" rx="0.8" ry="1.3" fill-opacity="0.22"/><ellipse cx="242.8" cy="125.4" rx="0.8" ry="1.2" fill-opacity="0.14"/><ellipse cx="403.8" cy="105.5" rx="0.8" ry="1.9" fill-opacity="0.20"/><ellipse cx="115.3" cy="151.5" rx="0.6" ry="2.3" fill-opacity="0.35"/><ellipse cx="173.1" cy="144.3" rx="1.0" ry="1.7" fill-opacity="0.32"/><ellipse cx="153.8" cy="147.3" rx="0.7" ry="1.2" fill-opacity="0.35"/><ellipse cx="78.9" cy="158.2" rx="0.6" ry="1.6" fill-opacity="0.23"/><ellipse cx="142.8" cy="122.9" rx="0.8" ry="1.6" fill-opacity="0.11"/><ellipse cx="147.5" cy="134.2" rx="0.7" ry="2.2" fill-opacity="0.17"/><ellipse cx="142.7" cy="134.1" rx="0.8" ry="1.8" fill-opacity="0.25"/><ellipse cx="256.2" cy="120.2" rx="1.0" ry="1.5" fill-opacity="0.30"/><ellipse cx="341.9" cy="106.7" rx="0.8" ry="1.7" fill-opacity="0.12"/><ellipse cx="367.3" cy="113.5" rx="0.7" ry="1.4" fill-opacity="0.21"/><ellipse cx="265.7" cy="98.5" rx="0.6" ry="2.4" fill-opacity="0.18"/><ellipse cx="279.6" cy="112.9" rx="1.0" ry="2.0" fill-opacity="0.28"/><ellipse cx="279.9" cy="95.8" rx="0.7" ry="1.5" fill-opacity="0.23"/><ellipse cx="80.4" cy="152.9" rx="0.7" ry="2.1" fill-opacity="0.15"/><ellipse cx="283.2" cy="117.8" rx="0.6" ry="2.0" fill-opacity="0.18"/><ellipse cx="177.7" cy="98.0" rx="0.9" ry="1.9" fill-opacity="0.10"/><ellipse cx="398.4" cy="106.4" rx="0.6" ry="1.4" fill-opacity="0.33"/><ellipse cx="105.0" cy="151.8" rx="0.9" ry="2.0" fill-opacity="0.36"/><ellipse cx="254.8" cy="116.3" rx="0.8" ry="2.3" fill-opacity="0.22"/><ellipse cx="101.6" cy="143.2" rx="0.9" ry="1.9" fill-opacity="0.07"/><ellipse cx="317.0" cy="101.9" rx="0.8" ry="2.1" fill-opacity="0.20"/><ellipse cx="132.7" cy="126.4" rx="1.0" ry="1.6" fill-opacity="0.18"/><ellipse cx="397.5" cy="107.1" rx="0.7" ry="2.2" fill-opacity="0.34"/><ellipse cx="76.5" cy="158.7" rx="0.9" ry="1.8" fill-opacity="0.37"/><ellipse cx="202.0" cy="95.7" rx="0.7" ry="1.7" fill-opacity="0.16"/><ellipse cx="210.4" cy="136.5" rx="0.9" ry="1.4" fill-opacity="0.38"/><ellipse cx="356.3" cy="108.3" rx="0.9" ry="1.5" fill-opacity="0.13"/><ellipse cx="80.3" cy="152.4" rx="0.8" ry="2.3" fill-opacity="0.12"/><ellipse cx="94.7" cy="154.6" rx="1.0" ry="2.4" fill-opacity="0.33"/><ellipse cx="93.3" cy="152.5" rx="0.8" ry="1.6" fill-opacity="0.10"/><ellipse cx="312.1" cy="120.0" rx="0.8" ry="2.1" fill-opacity="0.21"/><ellipse cx="318.5" cy="107.9" rx="0.8" ry="2.3" fill-opacity="0.09"/><ellipse cx="107.7" cy="150.5" rx="0.8" ry="2.0" fill-opacity="0.11"/><ellipse cx="93.2" cy="153.8" rx="0.9" ry="1.9" fill-opacity="0.11"/><ellipse cx="188.4" cy="121.2" rx="0.6" ry="1.3" fill-opacity="0.10"/><ellipse cx="385.8" cy="109.1" rx="1.0" ry="1.9" fill-opacity="0.32"/><ellipse cx="102.2" cy="151.2" rx="0.9" ry="2.2" fill-opacity="0.29"/><ellipse cx="141.6" cy="143.5" rx="0.6" ry="1.8" fill-opacity="0.33"/><ellipse cx="329.7" cy="102.4" rx="1.0" ry="1.8" fill-opacity="0.23"/><ellipse cx="73.7" cy="152.6" rx="0.9" ry="1.3" fill-opacity="0.19"/><ellipse cx="246.8" cy="107.3" rx="0.8" ry="1.2" fill-opacity="0.12"/><ellipse cx="122.0" cy="152.7" rx="0.8" ry="2.4" fill-opacity="0.20"/><ellipse cx="403.5" cy="105.8" rx="0.7" ry="2.0" fill-opacity="0.24"/><ellipse cx="140.6" cy="146.4" rx="0.9" ry="1.7" fill-opacity="0.26"/><ellipse cx="336.9" cy="115.0" rx="1.0" ry="1.6" fill-opacity="0.29"/><ellipse cx="132.1" cy="141.3" rx="0.7" ry="1.8" fill-opacity="0.31"/><ellipse cx="360.2" cy="113.1" rx="0.7" ry="2.3" fill-opacity="0.19"/><ellipse cx="177.7" cy="142.5" rx="0.8" ry="1.5" fill-opacity="0.38"/><ellipse cx="101.2" cy="150.3" rx="0.9" ry="1.9" fill-opacity="0.18"/><ellipse cx="337.0" cy="100.9" rx="0.9" ry="2.4" fill-opacity="0.10"/><ellipse cx="78.4" cy="152.6" rx="0.9" ry="1.4" fill-opacity="0.19"/><ellipse cx="179.7" cy="127.2" rx="0.8" ry="1.4" fill-opacity="0.19"/><ellipse cx="213.3" cy="126.2" rx="0.9" ry="2.1" fill-opacity="0.32"/><ellipse cx="213.0" cy="123.9" rx="0.8" ry="2.0" fill-opacity="0.24"/><ellipse cx="329.0" cy="118.1" rx="0.8" ry="1.5" fill-opacity="0.23"/><ellipse cx="258.5" cy="107.7" rx="0.6" ry="2.1" fill-opacity="0.09"/><ellipse cx="355.9" cy="108.2" rx="0.8" ry="2.4" fill-opacity="0.17"/><ellipse cx="145.0" cy="147.6" rx="1.0" ry="2.0" fill-opacity="0.22"/><ellipse cx="170.6" cy="136.0" rx="0.6" ry="1.2" fill-opacity="0.34"/><ellipse cx="119.5" cy="147.3" rx="0.8" ry="1.9" fill-opacity="0.18"/><ellipse cx="233.8" cy="122.6" rx="0.6" ry="1.7" fill-opacity="0.24"/><ellipse cx="305.2" cy="102.5" rx="0.8" ry="1.4" fill-opacity="0.18"/><ellipse cx="175.2" cy="144.4" rx="0.7" ry="1.8" fill-opacity="0.14"/><ellipse cx="337.6" cy="111.0" rx="0.6" ry="1.7" fill-opacity="0.16"/><ellipse cx="154.7" cy="146.4" rx="0.9" ry="2.2" fill-opacity="0.12"/><ellipse cx="367.6" cy="105.3" rx="1.0" ry="1.6" fill-opacity="0.16"/><ellipse cx="321.5" cy="104.6" rx="1.0" ry="2.0" fill-opacity="0.19"/><ellipse cx="224.3" cy="132.4" rx="0.7" ry="1.7" fill-opacity="0.25"/><ellipse cx="272.4" cy="92.3" rx="1.0" ry="2.4" fill-opacity="0.12"/><ellipse cx="385.6" cy="106.5" rx="0.9" ry="1.7" fill-opacity="0.10"/><ellipse cx="138.8" cy="143.7" rx="0.8" ry="2.1" fill-opacity="0.23"/><ellipse cx="394.7" cy="104.2" rx="0.8" ry="2.1" fill-opacity="0.17"/><ellipse cx="233.6" cy="123.7" rx="0.9" ry="2.2" fill-opacity="0.25"/><ellipse cx="266.7" cy="98.3" rx="1.0" ry="2.3" fill-opacity="0.15"/><ellipse cx="164.9" cy="142.3" rx="0.9" ry="2.4" fill-opacity="0.20"/><ellipse cx="362.8" cy="113.5" rx="0.8" ry="1.8" fill-opacity="0.22"/><ellipse cx="306.3" cy="108.3" rx="0.6" ry="1.7" fill-opacity="0.25"/><ellipse cx="248.7" cy="133.1" rx="0.8" ry="1.7" fill-opacity="0.14"/><ellipse cx="83.1" cy="150.0" rx="0.8" ry="1.6" fill-opacity="0.10"/><ellipse cx="380.1" cy="109.4" rx="0.6" ry="1.4" fill-opacity="0.11"/><ellipse cx="403.3" cy="105.6" rx="0.8" ry="1.2" fill-opacity="0.11"/><ellipse cx="385.6" cy="109.0" rx="1.0" ry="2.4" fill-opacity="0.26"/><ellipse cx="142.4" cy="140.1" rx="0.7" ry="1.4" fill-opacity="0.27"/><ellipse cx="349.2" cy="113.2" rx="0.6" ry="2.3" fill-opacity="0.22"/><ellipse cx="285.1" cy="125.9" rx="0.9" ry="1.5" fill-opacity="0.27"/><ellipse cx="182.4" cy="106.1" rx="0.8" ry="1.8" fill-opacity="0.11"/><ellipse cx="268.7" cy="124.2" rx="1.0" ry="2.2" fill-opacity="0.25"/><ellipse cx="389.5" cy="104.6" rx="0.9" ry="1.8" fill-opacity="0.14"/><ellipse cx="328.2" cy="99.8" rx="0.9" ry="1.7" fill-opacity="0.22"/><ellipse cx="130.1" cy="150.5" rx="1.0" ry="1.8" fill-opacity="0.31"/><ellipse cx="100.7" cy="142.7" rx="0.7" ry="1.7" fill-opacity="0.11"/><ellipse cx="260.6" cy="117.4" rx="0.9" ry="1.9" fill-opacity="0.32"/><ellipse cx="212.6" cy="119.1" rx="0.7" ry="1.2" fill-opacity="0.32"/><ellipse cx="385.9" cy="108.6" rx="0.9" ry="1.6" fill-opacity="0.22"/><ellipse cx="163.3" cy="124.6" rx="0.9" ry="1.4" fill-opacity="0.28"/><ellipse cx="69.2" cy="157.3" rx="0.6" ry="1.7" fill-opacity="0.24"/><ellipse cx="198.6" cy="119.4" rx="0.8" ry="2.0" fill-opacity="0.29"/><ellipse cx="254.1" cy="101.8" rx="0.7" ry="1.5" fill-opacity="0.23"/><ellipse cx="106.8" cy="140.9" rx="0.9" ry="2.1" fill-opacity="0.14"/><ellipse cx="275.0" cy="86.5" rx="0.9" ry="1.7" fill-opacity="0.16"/><ellipse cx="288.4" cy="122.7" rx="0.8" ry="2.0" fill-opacity="0.15"/><ellipse cx="231.1" cy="89.2" rx="0.8" ry="2.3" fill-opacity="0.11"/><ellipse cx="169.1" cy="118.0" rx="0.8" ry="1.7" fill-opacity="0.19"/><ellipse cx="162.1" cy="114.9" rx="1.0" ry="2.0" fill-opacity="0.12"/><ellipse cx="64.5" cy="157.4" rx="0.8" ry="1.7" fill-opacity="0.25"/><ellipse cx="113.9" cy="136.9" rx="0.9" ry="1.4" fill-opacity="0.21"/><ellipse cx="105.3" cy="146.0" rx="0.7" ry="2.3" fill-opacity="0.12"/><ellipse cx="105.1" cy="149.1" rx="0.9" ry="2.1" fill-opacity="0.25"/><ellipse cx="379.4" cy="103.9" rx="0.7" ry="1.8" fill-opacity="0.15"/><ellipse cx="323.3" cy="105.1" rx="1.0" ry="1.6" fill-opacity="0.23"/><ellipse cx="220.9" cy="107.7" rx="0.8" ry="2.1" fill-opacity="0.17"/><ellipse cx="351.7" cy="109.7" rx="0.7" ry="1.6" fill-opacity="0.15"/><ellipse cx="254.8" cy="122.3" rx="0.9" ry="2.2" fill-opacity="0.34"/><ellipse cx="394.1" cy="104.6" rx="0.7" ry="1.5" fill-opacity="0.10"/><ellipse cx="199.7" cy="99.9" rx="0.6" ry="2.3" fill-opacity="0.16"/><ellipse cx="296.2" cy="94.6" rx="0.8" ry="1.6" fill-opacity="0.20"/><ellipse cx="135.5" cy="149.9" rx="0.9" ry="1.6" fill-opacity="0.15"/><ellipse cx="272.4" cy="130.8" rx="0.7" ry="2.4" fill-opacity="0.37"/><ellipse cx="325.6" cy="107.8" rx="0.9" ry="2.2" fill-opacity="0.14"/><ellipse cx="245.0" cy="134.6" rx="0.9" ry="1.3" fill-opacity="0.27"/><ellipse cx="400.0" cy="105.3" rx="1.0" ry="1.9" fill-opacity="0.19"/><ellipse cx="243.6" cy="92.0" rx="0.7" ry="2.3" fill-opacity="0.22"/><ellipse cx="146.5" cy="138.9" rx="0.8" ry="2.2" fill-opacity="0.17"/><ellipse cx="168.0" cy="137.0" rx="1.0" ry="1.8" fill-opacity="0.19"/><ellipse cx="353.7" cy="113.9" rx="1.0" ry="2.0" fill-opacity="0.23"/><ellipse cx="238.5" cy="110.9" rx="0.9" ry="1.4" fill-opacity="0.28"/><ellipse cx="225.4" cy="125.2" rx="0.9" ry="1.8" fill-opacity="0.17"/><ellipse cx="362.9" cy="112.6" rx="0.7" ry="1.6" fill-opacity="0.26"/><ellipse cx="172.3" cy="108.0" rx="0.9" ry="1.4" fill-opacity="0.10"/><ellipse cx="284.4" cy="111.5" rx="1.0" ry="1.7" fill-opacity="0.30"/><ellipse cx="64.0" cy="157.9" rx="1.0" ry="2.0" fill-opacity="0.17"/><ellipse cx="404.2" cy="104.8" rx="0.6" ry="1.6" fill-opacity="0.23"/><ellipse cx="343.5" cy="102.2" rx="0.7" ry="2.3" fill-opacity="0.19"/><ellipse cx="191.3" cy="123.0" rx="0.8" ry="1.6" fill-opacity="0.18"/><ellipse cx="256.2" cy="118.1" rx="0.8" ry="2.2" fill-opacity="0.15"/><ellipse cx="121.2" cy="142.6" rx="0.9" ry="1.5" fill-opacity="0.17"/><ellipse cx="312.0" cy="112.5" rx="0.7" ry="1.2" fill-opacity="0.24"/><ellipse cx="158.2" cy="146.0" rx="0.9" ry="2.1" fill-opacity="0.26"/><ellipse cx="228.0" cy="132.8" rx="0.8" ry="1.5" fill-opacity="0.19"/><ellipse cx="91.4" cy="147.8" rx="0.9" ry="1.2" fill-opacity="0.20"/><ellipse cx="101.5" cy="142.9" rx="0.7" ry="1.9" fill-opacity="0.21"/><ellipse cx="247.3" cy="123.5" rx="0.9" ry="1.6" fill-opacity="0.16"/><ellipse cx="356.0" cy="112.1" rx="0.8" ry="1.8" fill-opacity="0.13"/><ellipse cx="324.5" cy="114.4" rx="0.8" ry="1.6" fill-opacity="0.19"/><ellipse cx="102.6" cy="143.0" rx="0.7" ry="1.5" fill-opacity="0.10"/><ellipse cx="398.2" cy="106.7" rx="0.8" ry="1.3" fill-opacity="0.21"/><ellipse cx="168.6" cy="131.2" rx="0.9" ry="1.3" fill-opacity="0.15"/><ellipse cx="283.2" cy="106.6" rx="0.7" ry="2.0" fill-opacity="0.15"/><ellipse cx="183.5" cy="110.7" rx="1.0" ry="2.0" fill-opacity="0.11"/><ellipse cx="340.4" cy="102.1" rx="0.8" ry="2.3" fill-opacity="0.15"/><ellipse cx="123.8" cy="149.8" rx="0.8" ry="1.7" fill-opacity="0.34"/><ellipse cx="248.2" cy="111.7" rx="0.8" ry="1.9" fill-opacity="0.31"/><ellipse cx="83.8" cy="157.6" rx="0.8" ry="1.9" fill-opacity="0.39"/><ellipse cx="88.2" cy="150.9" rx="0.8" ry="1.9" fill-opacity="0.11"/><ellipse cx="404.7" cy="104.3" rx="1.0" ry="1.3" fill-opacity="0.17"/><ellipse cx="149.4" cy="123.0" rx="1.0" ry="1.2" fill-opacity="0.14"/><ellipse cx="310.9" cy="123.7" rx="0.7" ry="1.6" fill-opacity="0.13"/><ellipse cx="251.8" cy="92.6" rx="0.7" ry="1.5" fill-opacity="0.11"/><ellipse cx="148.3" cy="136.4" rx="0.7" ry="1.3" fill-opacity="0.14"/><ellipse cx="345.3" cy="113.9" rx="0.9" ry="2.0" fill-opacity="0.34"/><ellipse cx="240.4" cy="132.5" rx="0.9" ry="1.7" fill-opacity="0.35"/><ellipse cx="276.4" cy="97.2" rx="0.9" ry="2.0" fill-opacity="0.15"/><ellipse cx="75.9" cy="156.9" rx="0.6" ry="2.3" fill-opacity="0.12"/><ellipse cx="168.9" cy="122.5" rx="0.7" ry="1.9" fill-opacity="0.19"/><ellipse cx="311.4" cy="120.7" rx="0.9" ry="1.5" fill-opacity="0.36"/><ellipse cx="227.3" cy="93.5" rx="0.9" ry="2.0" fill-opacity="0.11"/><ellipse cx="284.6" cy="103.6" rx="1.0" ry="1.4" fill-opacity="0.10"/><ellipse cx="150.3" cy="142.7" rx="0.7" ry="1.3" fill-opacity="0.20"/><ellipse cx="125.0" cy="141.7" rx="0.7" ry="1.8" fill-opacity="0.24"/><ellipse cx="318.3" cy="103.1" rx="0.6" ry="2.1" fill-opacity="0.22"/><ellipse cx="381.9" cy="108.4" rx="1.0" ry="2.3" fill-opacity="0.33"/><ellipse cx="374.6" cy="109.6" rx="0.9" ry="1.5" fill-opacity="0.34"/><ellipse cx="188.2" cy="94.3" rx="0.7" ry="2.1" fill-opacity="0.19"/><ellipse cx="218.1" cy="138.5" rx="1.0" ry="1.6" fill-opacity="0.38"/><ellipse cx="283.6" cy="115.5" rx="0.8" ry="1.2" fill-opacity="0.11"/><ellipse cx="246.9" cy="109.8" rx="0.9" ry="1.8" fill-opacity="0.21"/><ellipse cx="317.9" cy="97.9" rx="0.9" ry="1.8" fill-opacity="0.19"/><ellipse cx="81.9" cy="151.2" rx="0.9" ry="1.3" fill-opacity="0.09"/><ellipse cx="155.1" cy="139.1" rx="0.7" ry="1.5" fill-opacity="0.18"/><ellipse cx="376.4" cy="111.2" rx="1.0" ry="1.5" fill-opacity="0.35"/><ellipse cx="302.2" cy="118.3" rx="0.9" ry="1.7" fill-opacity="0.20"/><ellipse cx="116.6" cy="148.2" rx="0.8" ry="1.3" fill-opacity="0.14"/><ellipse cx="377.2" cy="111.0" rx="1.0" ry="1.4" fill-opacity="0.13"/><ellipse cx="320.7" cy="97.3" rx="0.6" ry="1.3" fill-opacity="0.21"/><ellipse cx="349.8" cy="116.5" rx="0.7" ry="1.4" fill-opacity="0.18"/><ellipse cx="287.5" cy="106.6" rx="0.9" ry="1.9" fill-opacity="0.13"/><ellipse cx="340.3" cy="116.7" rx="0.9" ry="1.9" fill-opacity="0.35"/><ellipse cx="182.3" cy="128.7" rx="0.6" ry="1.3" fill-opacity="0.19"/><ellipse cx="232.5" cy="136.7" rx="0.8" ry="2.1" fill-opacity="0.18"/><ellipse cx="112.2" cy="147.1" rx="0.9" ry="2.3" fill-opacity="0.26"/><ellipse cx="128.1" cy="138.3" rx="0.6" ry="1.4" fill-opacity="0.14"/><ellipse cx="280.8" cy="128.0" rx="0.8" ry="1.6" fill-opacity="0.26"/><ellipse cx="125.3" cy="143.5" rx="0.8" ry="1.2" fill-opacity="0.18"/><ellipse cx="357.0" cy="104.7" rx="0.8" ry="1.2" fill-opacity="0.20"/><ellipse cx="356.3" cy="102.5" rx="0.8" ry="2.2" fill-opacity="0.16"/><ellipse cx="339.6" cy="115.2" rx="0.9" ry="2.2" fill-opacity="0.32"/><ellipse cx="288.5" cy="93.9" rx="0.8" ry="2.2" fill-opacity="0.11"/><ellipse cx="163.7" cy="134.9" rx="1.0" ry="1.7" fill-opacity="0.28"/><ellipse cx="125.7" cy="131.5" rx="0.6" ry="1.8" fill-opacity="0.12"/><ellipse cx="88.6" cy="148.9" rx="0.7" ry="1.7" fill-opacity="0.08"/><ellipse cx="226.7" cy="87.9" rx="0.7" ry="2.0" fill-opacity="0.22"/><ellipse cx="143.0" cy="148.9" rx="1.0" ry="2.3" fill-opacity="0.24"/><ellipse cx="112.5" cy="153.8" rx="0.8" ry="2.0" fill-opacity="0.29"/><ellipse cx="235.7" cy="83.6" rx="0.9" ry="2.1" fill-opacity="0.09"/><ellipse cx="352.9" cy="115.7" rx="0.7" ry="2.3" fill-opacity="0.15"/><ellipse cx="122.6" cy="143.1" rx="0.7" ry="1.5" fill-opacity="0.12"/><ellipse cx="272.8" cy="118.2" rx="1.0" ry="1.4" fill-opacity="0.18"/><ellipse cx="121.5" cy="150.4" rx="0.9" ry="1.8" fill-opacity="0.32"/><ellipse cx="402.5" cy="104.6" rx="0.9" ry="2.2" fill-opacity="0.20"/><ellipse cx="312.6" cy="113.9" rx="0.7" ry="1.4" fill-opacity="0.21"/><ellipse cx="336.9" cy="111.6" rx="0.8" ry="1.9" fill-opacity="0.24"/><ellipse cx="184.4" cy="137.7" rx="0.9" ry="1.9" fill-opacity="0.36"/><ellipse cx="401.3" cy="106.2" rx="0.8" ry="1.7" fill-opacity="0.37"/><ellipse cx="147.9" cy="129.3" rx="0.8" ry="1.7" fill-opacity="0.18"/><ellipse cx="123.2" cy="143.6" rx="0.9" ry="2.4" fill-opacity="0.12"/><ellipse cx="229.3" cy="99.8" rx="0.7" ry="1.9" fill-opacity="0.16"/><ellipse cx="241.8" cy="132.6" rx="0.8" ry="1.7" fill-opacity="0.33"/><ellipse cx="104.5" cy="143.4" rx="0.7" ry="1.3" fill-opacity="0.23"/><ellipse cx="176.6" cy="128.4" rx="0.6" ry="1.4" fill-opacity="0.32"/><ellipse cx="105.9" cy="154.7" rx="0.7" ry="1.2" fill-opacity="0.29"/><ellipse cx="100.8" cy="153.1" rx="0.8" ry="1.4" fill-opacity="0.13"/><ellipse cx="287.9" cy="111.6" rx="0.6" ry="1.8" fill-opacity="0.21"/><ellipse cx="242.2" cy="131.7" rx="0.9" ry="2.3" fill-opacity="0.29"/><ellipse cx="241.3" cy="101.9" rx="0.7" ry="1.4" fill-opacity="0.25"/><ellipse cx="170.3" cy="136.2" rx="0.6" ry="1.8" fill-opacity="0.22"/><ellipse cx="358.5" cy="109.6" rx="1.0" ry="2.1" fill-opacity="0.20"/><ellipse cx="300.7" cy="123.8" rx="0.6" ry="1.5" fill-opacity="0.13"/><ellipse cx="118.5" cy="151.3" rx="0.7" ry="2.0" fill-opacity="0.23"/><ellipse cx="217.0" cy="132.4" rx="0.7" ry="1.7" fill-opacity="0.30"/><ellipse cx="171.2" cy="109.1" rx="0.8" ry="2.3" fill-opacity="0.22"/><ellipse cx="72.5" cy="159.2" rx="0.6" ry="2.3" fill-opacity="0.32"/><ellipse cx="92.0" cy="154.2" rx="0.8" ry="1.3" fill-opacity="0.26"/><ellipse cx="200.6" cy="139.8" rx="0.7" ry="2.1" fill-opacity="0.34"/><ellipse cx="206.8" cy="138.9" rx="0.7" ry="1.6" fill-opacity="0.35"/><ellipse cx="282.3" cy="123.8" rx="0.6" ry="2.0" fill-opacity="0.33"/><ellipse cx="319.9" cy="104.4" rx="0.7" ry="1.3" fill-opacity="0.24"/><ellipse cx="389.1" cy="105.4" rx="0.6" ry="2.3" fill-opacity="0.25"/><ellipse cx="254.2" cy="128.6" rx="0.8" ry="1.3" fill-opacity="0.37"/><ellipse cx="143.7" cy="137.2" rx="0.8" ry="1.3" fill-opacity="0.27"/><ellipse cx="267.2" cy="92.4" rx="0.9" ry="2.0" fill-opacity="0.15"/><ellipse cx="194.3" cy="124.7" rx="0.7" ry="1.7" fill-opacity="0.19"/><ellipse cx="217.2" cy="83.5" rx="0.7" ry="2.1" fill-opacity="0.08"/><ellipse cx="344.6" cy="116.9" rx="0.7" ry="1.6" fill-opacity="0.14"/><ellipse cx="243.7" cy="100.3" rx="0.6" ry="2.3" fill-opacity="0.16"/><ellipse cx="236.3" cy="126.6" rx="0.8" ry="1.3" fill-opacity="0.36"/><ellipse cx="324.3" cy="101.6" rx="0.8" ry="1.4" fill-opacity="0.18"/><ellipse cx="311.9" cy="103.5" rx="0.9" ry="1.5" fill-opacity="0.19"/><ellipse cx="65.8" cy="156.0" rx="1.0" ry="2.3" fill-opacity="0.14"/><ellipse cx="104.3" cy="147.3" rx="0.6" ry="1.7" fill-opacity="0.19"/><ellipse cx="113.0" cy="147.6" rx="0.7" ry="2.3" fill-opacity="0.12"/><ellipse cx="242.1" cy="134.3" rx="0.7" ry="1.4" fill-opacity="0.15"/><ellipse cx="135.6" cy="143.9" rx="0.7" ry="1.5" fill-opacity="0.21"/><ellipse cx="241.1" cy="104.8" rx="0.9" ry="1.5" fill-opacity="0.27"/><ellipse cx="114.0" cy="141.8" rx="0.8" ry="1.8" fill-opacity="0.23"/><ellipse cx="206.6" cy="135.4" rx="0.8" ry="1.7" fill-opacity="0.32"/><ellipse cx="322.5" cy="110.1" rx="0.7" ry="1.9" fill-opacity="0.16"/><ellipse cx="381.3" cy="110.4" rx="0.9" ry="2.3" fill-opacity="0.33"/><ellipse cx="351.3" cy="116.7" rx="0.8" ry="2.4" fill-opacity="0.27"/><ellipse cx="121.2" cy="143.5" rx="0.8" ry="1.6" fill-opacity="0.26"/><ellipse cx="304.9" cy="124.4" rx="0.6" ry="2.0" fill-opacity="0.18"/><ellipse cx="357.8" cy="107.2" rx="0.9" ry="2.3" fill-opacity="0.09"/><ellipse cx="235.0" cy="94.0" rx="0.8" ry="1.9" fill-opacity="0.15"/><ellipse cx="398.4" cy="106.1" rx="0.8" ry="2.4" fill-opacity="0.25"/><ellipse cx="294.6" cy="125.3" rx="1.0" ry="2.4" fill-opacity="0.14"/><ellipse cx="180.7" cy="134.2" rx="0.8" ry="1.4" fill-opacity="0.36"/><ellipse cx="404.7" cy="104.8" rx="0.7" ry="1.8" fill-opacity="0.15"/><ellipse cx="153.4" cy="118.4" rx="0.7" ry="2.3" fill-opacity="0.09"/><ellipse cx="374.2" cy="111.2" rx="1.0" ry="1.9" fill-opacity="0.22"/><ellipse cx="133.6" cy="140.5" rx="0.9" ry="2.0" fill-opacity="0.24"/><ellipse cx="339.4" cy="118.3" rx="1.0" ry="2.2" fill-opacity="0.13"/><ellipse cx="372.8" cy="110.8" rx="0.6" ry="1.5" fill-opacity="0.12"/><ellipse cx="94.1" cy="149.0" rx="0.8" ry="1.9" fill-opacity="0.08"/><ellipse cx="137.8" cy="144.0" rx="0.7" ry="1.6" fill-opacity="0.20"/><ellipse cx="89.4" cy="153.5" rx="0.6" ry="1.5" fill-opacity="0.25"/><ellipse cx="72.6" cy="157.4" rx="1.0" ry="2.2" fill-opacity="0.16"/><ellipse cx="68.3" cy="155.4" rx="1.0" ry="1.4" fill-opacity="0.12"/><ellipse cx="193.4" cy="134.1" rx="0.9" ry="1.7" fill-opacity="0.29"/><ellipse cx="125.1" cy="137.9" rx="0.6" ry="1.3" fill-opacity="0.22"/><ellipse cx="402.3" cy="105.7" rx="1.0" ry="1.9" fill-opacity="0.23"/><ellipse cx="186.1" cy="127.5" rx="0.9" ry="1.3" fill-opacity="0.28"/><ellipse cx="234.2" cy="110.8" rx="0.7" ry="1.4" fill-opacity="0.30"/><ellipse cx="106.7" cy="148.0" rx="0.7" ry="1.3" fill-opacity="0.14"/><ellipse cx="234.9" cy="103.4" rx="0.7" ry="1.6" fill-opacity="0.18"/><ellipse cx="185.4" cy="108.3" rx="0.8" ry="2.2" fill-opacity="0.19"/><ellipse cx="198.3" cy="91.0" rx="0.6" ry="1.3" fill-opacity="0.18"/><ellipse cx="364.7" cy="111.1" rx="0.7" ry="2.1" fill-opacity="0.29"/><ellipse cx="87.0" cy="156.4" rx="0.7" ry="1.8" fill-opacity="0.31"/><ellipse cx="364.2" cy="103.1" rx="0.8" ry="1.9" fill-opacity="0.13"/><ellipse cx="259.1" cy="132.6" rx="0.9" ry="2.3" fill-opacity="0.23"/><ellipse cx="72.7" cy="158.4" rx="1.0" ry="1.5" fill-opacity="0.12"/><ellipse cx="237.2" cy="93.6" rx="0.8" ry="2.2" fill-opacity="0.15"/><ellipse cx="227.5" cy="110.5" rx="1.0" ry="2.0" fill-opacity="0.16"/><ellipse cx="137.6" cy="148.1" rx="0.9" ry="1.3" fill-opacity="0.14"/><ellipse cx="272.2" cy="129.9" rx="0.9" ry="1.3" fill-opacity="0.17"/><ellipse cx="208.2" cy="93.2" rx="0.9" ry="1.5" fill-opacity="0.15"/><ellipse cx="153.1" cy="140.5" rx="0.9" ry="2.0" fill-opacity="0.29"/><ellipse cx="79.1" cy="157.9" rx="0.9" ry="1.5" fill-opacity="0.32"/><ellipse cx="218.6" cy="127.2" rx="0.9" ry="1.5" fill-opacity="0.18"/><ellipse cx="279.1" cy="106.1" rx="0.7" ry="1.2" fill-opacity="0.28"/><ellipse cx="237.3" cy="130.7" rx="0.7" ry="1.3" fill-opacity="0.38"/><ellipse cx="176.5" cy="115.0" rx="0.6" ry="1.9" fill-opacity="0.11"/><ellipse cx="288.9" cy="90.4" rx="1.0" ry="1.5" fill-opacity="0.20"/><ellipse cx="125.8" cy="148.9" rx="0.9" ry="1.9" fill-opacity="0.28"/><ellipse cx="375.4" cy="110.0" rx="0.8" ry="1.9" fill-opacity="0.15"/><ellipse cx="158.2" cy="141.6" rx="0.9" ry="1.6" fill-opacity="0.24"/><ellipse cx="355.1" cy="105.0" rx="0.9" ry="1.9" fill-opacity="0.23"/><ellipse cx="136.5" cy="133.5" rx="0.8" ry="1.3" fill-opacity="0.19"/><ellipse cx="333.2" cy="117.8" rx="0.7" ry="1.3" fill-opacity="0.29"/><ellipse cx="144.1" cy="147.1" rx="0.7" ry="1.4" fill-opacity="0.23"/><ellipse cx="218.2" cy="93.3" rx="0.7" ry="2.0" fill-opacity="0.13"/><ellipse cx="200.6" cy="140.7" rx="0.6" ry="2.1" fill-opacity="0.21"/><ellipse cx="278.3" cy="116.1" rx="0.9" ry="1.6" fill-opacity="0.13"/><ellipse cx="70.8" cy="153.9" rx="0.7" ry="2.2" fill-opacity="0.08"/><ellipse cx="233.4" cy="136.5" rx="0.8" ry="1.7" fill-opacity="0.36"/><ellipse cx="149.1" cy="129.9" rx="1.0" ry="2.2" fill-opacity="0.13"/><ellipse cx="353.6" cy="115.0" rx="0.7" ry="2.1" fill-opacity="0.37"/><ellipse cx="110.3" cy="137.1" rx="1.0" ry="1.5" fill-opacity="0.10"/><ellipse cx="161.9" cy="140.4" rx="0.8" ry="1.6" fill-opacity="0.13"/><ellipse cx="331.0" cy="120.1" rx="1.0" ry="1.7" fill-opacity="0.34"/><ellipse cx="94.6" cy="152.8" rx="0.7" ry="1.5" fill-opacity="0.16"/><ellipse cx="167.7" cy="132.7" rx="0.9" ry="1.6" fill-opacity="0.29"/><ellipse cx="74.1" cy="158.0" rx="1.0" ry="2.2" fill-opacity="0.18"/><ellipse cx="401.3" cy="106.1" rx="0.9" ry="1.9" fill-opacity="0.19"/><ellipse cx="240.2" cy="96.8" rx="0.7" ry="1.5" fill-opacity="0.16"/><ellipse cx="187.1" cy="65.3" rx="0.9" ry="2.5" fill-opacity="0.19"/><ellipse cx="198.1" cy="83.1" rx="0.8" ry="1.6" fill-opacity="0.34"/><ellipse cx="182.7" cy="85.4" rx="1.0" ry="1.5" fill-opacity="0.33"/><ellipse cx="175.9" cy="80.3" rx="0.6" ry="2.0" fill-opacity="0.19"/><ellipse cx="246.5" cy="54.6" rx="0.7" ry="1.7" fill-opacity="0.28"/><ellipse cx="167.7" cy="73.4" rx="0.9" ry="2.0" fill-opacity="0.24"/><ellipse cx="169.7" cy="97.6" rx="0.7" ry="1.7" fill-opacity="0.15"/><ellipse cx="246.7" cy="49.2" rx="0.9" ry="2.4" fill-opacity="0.27"/><ellipse cx="192.0" cy="78.6" rx="0.8" ry="2.4" fill-opacity="0.20"/><ellipse cx="301.2" cy="23.0" rx="0.7" ry="1.7" fill-opacity="0.19"/><ellipse cx="204.3" cy="78.4" rx="0.8" ry="2.1" fill-opacity="0.10"/><ellipse cx="202.9" cy="62.1" rx="0.8" ry="2.4" fill-opacity="0.33"/><ellipse cx="173.0" cy="82.5" rx="0.7" ry="2.0" fill-opacity="0.21"/><ellipse cx="216.3" cy="56.3" rx="0.9" ry="1.7" fill-opacity="0.18"/><ellipse cx="316.4" cy="16.4" rx="0.8" ry="2.6" fill-opacity="0.24"/><ellipse cx="234.4" cy="42.2" rx="0.8" ry="1.4" fill-opacity="0.22"/><ellipse cx="182.4" cy="72.2" rx="1.0" ry="1.7" fill-opacity="0.19"/><ellipse cx="263.7" cy="34.8" rx="0.7" ry="2.3" fill-opacity="0.12"/><ellipse cx="175.5" cy="78.6" rx="0.9" ry="2.5" fill-opacity="0.28"/><ellipse cx="246.5" cy="47.5" rx="0.7" ry="2.2" fill-opacity="0.27"/><ellipse cx="169.0" cy="82.3" rx="0.6" ry="2.0" fill-opacity="0.13"/><ellipse cx="221.1" cy="59.9" rx="0.8" ry="2.0" fill-opacity="0.18"/><ellipse cx="292.0" cy="29.8" rx="1.0" ry="2.4" fill-opacity="0.31"/><ellipse cx="314.7" cy="6.6" rx="0.7" ry="1.9" fill-opacity="0.26"/><ellipse cx="165.6" cy="89.4" rx="0.7" ry="2.1" fill-opacity="0.20"/><ellipse cx="231.0" cy="52.6" rx="1.0" ry="2.1" fill-opacity="0.28"/><ellipse cx="207.8" cy="74.1" rx="0.9" ry="1.7" fill-opacity="0.16"/><ellipse cx="212.4" cy="76.0" rx="0.8" ry="2.5" fill-opacity="0.13"/><ellipse cx="309.8" cy="16.3" rx="0.8" ry="2.2" fill-opacity="0.34"/><ellipse cx="247.2" cy="42.0" rx="0.6" ry="1.7" fill-opacity="0.31"/><ellipse cx="253.3" cy="28.9" rx="0.9" ry="2.5" fill-opacity="0.24"/><ellipse cx="220.3" cy="51.0" rx="0.8" ry="2.4" fill-opacity="0.17"/><ellipse cx="199.2" cy="67.3" rx="1.0" ry="2.2" fill-opacity="0.27"/><ellipse cx="285.7" cy="20.1" rx="0.6" ry="1.5" fill-opacity="0.30"/><ellipse cx="239.4" cy="56.1" rx="0.8" ry="2.3" fill-opacity="0.12"/><ellipse cx="309.4" cy="7.5" rx="0.9" ry="1.8" fill-opacity="0.25"/><ellipse cx="201.8" cy="71.6" rx="0.9" ry="2.6" fill-opacity="0.13"/><ellipse cx="249.5" cy="43.9" rx="0.7" ry="2.2" fill-opacity="0.28"/><ellipse cx="227.4" cy="58.3" rx="1.0" ry="1.6" fill-opacity="0.23"/><ellipse cx="178.8" cy="74.6" rx="1.0" ry="2.4" fill-opacity="0.18"/><ellipse cx="215.3" cy="54.6" rx="0.9" ry="1.8" fill-opacity="0.22"/><ellipse cx="187.5" cy="77.4" rx="0.9" ry="1.9" fill-opacity="0.16"/><ellipse cx="286.4" cy="8.5" rx="0.7" ry="1.5" fill-opacity="0.23"/><ellipse cx="165.9" cy="87.6" rx="1.0" ry="2.5" fill-opacity="0.21"/><ellipse cx="274.9" cy="39.9" rx="1.0" ry="1.5" fill-opacity="0.28"/><ellipse cx="192.6" cy="82.1" rx="0.8" ry="1.7" fill-opacity="0.32"/><ellipse cx="216.9" cy="67.1" rx="0.9" ry="1.6" fill-opacity="0.26"/><ellipse cx="214.1" cy="59.2" rx="0.7" ry="1.5" fill-opacity="0.26"/><ellipse cx="295.4" cy="11.4" rx="0.9" ry="1.8" fill-opacity="0.31"/><ellipse cx="293.9" cy="24.4" rx="0.8" ry="1.7" fill-opacity="0.21"/><ellipse cx="159.4" cy="79.2" rx="0.8" ry="1.5" fill-opacity="0.16"/><ellipse cx="161.1" cy="81.7" rx="0.8" ry="1.5" fill-opacity="0.32"/><ellipse cx="230.5" cy="47.9" rx="0.9" ry="2.1" fill-opacity="0.20"/><ellipse cx="214.1" cy="59.7" rx="0.6" ry="1.5" fill-opacity="0.16"/><ellipse cx="227.3" cy="55.9" rx="0.9" ry="2.5" fill-opacity="0.13"/><ellipse cx="310.4" cy="11.1" rx="0.8" ry="2.1" fill-opacity="0.22"/><ellipse cx="256.5" cy="23.2" rx="0.6" ry="1.4" fill-opacity="0.20"/><ellipse cx="236.5" cy="44.8" rx="0.6" ry="2.0" fill-opacity="0.30"/><ellipse cx="157.3" cy="98.5" rx="0.8" ry="1.9" fill-opacity="0.13"/><ellipse cx="220.4" cy="50.6" rx="0.9" ry="1.7" fill-opacity="0.14"/><ellipse cx="255.7" cy="50.0" rx="0.6" ry="1.7" fill-opacity="0.30"/><ellipse cx="268.8" cy="41.8" rx="0.8" ry="1.8" fill-opacity="0.11"/><ellipse cx="221.0" cy="64.8" rx="0.6" ry="2.0" fill-opacity="0.28"/><ellipse cx="175.6" cy="83.7" rx="0.8" ry="1.7" fill-opacity="0.10"/><ellipse cx="313.2" cy="7.4" rx="0.9" ry="1.7" fill-opacity="0.15"/><ellipse cx="294.4" cy="15.8" rx="0.9" ry="2.2" fill-opacity="0.28"/><ellipse cx="196.4" cy="84.1" rx="0.7" ry="1.7" fill-opacity="0.30"/><ellipse cx="243.4" cy="45.7" rx="0.7" ry="2.0" fill-opacity="0.10"/><ellipse cx="326.5" cy="8.2" rx="1.0" ry="1.8" fill-opacity="0.28"/><ellipse cx="274.5" cy="33.6" rx="0.6" ry="2.6" fill-opacity="0.18"/><ellipse cx="236.3" cy="47.4" rx="0.9" ry="2.3" fill-opacity="0.15"/><ellipse cx="302.1" cy="24.3" rx="0.9" ry="1.6" fill-opacity="0.29"/><ellipse cx="217.2" cy="55.5" rx="1.0" ry="1.5" fill-opacity="0.13"/><ellipse cx="299.7" cy="19.5" rx="0.7" ry="2.1" fill-opacity="0.33"/><ellipse cx="242.9" cy="44.9" rx="0.7" ry="2.5" fill-opacity="0.20"/><ellipse cx="294.6" cy="19.7" rx="0.9" ry="2.4" fill-opacity="0.20"/><ellipse cx="170.5" cy="73.3" rx="0.7" ry="1.8" fill-opacity="0.16"/><ellipse cx="293.0" cy="28.5" rx="0.8" ry="2.4" fill-opacity="0.31"/><ellipse cx="297.9" cy="26.6" rx="0.7" ry="1.6" fill-opacity="0.12"/><ellipse cx="196.3" cy="86.8" rx="0.7" ry="2.1" fill-opacity="0.19"/><ellipse cx="175.4" cy="94.7" rx="1.0" ry="2.6" fill-opacity="0.19"/><ellipse cx="203.2" cy="60.5" rx="0.6" ry="1.9" fill-opacity="0.34"/><ellipse cx="212.6" cy="67.6" rx="0.9" ry="1.8" fill-opacity="0.13"/><ellipse cx="254.3" cy="48.2" rx="0.8" ry="1.6" fill-opacity="0.14"/><ellipse cx="209.4" cy="53.7" rx="0.9" ry="1.4" fill-opacity="0.20"/><ellipse cx="222.1" cy="53.2" rx="0.9" ry="1.5" fill-opacity="0.27"/><ellipse cx="170.5" cy="82.4" rx="0.9" ry="2.1" fill-opacity="0.14"/><ellipse cx="330.1" cy="7.5" rx="0.7" ry="1.5" fill-opacity="0.14"/><ellipse cx="231.9" cy="48.5" rx="0.7" ry="2.6" fill-opacity="0.12"/><ellipse cx="223.9" cy="47.9" rx="1.0" ry="2.4" fill-opacity="0.11"/><ellipse cx="237.2" cy="43.2" rx="1.0" ry="2.6" fill-opacity="0.15"/><ellipse cx="160.0" cy="98.2" rx="0.7" ry="1.8" fill-opacity="0.27"/><ellipse cx="236.8" cy="36.3" rx="0.9" ry="2.1" fill-opacity="0.13"/><ellipse cx="289.2" cy="25.4" rx="1.0" ry="2.5" fill-opacity="0.13"/><ellipse cx="290.8" cy="13.0" rx="0.9" ry="2.5" fill-opacity="0.32"/><ellipse cx="278.9" cy="29.0" rx="0.7" ry="2.2" fill-opacity="0.34"/><ellipse cx="196.5" cy="78.4" rx="0.9" ry="2.3" fill-opacity="0.29"/><ellipse cx="249.3" cy="55.0" rx="0.8" ry="2.0" fill-opacity="0.15"/><ellipse cx="241.8" cy="30.3" rx="0.6" ry="1.8" fill-opacity="0.18"/><ellipse cx="234.2" cy="42.1" rx="0.8" ry="1.8" fill-opacity="0.22"/><ellipse cx="235.8" cy="45.0" rx="0.9" ry="1.7" fill-opacity="0.20"/><ellipse cx="213.1" cy="59.4" rx="0.9" ry="2.4" fill-opacity="0.33"/><ellipse cx="267.1" cy="27.7" rx="0.7" ry="2.5" fill-opacity="0.15"/><ellipse cx="160.6" cy="84.8" rx="0.7" ry="2.5" fill-opacity="0.33"/><ellipse cx="179.4" cy="80.0" rx="0.9" ry="1.8" fill-opacity="0.25"/><ellipse cx="165.0" cy="88.3" rx="1.0" ry="1.7" fill-opacity="0.35"/><ellipse cx="190.3" cy="74.5" rx="0.7" ry="2.4" fill-opacity="0.14"/><ellipse cx="230.7" cy="46.5" rx="0.8" ry="1.8" fill-opacity="0.17"/></g><g filter="url(#bs2)"><polygon points="240,177.2 320,175.2 421,169.8 421,172.6 320,176.6 240,177.8" fill="#2a48d8" fill-opacity="0.35"/><polyline points="300,175.6 360,173.4 421,170.4" fill="none" stroke="#3020c0" stroke-width="2.4" stroke-opacity="0.85"/><polyline points="350,173.8 400,171.6 421,170.4" fill="none" stroke="#d03080" stroke-width="1.4" stroke-opacity="0.9"/><polyline points="385,172.2 421,170.4" fill="none" stroke="#d8c840" stroke-width="1.1"/><polyline points="400,171.4 421,170.4" fill="none" stroke="#80f080" stroke-width="0.5"/></g><g filter="url(#bs2)"><ellipse cx="58.0" cy="161.2" rx="1.0" ry="1.3" fill="#3010a8"/><ellipse cx="64.8" cy="159.9" rx="1.0" ry="1.3" fill="#3010a8"/><ellipse cx="70.8" cy="159.3" rx="1.0" ry="1.3" fill="#3010a8"/><ellipse cx="77.4" cy="158.6" rx="1.0" ry="1.3" fill="#3010a8"/><ellipse cx="83.0" cy="157.4" rx="1.0" ry="1.3" fill="#3010a8"/><ellipse cx="88.5" cy="156.8" rx="1.0" ry="1.3" fill="#3010a8"/><ellipse cx="95.9" cy="155.5" rx="1.0" ry="1.3" fill="#3010a8"/><ellipse cx="95.9" cy="155.5" rx="0.5" ry="0.7" fill="#c82070"/><ellipse cx="101.3" cy="154.9" rx="1.0" ry="1.3" fill="#3010a8"/><ellipse cx="101.3" cy="154.9" rx="0.5" ry="0.7" fill="#c82070"/><ellipse cx="108.0" cy="154.2" rx="1.0" ry="1.3" fill="#3010a8"/><ellipse cx="108.0" cy="154.2" rx="0.5" ry="0.7" fill="#c82070"/><ellipse cx="115.3" cy="152.9" rx="1.4" ry="1.3" fill="#3010a8"/><ellipse cx="115.3" cy="152.9" rx="0.7" ry="0.7" fill="#c82070"/><ellipse cx="121.8" cy="152.2" rx="1.5" ry="1.3" fill="#3010a8"/><ellipse cx="121.8" cy="152.2" rx="0.8" ry="0.7" fill="#c82070"/><ellipse cx="127.6" cy="151.8" rx="1.5" ry="1.3" fill="#3010a8"/><ellipse cx="127.6" cy="151.8" rx="0.7" ry="0.7" fill="#c82070"/><ellipse cx="134.4" cy="150.5" rx="1.4" ry="1.3" fill="#3010a8"/><ellipse cx="134.4" cy="150.5" rx="0.7" ry="0.7" fill="#c82070"/><ellipse cx="141.4" cy="149.6" rx="1.5" ry="1.3" fill="#3010a8"/><ellipse cx="141.4" cy="149.6" rx="0.8" ry="0.7" fill="#c82070"/><ellipse cx="147.3" cy="148.9" rx="1.4" ry="1.3" fill="#3010a8"/><ellipse cx="147.3" cy="148.9" rx="0.7" ry="0.7" fill="#c82070"/><ellipse cx="154.7" cy="147.7" rx="1.7" ry="1.3" fill="#3010a8"/><ellipse cx="161.8" cy="146.5" rx="1.9" ry="1.3" fill="#3010a8"/><ellipse cx="167.1" cy="145.5" rx="1.7" ry="1.3" fill="#3010a8"/><ellipse cx="167.1" cy="145.5" rx="0.8" ry="0.7" fill="#c82070"/><rect x="166.6" y="143.0" width="1" height="3" fill="#d0d040"/><ellipse cx="172.4" cy="145.0" rx="1.7" ry="1.3" fill="#3010a8"/><ellipse cx="172.4" cy="145.0" rx="0.9" ry="0.7" fill="#c82070"/><ellipse cx="177.1" cy="143.9" rx="1.2" ry="1.3" fill="#3010a8"/><ellipse cx="177.1" cy="143.9" rx="0.6" ry="0.7" fill="#c82070"/><rect x="176.6" y="141.4" width="1" height="3" fill="#d0d040"/><ellipse cx="182.7" cy="142.9" rx="1.5" ry="1.3" fill="#3010a8"/><ellipse cx="189.1" cy="142.6" rx="1.3" ry="1.3" fill="#3010a8"/><ellipse cx="189.1" cy="142.6" rx="0.7" ry="0.7" fill="#c82070"/><rect x="188.6" y="140.1" width="1" height="3" fill="#d0d040"/><ellipse cx="195.4" cy="141.7" rx="1.7" ry="1.3" fill="#3010a8"/><ellipse cx="201.6" cy="140.4" rx="1.8" ry="1.3" fill="#3010a8"/><ellipse cx="201.6" cy="140.4" rx="0.9" ry="0.7" fill="#c82070"/><ellipse cx="206.4" cy="139.7" rx="1.4" ry="1.3" fill="#3010a8"/><ellipse cx="206.4" cy="139.7" rx="0.7" ry="0.7" fill="#c82070"/><ellipse cx="212.3" cy="139.0" rx="1.6" ry="1.3" fill="#3010a8"/><ellipse cx="212.3" cy="139.0" rx="0.8" ry="0.7" fill="#c82070"/><ellipse cx="218.2" cy="138.4" rx="1.5" ry="1.3" fill="#3010a8"/><ellipse cx="218.2" cy="138.4" rx="0.8" ry="0.7" fill="#c82070"/><ellipse cx="223.0" cy="137.9" rx="1.8" ry="1.3" fill="#3010a8"/><ellipse cx="230.4" cy="136.6" rx="1.2" ry="1.3" fill="#3010a8"/><ellipse cx="230.4" cy="136.6" rx="0.6" ry="0.7" fill="#c82070"/><rect x="229.9" y="134.1" width="1" height="3" fill="#d0d040"/><ellipse cx="237.2" cy="136.0" rx="1.3" ry="1.3" fill="#3010a8"/><ellipse cx="237.2" cy="136.0" rx="0.7" ry="0.7" fill="#c82070"/><rect x="236.7" y="133.5" width="1" height="3" fill="#d0d040"/><ellipse cx="243.5" cy="135.2" rx="1.6" ry="1.3" fill="#3010a8"/><rect x="243.0" y="132.7" width="1" height="3" fill="#d0d040"/><ellipse cx="248.7" cy="133.9" rx="1.5" ry="1.3" fill="#3010a8"/><ellipse cx="248.7" cy="133.9" rx="0.8" ry="0.7" fill="#c82070"/><ellipse cx="255.0" cy="133.6" rx="1.4" ry="1.3" fill="#3010a8"/><ellipse cx="255.0" cy="133.6" rx="0.7" ry="0.7" fill="#c82070"/><rect x="254.5" y="131.1" width="1" height="3" fill="#d0d040"/><ellipse cx="262.3" cy="132.4" rx="1.4" ry="1.3" fill="#3010a8"/><ellipse cx="262.3" cy="132.4" rx="0.7" ry="0.7" fill="#c82070"/><rect x="261.8" y="129.9" width="1" height="3" fill="#d0d040"/><ellipse cx="268.3" cy="131.3" rx="1.7" ry="1.3" fill="#3010a8"/><ellipse cx="268.3" cy="131.3" rx="0.8" ry="0.7" fill="#c82070"/><ellipse cx="272.9" cy="130.2" rx="1.8" ry="1.3" fill="#3010a8"/><ellipse cx="272.9" cy="130.2" rx="0.9" ry="0.7" fill="#c82070"/><ellipse cx="277.9" cy="129.5" rx="1.3" ry="1.3" fill="#3010a8"/><ellipse cx="277.9" cy="129.5" rx="0.7" ry="0.7" fill="#c82070"/><rect x="277.4" y="127.0" width="1" height="3" fill="#d0d040"/><ellipse cx="285.2" cy="127.9" rx="1.7" ry="1.3" fill="#3010a8"/><ellipse cx="285.2" cy="127.9" rx="0.8" ry="0.7" fill="#c82070"/><ellipse cx="298.8" cy="126.0" rx="1.3" ry="1.3" fill="#3010a8"/><rect x="298.3" y="123.5" width="1" height="3" fill="#d0d040"/><ellipse cx="312.8" cy="123.3" rx="1.5" ry="1.3" fill="#3010a8"/><ellipse cx="312.8" cy="123.3" rx="0.8" ry="0.7" fill="#c82070"/><rect x="312.3" y="120.8" width="1" height="3" fill="#d0d040"/><ellipse cx="324.8" cy="120.9" rx="1.6" ry="1.3" fill="#3010a8"/><ellipse cx="324.8" cy="120.9" rx="0.8" ry="0.7" fill="#c82070"/><rect x="324.3" y="118.4" width="1" height="3" fill="#d0d040"/><ellipse cx="335.9" cy="119.0" rx="1.7" ry="1.3" fill="#3010a8"/><ellipse cx="335.9" cy="119.0" rx="0.8" ry="0.7" fill="#c82070"/><ellipse cx="343.9" cy="117.5" rx="1.7" ry="1.3" fill="#3010a8"/><ellipse cx="343.9" cy="117.5" rx="0.8" ry="0.7" fill="#c82070"/><ellipse cx="354.3" cy="116.1" rx="1.6" ry="1.3" fill="#3010a8"/><ellipse cx="368.3" cy="113.1" rx="1.5" ry="1.3" fill="#3010a8"/><ellipse cx="368.3" cy="113.1" rx="0.7" ry="0.7" fill="#c82070"/><ellipse cx="76.2" cy="145.0" rx="0.9" ry="1.4" fill="#3320b8"/><ellipse cx="76.2" cy="145.0" rx="0.5" ry="0.7" fill="#d83080"/><ellipse cx="97.5" cy="132.4" rx="0.9" ry="1.5" fill="#2a28d0"/><ellipse cx="97.5" cy="132.4" rx="0.5" ry="0.7" fill="#e8d040"/><ellipse cx="120.4" cy="115.3" rx="0.9" ry="1.3" fill="#3320b8"/><ellipse cx="142.2" cy="103.1" rx="1.2" ry="1.7" fill="#2a28d0"/><ellipse cx="142.2" cy="103.1" rx="0.6" ry="0.8" fill="#d83080"/><ellipse cx="184.3" cy="138.3" rx="1.1" ry="1.5" fill="#3a18c0"/><ellipse cx="134.9" cy="143.1" rx="0.9" ry="1.4" fill="#3320b8"/><ellipse cx="146.0" cy="123.8" rx="0.9" ry="1.4" fill="#2a28d0"/><ellipse cx="137.3" cy="142.0" rx="1.1" ry="1.7" fill="#2a28d0"/><ellipse cx="137.3" cy="142.0" rx="0.5" ry="0.8" fill="#d83080"/><ellipse cx="90.5" cy="151.6" rx="1.1" ry="1.7" fill="#3a18c0"/><ellipse cx="141.0" cy="129.1" rx="1.2" ry="1.8" fill="#3320b8"/><ellipse cx="184.9" cy="70.1" rx="1.0" ry="1.5" fill="#2a28d0"/><ellipse cx="187.1" cy="68.3" rx="0.9" ry="1.3" fill="#2a28d0"/><ellipse cx="128.6" cy="141.8" rx="1.2" ry="1.5" fill="#2a28d0"/><ellipse cx="265.8" cy="113.8" rx="1.0" ry="1.5" fill="#2a28d0"/><ellipse cx="174.8" cy="109.7" rx="0.9" ry="1.7" fill="#3a18c0"/><ellipse cx="177.0" cy="107.9" rx="0.8" ry="1.5" fill="#3a18c0"/><ellipse cx="159.2" cy="88.5" rx="1.2" ry="1.5" fill="#3320b8"/><ellipse cx="66.5" cy="155.6" rx="1.1" ry="1.4" fill="#2a28d0"/><ellipse cx="66.5" cy="155.6" rx="0.6" ry="0.7" fill="#d83080"/><ellipse cx="133.2" cy="127.1" rx="1.2" ry="1.3" fill="#3320b8"/><ellipse cx="197.6" cy="74.7" rx="0.9" ry="1.7" fill="#3320b8"/><ellipse cx="273.4" cy="24.5" rx="0.9" ry="2.3" fill="#3a18c0"/><ellipse cx="170.2" cy="139.9" rx="1.1" ry="1.6" fill="#3a18c0"/><ellipse cx="170.2" cy="139.9" rx="0.5" ry="0.8" fill="#d83080"/><ellipse cx="222.8" cy="129.5" rx="1.0" ry="1.8" fill="#3320b8"/><ellipse cx="222.8" cy="129.5" rx="0.5" ry="0.9" fill="#e8d040"/><ellipse cx="122.7" cy="126.2" rx="1.0" ry="1.7" fill="#2a28d0"/><ellipse cx="122.7" cy="126.2" rx="0.5" ry="0.9" fill="#d83080"/><ellipse cx="84.3" cy="150.6" rx="1.1" ry="1.5" fill="#3a18c0"/><ellipse cx="197.8" cy="134.5" rx="1.1" ry="1.7" fill="#2a28d0"/><ellipse cx="187.9" cy="113.4" rx="1.2" ry="1.4" fill="#2a28d0"/><ellipse cx="187.9" cy="113.4" rx="0.6" ry="0.7" fill="#d83080"/><ellipse cx="85.9" cy="141.7" rx="1.1" ry="1.6" fill="#3320b8"/><ellipse cx="85.9" cy="141.7" rx="0.6" ry="0.8" fill="#e8d040"/><ellipse cx="88.1" cy="139.9" rx="1.0" ry="1.4" fill="#3320b8"/><ellipse cx="97.5" cy="135.5" rx="0.9" ry="1.7" fill="#2a28d0"/><ellipse cx="188.3" cy="139.1" rx="1.2" ry="1.6" fill="#3320b8"/><ellipse cx="188.3" cy="139.1" rx="0.6" ry="0.8" fill="#e8d040"/><ellipse cx="149.7" cy="120.0" rx="0.9" ry="1.7" fill="#2a28d0"/><ellipse cx="96.9" cy="154.0" rx="1.1" ry="1.4" fill="#2a28d0"/><ellipse cx="96.9" cy="154.0" rx="0.6" ry="0.7" fill="#e8d040"/><ellipse cx="99.1" cy="152.2" rx="1.0" ry="1.2" fill="#2a28d0"/><ellipse cx="99.1" cy="152.2" rx="0.5" ry="0.6" fill="#e8d040"/><ellipse cx="176.5" cy="81.6" rx="1.3" ry="1.4" fill="#3320b8"/><ellipse cx="176.5" cy="81.6" rx="0.6" ry="0.7" fill="#d83080"/><ellipse cx="67.2" cy="151.6" rx="1.0" ry="1.5" fill="#2a28d0"/><ellipse cx="67.2" cy="151.6" rx="0.5" ry="0.8" fill="#d83080"/><ellipse cx="69.4" cy="149.8" rx="0.9" ry="1.4" fill="#2a28d0"/><ellipse cx="69.4" cy="149.8" rx="0.5" ry="0.7" fill="#d83080"/><ellipse cx="235.5" cy="125.2" rx="1.1" ry="1.7" fill="#2a28d0"/><ellipse cx="119.9" cy="116.0" rx="1.0" ry="1.7" fill="#2a28d0"/><ellipse cx="119.9" cy="116.0" rx="0.5" ry="0.8" fill="#d83080"/><ellipse cx="222.9" cy="53.3" rx="0.9" ry="1.8" fill="#3a18c0"/><ellipse cx="82.8" cy="152.4" rx="1.3" ry="1.6" fill="#3a18c0"/><ellipse cx="82.8" cy="152.4" rx="0.6" ry="0.8" fill="#d83080"/><ellipse cx="187.5" cy="71.3" rx="1.2" ry="1.7" fill="#3a18c0"/><ellipse cx="187.5" cy="71.3" rx="0.6" ry="0.9" fill="#e8d040"/><ellipse cx="171.7" cy="128.1" rx="1.1" ry="1.7" fill="#3320b8"/><ellipse cx="111.7" cy="139.6" rx="1.0" ry="1.6" fill="#2a28d0"/><ellipse cx="111.7" cy="139.6" rx="0.5" ry="0.8" fill="#d83080"/><ellipse cx="80.2" cy="140.4" rx="1.2" ry="1.5" fill="#2a28d0"/><ellipse cx="80.2" cy="140.4" rx="0.6" ry="0.8" fill="#d83080"/><ellipse cx="270.5" cy="107.7" rx="1.2" ry="1.6" fill="#2a28d0"/><ellipse cx="270.5" cy="107.7" rx="0.6" ry="0.8" fill="#d83080"/><ellipse cx="172.1" cy="134.6" rx="1.0" ry="1.7" fill="#2a28d0"/><ellipse cx="172.1" cy="134.6" rx="0.5" ry="0.9" fill="#d83080"/><ellipse cx="94.7" cy="135.8" rx="1.0" ry="1.4" fill="#2a28d0"/><ellipse cx="96.9" cy="134.0" rx="0.9" ry="1.3" fill="#2a28d0"/><ellipse cx="217.0" cy="62.5" rx="0.9" ry="1.8" fill="#2a28d0"/><ellipse cx="193.4" cy="85.7" rx="1.1" ry="1.8" fill="#3320b8"/><ellipse cx="248.3" cy="125.4" rx="1.1" ry="1.5" fill="#3320b8"/><ellipse cx="250.5" cy="123.6" rx="1.0" ry="1.3" fill="#3320b8"/><ellipse cx="158.1" cy="130.1" rx="0.9" ry="1.6" fill="#2a28d0"/><ellipse cx="158.1" cy="130.1" rx="0.5" ry="0.8" fill="#e8d040"/><ellipse cx="79.0" cy="145.6" rx="1.2" ry="1.8" fill="#3a18c0"/><ellipse cx="79.0" cy="145.6" rx="0.6" ry="0.9" fill="#d83080"/><ellipse cx="81.2" cy="143.8" rx="1.0" ry="1.6" fill="#3a18c0"/><ellipse cx="287.0" cy="119.1" rx="1.2" ry="1.7" fill="#3320b8"/><ellipse cx="114.6" cy="124.2" rx="1.3" ry="1.7" fill="#3a18c0"/><ellipse cx="116.8" cy="122.4" rx="1.2" ry="1.5" fill="#3a18c0"/><ellipse cx="223.1" cy="133.4" rx="1.3" ry="1.7" fill="#2a28d0"/><ellipse cx="183.6" cy="79.6" rx="1.2" ry="1.4" fill="#3a18c0"/><ellipse cx="141.9" cy="145.3" rx="0.9" ry="1.8" fill="#3a18c0"/><ellipse cx="141.9" cy="145.3" rx="0.5" ry="0.9" fill="#d83080"/><ellipse cx="77.7" cy="155.0" rx="1.1" ry="1.7" fill="#3320b8"/><ellipse cx="77.7" cy="155.0" rx="0.5" ry="0.9" fill="#d83080"/><ellipse cx="191.1" cy="119.4" rx="1.2" ry="1.3" fill="#3320b8"/><ellipse cx="193.3" cy="117.6" rx="1.1" ry="1.2" fill="#3320b8"/><ellipse cx="288.8" cy="100.6" rx="1.1" ry="1.7" fill="#3a18c0"/><ellipse cx="291.0" cy="98.8" rx="1.0" ry="1.5" fill="#3a18c0"/><ellipse cx="136.9" cy="133.0" rx="1.1" ry="1.7" fill="#3a18c0"/><ellipse cx="255.2" cy="107.2" rx="1.1" ry="1.4" fill="#2a28d0"/><ellipse cx="257.4" cy="105.4" rx="1.0" ry="1.2" fill="#2a28d0"/><ellipse cx="185.8" cy="136.2" rx="1.0" ry="1.6" fill="#2a28d0"/><ellipse cx="185.8" cy="136.2" rx="0.5" ry="0.8" fill="#d83080"/><ellipse cx="188.0" cy="134.4" rx="0.9" ry="1.4" fill="#2a28d0"/><ellipse cx="91.1" cy="154.7" rx="1.1" ry="1.7" fill="#2a28d0"/><ellipse cx="101.9" cy="137.5" rx="1.0" ry="1.7" fill="#2a28d0"/><ellipse cx="101.9" cy="137.5" rx="0.5" ry="0.9" fill="#d83080"/><ellipse cx="148.0" cy="116.4" rx="1.3" ry="1.4" fill="#3a18c0"/><ellipse cx="197.8" cy="117.7" rx="1.1" ry="1.3" fill="#2a28d0"/><ellipse cx="229.8" cy="56.0" rx="1.0" ry="2.3" fill="#3a18c0"/><ellipse cx="222.0" cy="116.1" rx="0.9" ry="1.6" fill="#3320b8"/><ellipse cx="180.7" cy="105.0" rx="1.0" ry="1.8" fill="#3320b8"/><ellipse cx="180.7" cy="105.0" rx="0.5" ry="0.9" fill="#d83080"/><ellipse cx="87.0" cy="152.2" rx="1.2" ry="1.8" fill="#2a28d0"/><ellipse cx="87.0" cy="152.2" rx="0.6" ry="0.9" fill="#d83080"/><ellipse cx="89.2" cy="150.4" rx="1.0" ry="1.6" fill="#2a28d0"/><ellipse cx="89.2" cy="150.4" rx="0.5" ry="0.8" fill="#d83080"/><ellipse cx="192.4" cy="132.6" rx="1.0" ry="1.6" fill="#2a28d0"/><ellipse cx="180.5" cy="91.9" rx="1.1" ry="1.6" fill="#3320b8"/><ellipse cx="180.5" cy="91.9" rx="0.5" ry="0.8" fill="#d83080"/><ellipse cx="144.4" cy="114.0" rx="1.2" ry="1.7" fill="#3a18c0"/><ellipse cx="144.4" cy="114.0" rx="0.6" ry="0.9" fill="#d83080"/><ellipse cx="146.6" cy="112.2" rx="1.1" ry="1.6" fill="#3a18c0"/><ellipse cx="146.6" cy="112.2" rx="0.5" ry="0.8" fill="#d83080"/><ellipse cx="153.6" cy="120.2" rx="1.1" ry="1.5" fill="#3a18c0"/><ellipse cx="153.6" cy="120.2" rx="0.6" ry="0.8" fill="#d83080"/><ellipse cx="211.0" cy="126.4" rx="1.1" ry="1.4" fill="#3a18c0"/><ellipse cx="211.0" cy="126.4" rx="0.5" ry="0.7" fill="#e8d040"/><ellipse cx="213.2" cy="124.6" rx="1.0" ry="1.2" fill="#3a18c0"/><ellipse cx="213.2" cy="124.6" rx="0.5" ry="0.6" fill="#e8d040"/><ellipse cx="145.5" cy="112.4" rx="1.2" ry="1.7" fill="#3320b8"/><ellipse cx="145.5" cy="112.4" rx="0.6" ry="0.9" fill="#d83080"/><ellipse cx="147.7" cy="110.6" rx="1.0" ry="1.5" fill="#3320b8"/><ellipse cx="147.7" cy="110.6" rx="0.5" ry="0.8" fill="#d83080"/><ellipse cx="76.5" cy="156.1" rx="1.1" ry="1.6" fill="#3a18c0"/><ellipse cx="89.1" cy="141.6" rx="1.3" ry="1.6" fill="#3a18c0"/><ellipse cx="181.3" cy="106.9" rx="1.1" ry="1.4" fill="#3a18c0"/><ellipse cx="181.1" cy="118.6" rx="1.1" ry="1.3" fill="#3320b8"/><ellipse cx="181.1" cy="118.6" rx="0.5" ry="0.7" fill="#d83080"/><ellipse cx="183.3" cy="116.8" rx="1.0" ry="1.2" fill="#3320b8"/><ellipse cx="183.3" cy="116.8" rx="0.5" ry="0.6" fill="#d83080"/><ellipse cx="127.5" cy="111.2" rx="1.2" ry="1.8" fill="#2a28d0"/><ellipse cx="127.5" cy="111.2" rx="0.6" ry="0.9" fill="#d83080"/><ellipse cx="129.7" cy="109.4" rx="1.0" ry="1.6" fill="#2a28d0"/><ellipse cx="133.3" cy="146.3" rx="1.3" ry="1.5" fill="#2a28d0"/><ellipse cx="133.3" cy="146.3" rx="0.6" ry="0.7" fill="#d83080"/><ellipse cx="135.5" cy="144.5" rx="1.2" ry="1.3" fill="#2a28d0"/><ellipse cx="135.5" cy="144.5" rx="0.6" ry="0.7" fill="#d83080"/><ellipse cx="110.6" cy="149.0" rx="1.2" ry="1.3" fill="#3a18c0"/><ellipse cx="110.6" cy="149.0" rx="0.6" ry="0.7" fill="#d83080"/><ellipse cx="113.7" cy="142.5" rx="0.9" ry="1.6" fill="#3320b8"/><ellipse cx="113.7" cy="142.5" rx="0.5" ry="0.8" fill="#e8d040"/><ellipse cx="209.1" cy="61.3" rx="0.7" ry="1.6" fill="#3a18c0"/><ellipse cx="155.4" cy="129.4" rx="1.0" ry="1.6" fill="#2a28d0"/><ellipse cx="193.0" cy="127.9" rx="1.1" ry="1.4" fill="#3320b8"/><ellipse cx="193.0" cy="127.9" rx="0.6" ry="0.7" fill="#d83080"/><ellipse cx="216.7" cy="114.1" rx="0.9" ry="1.7" fill="#3a18c0"/><ellipse cx="218.9" cy="112.3" rx="0.9" ry="1.5" fill="#3a18c0"/><ellipse cx="139.8" cy="130.3" rx="1.3" ry="1.7" fill="#3320b8"/><ellipse cx="139.8" cy="130.3" rx="0.6" ry="0.9" fill="#d83080"/><ellipse cx="290.8" cy="116.8" rx="1.2" ry="1.4" fill="#2a28d0"/><ellipse cx="186.2" cy="125.6" rx="1.3" ry="1.3" fill="#3a18c0"/><ellipse cx="186.2" cy="125.6" rx="0.6" ry="0.7" fill="#d83080"/><ellipse cx="228.4" cy="125.1" rx="1.2" ry="1.3" fill="#3a18c0"/><ellipse cx="228.4" cy="125.1" rx="0.6" ry="0.7" fill="#d83080"/><ellipse cx="230.6" cy="123.3" rx="1.1" ry="1.2" fill="#3a18c0"/><ellipse cx="230.6" cy="123.3" rx="0.5" ry="0.6" fill="#d83080"/><ellipse cx="285.7" cy="117.4" rx="1.2" ry="1.5" fill="#2a28d0"/><ellipse cx="121.1" cy="126.1" rx="1.1" ry="1.3" fill="#2a28d0"/><ellipse cx="121.1" cy="126.1" rx="0.6" ry="0.7" fill="#d83080"/><ellipse cx="77.3" cy="154.0" rx="1.0" ry="1.3" fill="#3a18c0"/><ellipse cx="240.9" cy="114.8" rx="1.2" ry="1.4" fill="#3a18c0"/><ellipse cx="223.0" cy="131.5" rx="1.3" ry="1.5" fill="#3a18c0"/><ellipse cx="232.1" cy="128.4" rx="1.3" ry="1.5" fill="#2a28d0"/><ellipse cx="149.0" cy="126.3" rx="1.1" ry="1.4" fill="#2a28d0"/><ellipse cx="149.0" cy="126.3" rx="0.6" ry="0.7" fill="#d83080"/><ellipse cx="198.2" cy="82.7" rx="0.9" ry="1.6" fill="#3a18c0"/><ellipse cx="250.4" cy="125.1" rx="1.2" ry="1.3" fill="#3a18c0"/><ellipse cx="250.4" cy="125.1" rx="0.6" ry="0.7" fill="#d83080"/><ellipse cx="136.6" cy="130.5" rx="1.2" ry="1.7" fill="#3a18c0"/><ellipse cx="136.6" cy="130.5" rx="0.6" ry="0.8" fill="#e8d040"/><ellipse cx="267.1" cy="38.7" rx="0.9" ry="2.0" fill="#3a18c0"/><ellipse cx="269.3" cy="36.9" rx="0.8" ry="1.8" fill="#3a18c0"/><ellipse cx="162.1" cy="138.0" rx="1.1" ry="1.5" fill="#3a18c0"/><ellipse cx="162.1" cy="138.0" rx="0.5" ry="0.8" fill="#d83080"/><ellipse cx="164.3" cy="136.2" rx="1.0" ry="1.4" fill="#3a18c0"/><ellipse cx="164.3" cy="136.2" rx="0.5" ry="0.7" fill="#d83080"/><ellipse cx="308.9" cy="89.7" rx="1.0" ry="1.7" fill="#3a18c0"/><ellipse cx="308.9" cy="89.7" rx="0.5" ry="0.8" fill="#d83080"/><ellipse cx="311.1" cy="87.9" rx="0.9" ry="1.5" fill="#3a18c0"/><ellipse cx="311.1" cy="87.9" rx="0.5" ry="0.7" fill="#d83080"/><ellipse cx="192.3" cy="134.7" rx="1.1" ry="1.5" fill="#3a18c0"/><ellipse cx="192.3" cy="134.7" rx="0.5" ry="0.8" fill="#e8d040"/><ellipse cx="203.1" cy="81.4" rx="0.8" ry="2.4" fill="#3320b8"/><ellipse cx="203.1" cy="81.4" rx="0.5" ry="1.2" fill="#d83080"/><ellipse cx="205.3" cy="79.6" rx="0.7" ry="2.1" fill="#3320b8"/><ellipse cx="173.3" cy="84.3" rx="1.2" ry="1.5" fill="#3a18c0"/><ellipse cx="173.3" cy="84.3" rx="0.6" ry="0.8" fill="#d83080"/><ellipse cx="175.5" cy="82.5" rx="1.1" ry="1.4" fill="#3a18c0"/><ellipse cx="175.5" cy="82.5" rx="0.5" ry="0.7" fill="#d83080"/><ellipse cx="160.8" cy="126.3" rx="1.0" ry="1.4" fill="#3a18c0"/><ellipse cx="163.0" cy="124.5" rx="0.9" ry="1.2" fill="#3a18c0"/><ellipse cx="269.9" cy="120.7" rx="1.1" ry="1.3" fill="#2a28d0"/><ellipse cx="139.0" cy="147.4" rx="1.0" ry="1.3" fill="#3a18c0"/><ellipse cx="139.0" cy="147.4" rx="0.5" ry="0.7" fill="#d83080"/><ellipse cx="141.2" cy="145.6" rx="0.9" ry="1.2" fill="#3a18c0"/><ellipse cx="141.2" cy="145.6" rx="0.5" ry="0.6" fill="#d83080"/><ellipse cx="131.2" cy="121.4" rx="1.0" ry="1.5" fill="#2a28d0"/><ellipse cx="198.8" cy="124.5" rx="0.9" ry="1.7" fill="#2a28d0"/><ellipse cx="201.0" cy="122.7" rx="0.8" ry="1.5" fill="#2a28d0"/><ellipse cx="126.2" cy="133.6" rx="1.1" ry="1.8" fill="#3320b8"/><ellipse cx="126.2" cy="133.6" rx="0.6" ry="0.9" fill="#d83080"/><ellipse cx="65.1" cy="157.9" rx="1.2" ry="1.5" fill="#2a28d0"/><ellipse cx="65.1" cy="157.9" rx="0.6" ry="0.8" fill="#d83080"/><ellipse cx="68.6" cy="157.5" rx="1.0" ry="1.4" fill="#3a18c0"/><ellipse cx="68.6" cy="157.5" rx="0.5" ry="0.7" fill="#d83080"/><ellipse cx="169.5" cy="85.5" rx="1.3" ry="1.3" fill="#2a28d0"/><ellipse cx="169.5" cy="85.5" rx="0.6" ry="0.7" fill="#e8d040"/><ellipse cx="171.7" cy="83.7" rx="1.1" ry="1.2" fill="#2a28d0"/><ellipse cx="126.6" cy="124.6" rx="1.0" ry="1.3" fill="#2a28d0"/><ellipse cx="126.6" cy="124.6" rx="0.5" ry="0.7" fill="#d83080"/><ellipse cx="162.4" cy="142.4" rx="0.9" ry="1.3" fill="#2a28d0"/><ellipse cx="162.4" cy="142.4" rx="0.5" ry="0.7" fill="#e8d040"/><ellipse cx="164.6" cy="140.6" rx="0.8" ry="1.2" fill="#2a28d0"/><ellipse cx="164.6" cy="140.6" rx="0.5" ry="0.6" fill="#e8d040"/><ellipse cx="133.6" cy="134.0" rx="1.0" ry="1.3" fill="#3a18c0"/><ellipse cx="133.6" cy="134.0" rx="0.5" ry="0.7" fill="#d83080"/><ellipse cx="135.8" cy="132.2" rx="0.9" ry="1.2" fill="#3a18c0"/><ellipse cx="165.5" cy="127.5" rx="1.1" ry="1.4" fill="#2a28d0"/><ellipse cx="178.0" cy="125.1" rx="1.1" ry="1.5" fill="#2a28d0"/><ellipse cx="180.2" cy="123.3" rx="1.0" ry="1.3" fill="#2a28d0"/><ellipse cx="169.1" cy="120.7" rx="1.0" ry="1.5" fill="#2a28d0"/><ellipse cx="169.1" cy="120.7" rx="0.5" ry="0.8" fill="#d83080"/><ellipse cx="171.3" cy="118.9" rx="0.9" ry="1.4" fill="#2a28d0"/><ellipse cx="96.7" cy="138.2" rx="1.0" ry="1.4" fill="#2a28d0"/><ellipse cx="96.7" cy="138.2" rx="0.5" ry="0.7" fill="#d83080"/><ellipse cx="66.3" cy="157.7" rx="1.0" ry="1.5" fill="#2a28d0"/><ellipse cx="74.6" cy="153.0" rx="1.3" ry="1.6" fill="#3a18c0"/><ellipse cx="224.2" cy="95.5" rx="0.9" ry="1.4" fill="#3320b8"/><ellipse cx="248.5" cy="119.2" rx="0.9" ry="1.5" fill="#2a28d0"/><ellipse cx="250.7" cy="117.4" rx="0.9" ry="1.4" fill="#2a28d0"/><ellipse cx="122.0" cy="142.2" rx="1.3" ry="1.7" fill="#3a18c0"/><ellipse cx="122.0" cy="142.2" rx="0.6" ry="0.8" fill="#d83080"/><ellipse cx="135.7" cy="121.1" rx="1.2" ry="1.7" fill="#2a28d0"/><ellipse cx="135.7" cy="121.1" rx="0.6" ry="0.9" fill="#e8d040"/><ellipse cx="158.2" cy="143.9" rx="1.1" ry="1.7" fill="#3320b8"/><ellipse cx="160.4" cy="142.1" rx="1.0" ry="1.5" fill="#3320b8"/><ellipse cx="137.4" cy="144.3" rx="1.1" ry="1.6" fill="#3a18c0"/><ellipse cx="137.4" cy="144.3" rx="0.6" ry="0.8" fill="#e8d040"/><ellipse cx="139.6" cy="142.5" rx="1.0" ry="1.4" fill="#3a18c0"/><ellipse cx="139.6" cy="142.5" rx="0.5" ry="0.7" fill="#e8d040"/><ellipse cx="138.3" cy="141.8" rx="1.1" ry="1.5" fill="#3a18c0"/><ellipse cx="237.5" cy="70.5" rx="0.8" ry="1.8" fill="#3a18c0"/><ellipse cx="218.0" cy="58.7" rx="0.9" ry="1.8" fill="#2a28d0"/><ellipse cx="210.7" cy="56.1" rx="0.7" ry="1.7" fill="#2a28d0"/><ellipse cx="177.1" cy="93.5" rx="0.9" ry="1.6" fill="#3a18c0"/><ellipse cx="177.1" cy="93.5" rx="0.5" ry="0.8" fill="#e8d040"/><ellipse cx="179.3" cy="91.7" rx="0.8" ry="1.4" fill="#3a18c0"/><ellipse cx="179.3" cy="91.7" rx="0.5" ry="0.7" fill="#e8d040"/><ellipse cx="215.9" cy="61.7" rx="0.8" ry="1.8" fill="#3a18c0"/><ellipse cx="153.7" cy="117.3" rx="1.0" ry="1.4" fill="#3a18c0"/><ellipse cx="205.5" cy="122.5" rx="1.0" ry="1.6" fill="#3320b8"/><ellipse cx="302.4" cy="23.9" rx="0.7" ry="1.8" fill="#2a28d0"/><ellipse cx="192.8" cy="121.5" rx="1.1" ry="1.4" fill="#3a18c0"/><ellipse cx="192.8" cy="121.5" rx="0.6" ry="0.7" fill="#d83080"/><ellipse cx="195.0" cy="119.7" rx="1.0" ry="1.2" fill="#3a18c0"/><ellipse cx="201.2" cy="77.6" rx="1.0" ry="1.5" fill="#3320b8"/><ellipse cx="203.4" cy="75.8" rx="0.9" ry="1.3" fill="#3320b8"/><ellipse cx="169.6" cy="108.2" rx="1.2" ry="1.4" fill="#2a28d0"/><ellipse cx="169.6" cy="108.2" rx="0.6" ry="0.7" fill="#d83080"/><ellipse cx="303.2" cy="4.6" rx="0.8" ry="1.7" fill="#2a28d0"/><ellipse cx="305.4" cy="2.8" rx="0.7" ry="1.5" fill="#2a28d0"/><ellipse cx="75.9" cy="147.8" rx="1.2" ry="1.8" fill="#3320b8"/><ellipse cx="78.1" cy="146.0" rx="1.1" ry="1.6" fill="#3320b8"/><ellipse cx="226.0" cy="122.9" rx="1.1" ry="1.6" fill="#3320b8"/><ellipse cx="206.0" cy="69.1" rx="0.8" ry="2.1" fill="#3a18c0"/><ellipse cx="206.0" cy="69.1" rx="0.5" ry="1.0" fill="#d83080"/><ellipse cx="208.2" cy="67.3" rx="0.7" ry="1.9" fill="#3a18c0"/><ellipse cx="242.8" cy="102.4" rx="0.9" ry="1.5" fill="#3320b8"/><ellipse cx="245.0" cy="100.6" rx="0.8" ry="1.4" fill="#3320b8"/><ellipse cx="215.4" cy="119.5" rx="1.0" ry="1.3" fill="#3a18c0"/><ellipse cx="156.5" cy="96.5" rx="1.2" ry="1.5" fill="#3320b8"/><ellipse cx="156.5" cy="96.5" rx="0.6" ry="0.8" fill="#d83080"/><ellipse cx="231.7" cy="108.5" rx="1.0" ry="1.8" fill="#3320b8"/><ellipse cx="244.5" cy="121.0" rx="1.2" ry="1.7" fill="#2a28d0"/><ellipse cx="93.0" cy="132.4" rx="1.0" ry="1.8" fill="#3a18c0"/><ellipse cx="93.0" cy="132.4" rx="0.5" ry="0.9" fill="#d83080"/><ellipse cx="254.5" cy="116.1" rx="1.2" ry="1.6" fill="#2a28d0"/><ellipse cx="254.5" cy="116.1" rx="0.6" ry="0.8" fill="#d83080"/><ellipse cx="62.8" cy="157.0" rx="0.9" ry="1.8" fill="#3a18c0"/><ellipse cx="62.8" cy="157.0" rx="0.5" ry="0.9" fill="#e8d040"/><ellipse cx="188.3" cy="125.8" rx="1.0" ry="1.8" fill="#3a18c0"/><ellipse cx="188.3" cy="125.8" rx="0.5" ry="0.9" fill="#d83080"/><ellipse cx="192.1" cy="86.4" rx="1.0" ry="1.3" fill="#2a28d0"/><ellipse cx="139.6" cy="135.0" rx="1.2" ry="1.3" fill="#2a28d0"/><ellipse cx="139.6" cy="135.0" rx="0.6" ry="0.7" fill="#d83080"/><ellipse cx="197.1" cy="69.1" rx="1.2" ry="1.8" fill="#3a18c0"/><ellipse cx="197.1" cy="69.1" rx="0.6" ry="0.9" fill="#d83080"/><ellipse cx="190.3" cy="101.0" rx="1.2" ry="1.5" fill="#3320b8"/><ellipse cx="192.5" cy="99.2" rx="1.0" ry="1.3" fill="#3320b8"/><ellipse cx="240.8" cy="114.6" rx="1.3" ry="1.3" fill="#3a18c0"/><ellipse cx="243.0" cy="112.8" rx="1.1" ry="1.2" fill="#3a18c0"/><ellipse cx="232.2" cy="49.2" rx="0.8" ry="1.9" fill="#2a28d0"/><ellipse cx="149.2" cy="107.9" rx="1.0" ry="1.5" fill="#3320b8"/><ellipse cx="149.2" cy="107.9" rx="0.5" ry="0.8" fill="#d83080"/><ellipse cx="220.4" cy="118.5" rx="1.0" ry="1.8" fill="#3320b8"/><ellipse cx="185.7" cy="135.7" rx="1.2" ry="1.7" fill="#3a18c0"/><ellipse cx="185.7" cy="135.7" rx="0.6" ry="0.8" fill="#d83080"/><ellipse cx="210.0" cy="115.9" rx="1.2" ry="1.5" fill="#2a28d0"/><ellipse cx="281.2" cy="117.1" rx="1.1" ry="1.6" fill="#3a18c0"/><ellipse cx="281.2" cy="117.1" rx="0.6" ry="0.8" fill="#d83080"/><ellipse cx="283.4" cy="115.3" rx="1.0" ry="1.4" fill="#3a18c0"/><ellipse cx="283.4" cy="115.3" rx="0.5" ry="0.7" fill="#d83080"/><ellipse cx="121.4" cy="144.8" rx="1.1" ry="1.6" fill="#2a28d0"/><ellipse cx="121.4" cy="144.8" rx="0.5" ry="0.8" fill="#d83080"/><ellipse cx="123.6" cy="143.0" rx="1.0" ry="1.5" fill="#2a28d0"/><ellipse cx="123.6" cy="143.0" rx="0.5" ry="0.7" fill="#d83080"/><ellipse cx="118.3" cy="118.1" rx="1.1" ry="1.6" fill="#3320b8"/><ellipse cx="118.3" cy="118.1" rx="0.6" ry="0.8" fill="#d83080"/><ellipse cx="202.2" cy="138.4" rx="1.3" ry="1.5" fill="#3a18c0"/><ellipse cx="202.2" cy="138.4" rx="0.6" ry="0.7" fill="#d83080"/><ellipse cx="117.8" cy="130.4" rx="0.9" ry="1.6" fill="#3320b8"/><ellipse cx="117.8" cy="130.4" rx="0.5" ry="0.8" fill="#d83080"/><ellipse cx="246.9" cy="129.2" rx="1.1" ry="1.6" fill="#2a28d0"/><ellipse cx="140.4" cy="138.0" rx="0.9" ry="1.6" fill="#3a18c0"/><ellipse cx="140.4" cy="138.0" rx="0.5" ry="0.8" fill="#d83080"/><ellipse cx="233.3" cy="54.2" rx="0.8" ry="2.1" fill="#2a28d0"/><ellipse cx="235.5" cy="52.4" rx="0.7" ry="1.9" fill="#2a28d0"/><ellipse cx="62.4" cy="153.9" rx="1.1" ry="1.7" fill="#3320b8"/><ellipse cx="62.4" cy="153.9" rx="0.6" ry="0.9" fill="#d83080"/><ellipse cx="81.5" cy="148.5" rx="1.0" ry="1.6" fill="#2a28d0"/><ellipse cx="81.5" cy="148.5" rx="0.5" ry="0.8" fill="#d83080"/><ellipse cx="307.3" cy="101.3" rx="1.3" ry="1.5" fill="#3a18c0"/><ellipse cx="301.4" cy="18.3" rx="0.8" ry="2.3" fill="#3320b8"/><ellipse cx="114.3" cy="149.1" rx="1.2" ry="1.6" fill="#3320b8"/><ellipse cx="114.3" cy="149.1" rx="0.6" ry="0.8" fill="#d83080"/><ellipse cx="116.5" cy="147.3" rx="1.1" ry="1.5" fill="#3320b8"/><ellipse cx="114.2" cy="146.1" rx="1.0" ry="1.7" fill="#3320b8"/><ellipse cx="70.5" cy="156.5" rx="1.1" ry="1.6" fill="#2a28d0"/><ellipse cx="70.5" cy="156.5" rx="0.6" ry="0.8" fill="#d83080"/><ellipse cx="72.7" cy="154.7" rx="1.0" ry="1.4" fill="#2a28d0"/><ellipse cx="72.7" cy="154.7" rx="0.5" ry="0.7" fill="#d83080"/><ellipse cx="114.8" cy="148.2" rx="1.1" ry="1.6" fill="#3320b8"/><ellipse cx="114.8" cy="148.2" rx="0.6" ry="0.8" fill="#d83080"/><ellipse cx="117.0" cy="146.4" rx="1.0" ry="1.4" fill="#3320b8"/><ellipse cx="117.0" cy="146.4" rx="0.5" ry="0.7" fill="#d83080"/><ellipse cx="120.2" cy="121.3" rx="1.0" ry="1.4" fill="#2a28d0"/><ellipse cx="122.4" cy="119.5" rx="0.9" ry="1.2" fill="#2a28d0"/><ellipse cx="214.1" cy="102.5" rx="1.0" ry="1.5" fill="#3320b8"/><ellipse cx="180.0" cy="131.5" rx="1.2" ry="1.7" fill="#3a18c0"/><ellipse cx="180.0" cy="131.5" rx="0.6" ry="0.9" fill="#d83080"/><ellipse cx="195.2" cy="129.8" rx="1.3" ry="1.4" fill="#2a28d0"/><ellipse cx="195.2" cy="129.8" rx="0.6" ry="0.7" fill="#d83080"/><ellipse cx="197.4" cy="128.0" rx="1.2" ry="1.2" fill="#2a28d0"/><ellipse cx="128.5" cy="110.5" rx="1.1" ry="1.6" fill="#3a18c0"/><ellipse cx="128.5" cy="110.5" rx="0.5" ry="0.8" fill="#d83080"/><ellipse cx="82.0" cy="156.0" rx="1.2" ry="1.4" fill="#3320b8"/><ellipse cx="82.0" cy="156.0" rx="0.6" ry="0.7" fill="#d83080"/><ellipse cx="84.2" cy="154.2" rx="1.1" ry="1.3" fill="#3320b8"/><ellipse cx="84.2" cy="154.2" rx="0.5" ry="0.6" fill="#d83080"/><ellipse cx="221.7" cy="114.2" rx="1.0" ry="1.8" fill="#3320b8"/><ellipse cx="281.4" cy="118.9" rx="0.9" ry="1.8" fill="#3320b8"/><ellipse cx="281.4" cy="118.9" rx="0.5" ry="0.9" fill="#d83080"/><ellipse cx="283.6" cy="117.1" rx="0.8" ry="1.6" fill="#3320b8"/><ellipse cx="283.6" cy="117.1" rx="0.5" ry="0.8" fill="#d83080"/><ellipse cx="121.4" cy="142.5" rx="1.1" ry="1.5" fill="#2a28d0"/><ellipse cx="121.4" cy="142.5" rx="0.5" ry="0.7" fill="#d83080"/><ellipse cx="123.6" cy="140.7" rx="1.0" ry="1.3" fill="#2a28d0"/><ellipse cx="188.3" cy="81.4" rx="1.0" ry="1.3" fill="#3a18c0"/><ellipse cx="188.3" cy="81.4" rx="0.5" ry="0.7" fill="#d83080"/><ellipse cx="193.3" cy="88.5" rx="1.1" ry="1.4" fill="#3320b8"/><ellipse cx="193.3" cy="88.5" rx="0.5" ry="0.7" fill="#d83080"/><ellipse cx="195.5" cy="86.7" rx="1.0" ry="1.3" fill="#3320b8"/><ellipse cx="195.5" cy="86.7" rx="0.5" ry="0.6" fill="#d83080"/><ellipse cx="176.7" cy="126.6" rx="1.2" ry="1.7" fill="#2a28d0"/><ellipse cx="176.7" cy="126.6" rx="0.6" ry="0.8" fill="#d83080"/><ellipse cx="178.9" cy="124.8" rx="1.1" ry="1.5" fill="#2a28d0"/><ellipse cx="107.6" cy="135.8" rx="1.0" ry="1.3" fill="#3a18c0"/><ellipse cx="107.6" cy="135.8" rx="0.5" ry="0.7" fill="#d83080"/><ellipse cx="192.1" cy="89.6" rx="1.3" ry="1.6" fill="#3320b8"/><ellipse cx="194.3" cy="87.8" rx="1.1" ry="1.5" fill="#3320b8"/><ellipse cx="198.3" cy="138.4" rx="0.9" ry="1.6" fill="#2a28d0"/><ellipse cx="198.3" cy="138.4" rx="0.5" ry="0.8" fill="#d83080"/><ellipse cx="200.5" cy="136.6" rx="0.8" ry="1.4" fill="#2a28d0"/><ellipse cx="86.7" cy="138.0" rx="1.1" ry="1.5" fill="#3a18c0"/><ellipse cx="86.7" cy="138.0" rx="0.6" ry="0.8" fill="#d83080"/><ellipse cx="183.9" cy="88.4" rx="0.9" ry="1.6" fill="#3320b8"/><ellipse cx="183.9" cy="88.4" rx="0.5" ry="0.8" fill="#e8d040"/><ellipse cx="72.8" cy="149.8" rx="1.2" ry="1.3" fill="#3320b8"/><ellipse cx="75.0" cy="148.0" rx="1.1" ry="1.2" fill="#3320b8"/><ellipse cx="163.0" cy="136.5" rx="1.2" ry="1.3" fill="#3a18c0"/><ellipse cx="163.0" cy="136.5" rx="0.6" ry="0.7" fill="#e8d040"/><ellipse cx="140.2" cy="138.5" rx="1.2" ry="1.6" fill="#2a28d0"/><ellipse cx="120.9" cy="117.5" rx="1.2" ry="1.5" fill="#3320b8"/><ellipse cx="120.9" cy="117.5" rx="0.6" ry="0.8" fill="#d83080"/><ellipse cx="231.0" cy="66.2" rx="0.9" ry="1.7" fill="#2a28d0"/><ellipse cx="129.4" cy="148.3" rx="1.1" ry="1.6" fill="#3320b8"/><ellipse cx="129.4" cy="148.3" rx="0.5" ry="0.8" fill="#d83080"/><ellipse cx="149.1" cy="117.8" rx="1.0" ry="1.4" fill="#3a18c0"/><ellipse cx="149.1" cy="117.8" rx="0.5" ry="0.7" fill="#e8d040"/><ellipse cx="151.3" cy="116.0" rx="0.9" ry="1.2" fill="#3a18c0"/><ellipse cx="151.3" cy="116.0" rx="0.5" ry="0.6" fill="#e8d040"/><ellipse cx="185.5" cy="88.4" rx="1.0" ry="1.5" fill="#3320b8"/><ellipse cx="187.7" cy="86.6" rx="0.9" ry="1.4" fill="#3320b8"/><ellipse cx="84.8" cy="141.9" rx="1.1" ry="1.7" fill="#3a18c0"/><ellipse cx="87.0" cy="140.1" rx="1.0" ry="1.5" fill="#3a18c0"/><ellipse cx="309.0" cy="22.2" rx="1.0" ry="2.3" fill="#3a18c0"/><ellipse cx="311.2" cy="20.4" rx="0.9" ry="2.1" fill="#3a18c0"/><ellipse cx="154.2" cy="119.7" rx="1.1" ry="1.5" fill="#3320b8"/><ellipse cx="154.2" cy="119.7" rx="0.5" ry="0.8" fill="#d83080"/><ellipse cx="156.4" cy="117.9" rx="1.0" ry="1.4" fill="#3320b8"/><ellipse cx="231.2" cy="121.4" rx="1.0" ry="1.8" fill="#2a28d0"/><ellipse cx="105.9" cy="131.5" rx="1.2" ry="1.8" fill="#3320b8"/><ellipse cx="105.9" cy="131.5" rx="0.6" ry="0.9" fill="#d83080"/></g></svg><div class="vl" style="left:193px"></div><div class="hl" style="top:84px"></div></div>

<!-- status separators -->
<div class="sep" style="left:261px;top:415px;height:15px;"></div>
<div class="sep" style="left:377px;top:415px;height:15px;"></div>
<div class="sep" style="left:692px;top:415px;height:15px;"></div>
<div class="sep" style="left:808px;top:415px;height:15px;"></div>
<div class="a" style="left:569px;top:430px;width:3px;height:3px;border-radius:50%;background:#aaa;"></div>
<div class="a" style="left:574px;top:430px;width:3px;height:3px;border-radius:50%;background:#aaa;"></div>
<div class="a" style="left:579px;top:430px;width:3px;height:3px;border-radius:50%;background:#aaa;"></div>
<div class="a" style="left:1007px;top:390px;width:3px;height:3px;border-radius:50%;background:#aaa;"></div>
<div class="a" style="left:1007px;top:395px;width:3px;height:3px;border-radius:50%;background:#aaa;"></div>
<div class="a" style="left:1007px;top:400px;width:3px;height:3px;border-radius:50%;background:#aaa;"></div>

<!-- bottom tabs + table -->
<div class="a" style="left:145px;top:465px;width:862px;height:168px;background:#fff;border-left:1px solid #a8a8a8;border-top:2px solid #c4c4c4;border-right:2px solid #b0b0b0;"></div>
<div class="a" style="left:145px;top:463px;width:106px;height:3px;background:#9cb8d6;"></div>
<div class="a" style="left:146px;top:491px;width:860px;height:1px;background:#e6e6e6;"></div>
<div class="a" style="left:280px;top:467px;width:1px;height:24px;background:#e6e6e6;"></div>
<div class="a" style="left:381px;top:467px;width:1px;height:24px;background:#e6e6e6;"></div>
<div class="a" style="left:482px;top:467px;width:1px;height:24px;background:#e6e6e6;"></div>

<span class="t" style="left:42.00px;top:12.03px;font-size:12px;line-height:12px;transform:scaleX(0.9155);">File</span>
<span class="t" style="left:76.00px;top:12.03px;font-size:12px;line-height:12px;transform:scaleX(0.9623);">Analysis</span>
<span class="t" style="left:135.00px;top:12.03px;font-size:12px;line-height:12px;">Tools</span>
<span class="t" style="left:179.00px;top:12.03px;font-size:12px;line-height:12px;transform:scaleX(0.9598);">Help</span>
<span class="t" style="left:282.00px;top:12.03px;font-size:12px;line-height:12px;color:#505050;transform:scaleX(0.9778);">Analysis - C:\GC Image\Projects\Investigator\Diesels\Reports\analysisMS-PR.001.gca</span>
<span class="t" style="left:12.30px;top:42.07px;font-size:14px;line-height:14px;font-weight:700;color:#333;transform:scaleX(0.9637);">Analysis</span>
<span class="t" style="left:84.00px;top:44.03px;font-size:12px;line-height:12px;font-style:italic;transform:scaleX(0.8976);">Classes:</span>
<span class="t" style="left:150.60px;top:44.03px;font-size:12px;line-height:12px;font-style:italic;transform:scaleX(0.9303);">Images:</span>
<span class="t" style="left:215.50px;top:44.03px;font-size:12px;line-height:12px;font-style:italic;transform:scaleX(0.9306);">Compounds: (</span>
<span class="t" style="left:315.30px;top:44.03px;font-size:12px;line-height:12px;font-style:italic;transform:scaleX(0.9025);">Peaks</span>
<span class="t" style="left:388.88px;top:44.03px;font-size:12px;line-height:12px;font-style:italic;transform:scaleX(0.8841);">Areas</span>
<span class="t" style="left:438.80px;top:44.03px;font-size:12px;line-height:12px;font-style:italic;transform:scaleX(0.8568);">Sets)</span>
<span class="t" style="left:28.00px;top:65.53px;font-size:12px;line-height:12px;color:#222;transform:scaleX(0.9776);">- C:\GC Image\Projects\Investigator\Diesels\Reports\analysisMS-PR.001.gca</span>
<span class="t" style="left:132.50px;top:43.83px;font-size:12px;line-height:12px;color:#f2f2f2;transform:scaleX(0.7143);">4</span>
<span class="t" style="left:197.50px;top:43.83px;font-size:12px;line-height:12px;color:#f2f2f2;transform:scaleX(0.7143);">8</span>
<span class="t" style="left:291.50px;top:43.83px;font-size:12px;line-height:12px;color:#f2f2f2;transform:scaleX(0.8355);">525</span>
<span class="t" style="left:355.50px;top:43.83px;font-size:12px;line-height:12px;color:#f2f2f2;transform:scaleX(0.8565);">1,474</span>
<span class="t" style="left:427.00px;top:43.83px;font-size:12px;line-height:12px;color:#f2f2f2;transform:scaleX(0.7143);">1</span>
<span class="t" style="left:528.60px;top:46.03px;font-size:12px;line-height:12px;font-weight:700;color:#fff;transform:scaleX(0.8882);">Find</span>
<span class="t" style="left:528.60px;top:62.03px;font-size:12px;line-height:12px;font-weight:700;color:#fff;transform:scaleX(0.9130);">Compounds</span>
<span class="t" style="left:620.00px;top:46.03px;font-size:12px;line-height:12px;font-weight:700;color:#fff;transform:scaleX(0.9534);">Compare</span>
<span class="t" style="left:620.00px;top:62.03px;font-size:12px;line-height:12px;font-weight:700;color:#fff;transform:scaleX(0.9477);">Images</span>
<span class="t" style="left:694.80px;top:46.03px;font-size:12px;line-height:12px;font-weight:700;color:#fff;transform:scaleX(0.9534);">Compare</span>
<span class="t" style="left:694.80px;top:62.03px;font-size:12px;line-height:12px;font-weight:700;color:#fff;transform:scaleX(0.8338);">Classes</span>
<span class="t" style="left:782.50px;top:54.03px;font-size:12px;line-height:12px;font-weight:700;color:#fff;transform:scaleX(0.8829);">Run PCA</span>
<span class="t" style="left:850.20px;top:54.03px;font-size:12px;line-height:12px;font-weight:700;color:#fff;transform:scaleX(0.9632);">Run F-Test</span>
<span class="t" style="left:943.00px;top:46.03px;font-size:12px;line-height:12px;font-weight:700;color:#fff;transform:scaleX(0.9326);">Analyze</span>
<span class="t" style="left:943.98px;top:62.03px;font-size:12px;line-height:12px;font-weight:700;color:#fff;transform:scaleX(0.9774);">with ML</span>
<span class="t" style="left:151.40px;top:93.23px;font-size:12px;line-height:12px;font-weight:700;transform:scaleX(0.9330);">Analyzed [A]:</span>
<span class="t" style="left:226.00px;top:93.23px;font-size:12px;line-height:12px;transform:scaleX(0.9875);">C:\GC Image\Projects\Investigator\Diesels\Images\Chevron_Run01_Img01.gci</span>
<span class="t" style="left:151.40px;top:108.63px;font-size:12px;line-height:12px;font-weight:700;transform:scaleX(0.9812);">Reference [R]:</span>
<span class="t" style="left:235.00px;top:108.63px;font-size:12px;line-height:12px;transform:scaleX(0.9836);">C:\GC Image\Projects\Investigator\Diesels\Images\Shell_Run01_Img01.gci</span>
<span class="t" style="left:178.00px;top:140.83px;font-size:12px;line-height:12px;transform:scaleX(1.0097);">Zoom:</span>
<span class="t" style="left:292.00px;top:140.83px;font-size:12px;line-height:12px;transform:scaleX(0.8559);">Reset</span>
<span class="t" style="left:332.60px;top:140.83px;font-size:12px;line-height:12px;transform:scaleX(0.9444);">Colorize:</span>
<span class="t" style="left:403.00px;top:140.83px;font-size:12px;line-height:12px;transform:scaleX(0.9718);">Value Map:</span>
<span class="t" style="left:472.30px;top:140.83px;font-size:12px;line-height:12px;transform:scaleX(0.9502);">Linear</span>
<span class="t" style="left:542.48px;top:140.83px;font-size:12px;line-height:12px;transform:scaleX(1.0243);">Interpolation:</span>
<span class="t" style="left:623.00px;top:140.83px;font-size:12px;line-height:12px;transform:scaleX(0.9744);">Bilinear</span>
<span class="t" style="left:713.00px;top:140.83px;font-size:12px;line-height:12px;transform:scaleX(0.9680);">Transform:</span>
<span class="t" style="left:778.60px;top:140.83px;font-size:12px;line-height:12px;transform:scaleX(0.9656);">Translation and ...</span>
<span class="t" style="left:924.40px;top:140.83px;font-size:12px;line-height:12px;transform:scaleX(0.9176);">Use Time Scale</span>
<span class="t" style="left:157.30px;top:171.03px;font-size:12px;line-height:12px;transform:scaleX(0.9663);">Side-by-Side</span>
<span class="t" style="left:248.00px;top:171.03px;font-size:12px;line-height:12px;transform:scaleX(0.9675);">Overlay</span>
<span class="t" style="left:312.00px;top:171.03px;font-size:12px;line-height:12px;transform:scaleX(0.9817);">Difference</span>
<span class="t" style="left:150.40px;top:201.93px;font-size:12px;line-height:12px;transform:scaleX(0.9799);">Compare:</span>
<span class="t" style="left:212.00px;top:201.93px;font-size:12px;line-height:12px;transform:scaleX(0.9725);">Analyzed Image</span>
<span class="t" style="left:353.00px;top:201.93px;font-size:12px;line-height:12px;transform:scaleX(0.9000);">vs.</span>
<span class="t" style="left:377.00px;top:201.93px;font-size:12px;line-height:12px;transform:scaleX(0.9505);">Reference Image</span>
<span class="t" style="left:150.40px;top:417.03px;font-size:12px;line-height:12px;transform:scaleX(0.8993);">(78.09,10.77)</span>
<span class="t" style="left:266.00px;top:417.03px;font-size:12px;line-height:12px;transform:scaleX(0.8512);">6441</span>
<span class="t" style="left:384.30px;top:417.03px;font-size:12px;line-height:12px;transform:scaleX(0.9280);">Range: [-1897,10665059]</span>
<span class="t" style="left:581.20px;top:417.03px;font-size:12px;line-height:12px;transform:scaleX(0.8993);">(78.09,10.77)</span>
<span class="t" style="left:697.50px;top:417.03px;font-size:12px;line-height:12px;transform:scaleX(0.8512);">5280</span>
<span class="t" style="left:815.40px;top:417.03px;font-size:12px;line-height:12px;transform:scaleX(0.9265);">Range: [-2236,10469904]</span>
<span class="t" style="left:156.33px;top:443.53px;font-size:12px;line-height:12px;transform:scaleX(0.9726);">Image Statistics</span>
<span class="t" style="left:263.10px;top:443.53px;font-size:12px;line-height:12px;transform:scaleX(1.0077);">Alignment Markers</span>
<span class="t" style="left:388.20px;top:443.53px;font-size:12px;line-height:12px;transform:scaleX(1.0092);">Compounds</span>
<span class="t" style="left:478.70px;top:443.53px;font-size:12px;line-height:12px;transform:scaleX(0.9558);">Differences</span>
<span class="t" style="left:561.00px;top:443.53px;font-size:12px;line-height:12px;transform:scaleX(0.9829);">Review - Matches &amp; Differences</span>
<span class="t" style="left:200.68px;top:473.63px;font-size:12px;line-height:12px;transform:scaleX(1.0250);">Item</span>
<span class="t" style="left:289.30px;top:473.63px;font-size:12px;line-height:12px;transform:scaleX(0.9655);">Analyzed Image</span>
<span class="t" style="left:388.00px;top:473.63px;font-size:12px;line-height:12px;transform:scaleX(0.9494);">Reference Image</span>
<span class="t" style="left:149.60px;top:497.03px;font-size:12px;line-height:12px;transform:scaleX(0.9844);">Blob Count</span>
<span class="t" style="left:355.80px;top:497.03px;font-size:12px;line-height:12px;transform:scaleX(0.8512);">2188</span>
<span class="t" style="left:457.00px;top:497.03px;font-size:12px;line-height:12px;transform:scaleX(0.8512);">2037</span>
<span class="t" style="left:149.60px;top:517.03px;font-size:12px;line-height:12px;">Total Blob Volume</span>
<span class="t" style="left:286.80px;top:517.03px;font-size:12px;line-height:12px;transform:scaleX(0.8866);">16974025172.0000</span>
<span class="t" style="left:388.00px;top:517.03px;font-size:12px;line-height:12px;transform:scaleX(0.8866);">19226420725.0000</span>
<span class="t" style="left:149.60px;top:537.03px;font-size:12px;line-height:12px;">Total Volume</span>
<span class="t" style="left:286.80px;top:537.03px;font-size:12px;line-height:12px;transform:scaleX(0.8866);">18034877730.0000</span>
<span class="t" style="left:388.00px;top:537.03px;font-size:12px;line-height:12px;transform:scaleX(0.8866);">20261922418.0000</span>
<span class="t" style="left:149.60px;top:557.03px;font-size:12px;line-height:12px;transform:scaleX(0.9806);">Start Time (min)</span>
<span class="t" style="left:346.80px;top:557.03px;font-size:12px;line-height:12px;transform:scaleX(0.8642);">0.0854</span>
<span class="t" style="left:448.00px;top:557.03px;font-size:12px;line-height:12px;transform:scaleX(0.8642);">0.0854</span>
<span class="t" style="left:149.60px;top:577.03px;font-size:12px;line-height:12px;transform:scaleX(0.9917);">Total Run Time (min)</span>
<span class="t" style="left:334.80px;top:577.03px;font-size:12px;line-height:12px;transform:scaleX(0.8734);">169.6667</span>
<span class="t" style="left:436.00px;top:577.03px;font-size:12px;line-height:12px;transform:scaleX(0.8734);">169.6667</span>
<span class="t" style="left:149.60px;top:597.03px;font-size:12px;line-height:12px;transform:scaleX(0.9532);">Sampling Rate (Hz)</span>
<span class="t" style="left:340.80px;top:597.03px;font-size:12px;line-height:12px;transform:scaleX(0.8695);">15.4154</span>
<span class="t" style="left:442.00px;top:597.03px;font-size:12px;line-height:12px;transform:scaleX(0.8695);">15.4154</span>
<span class="t" style="left:149.60px;top:617.03px;font-size:12px;line-height:12px;transform:scaleX(0.9927);">Modulation Period (sec)</span>
<span class="t" style="left:340.80px;top:617.03px;font-size:12px;line-height:12px;transform:scaleX(0.8695);">20.0000</span>
<span class="t" style="left:442.00px;top:617.03px;font-size:12px;line-height:12px;transform:scaleX(0.8695);">20.0000</span>
<span class="t" style="left:22.01px;top:101.03px;font-size:12px;line-height:12px;transform:scaleX(0.9908);">Images</span>
<span class="t" style="left:23.00px;top:141.03px;font-size:12px;line-height:12px;transform:scaleX(1.0185);">Compounds</span>
<span class="t" style="left:41.20px;top:181.03px;font-size:12px;line-height:12px;transform:scaleX(0.8935);">Peaks</span>
<span class="t" style="left:41.00px;top:221.03px;font-size:12px;line-height:12px;transform:scaleX(0.9251);">Areas</span>
<span class="t" style="left:41.00px;top:261.03px;font-size:12px;line-height:12px;transform:scaleX(0.8746);">Sets</span>
<span class="t" style="left:23.00px;top:301.03px;font-size:12px;line-height:12px;transform:scaleX(0.9519);">Statistics</span>
<span class="t" style="left:41.00px;top:341.03px;font-size:12px;line-height:12px;transform:scaleX(1.0259);">Attributes</span>
<span class="t" style="left:41.00px;top:381.03px;font-size:12px;line-height:12px;transform:scaleX(0.9817);">Summary</span>
<span class="t" style="left:23.00px;top:421.03px;font-size:12px;line-height:12px;transform:scaleX(0.9197);">Results</span>
<span class="t" style="left:41.20px;top:461.03px;font-size:12px;line-height:12px;transform:scaleX(0.9603);">Compare: C...</span>
<span class="t" style="left:23.00px;top:501.03px;font-size:12px;line-height:12px;transform:scaleX(1.0395);">Configuration</span>
</body></html>
